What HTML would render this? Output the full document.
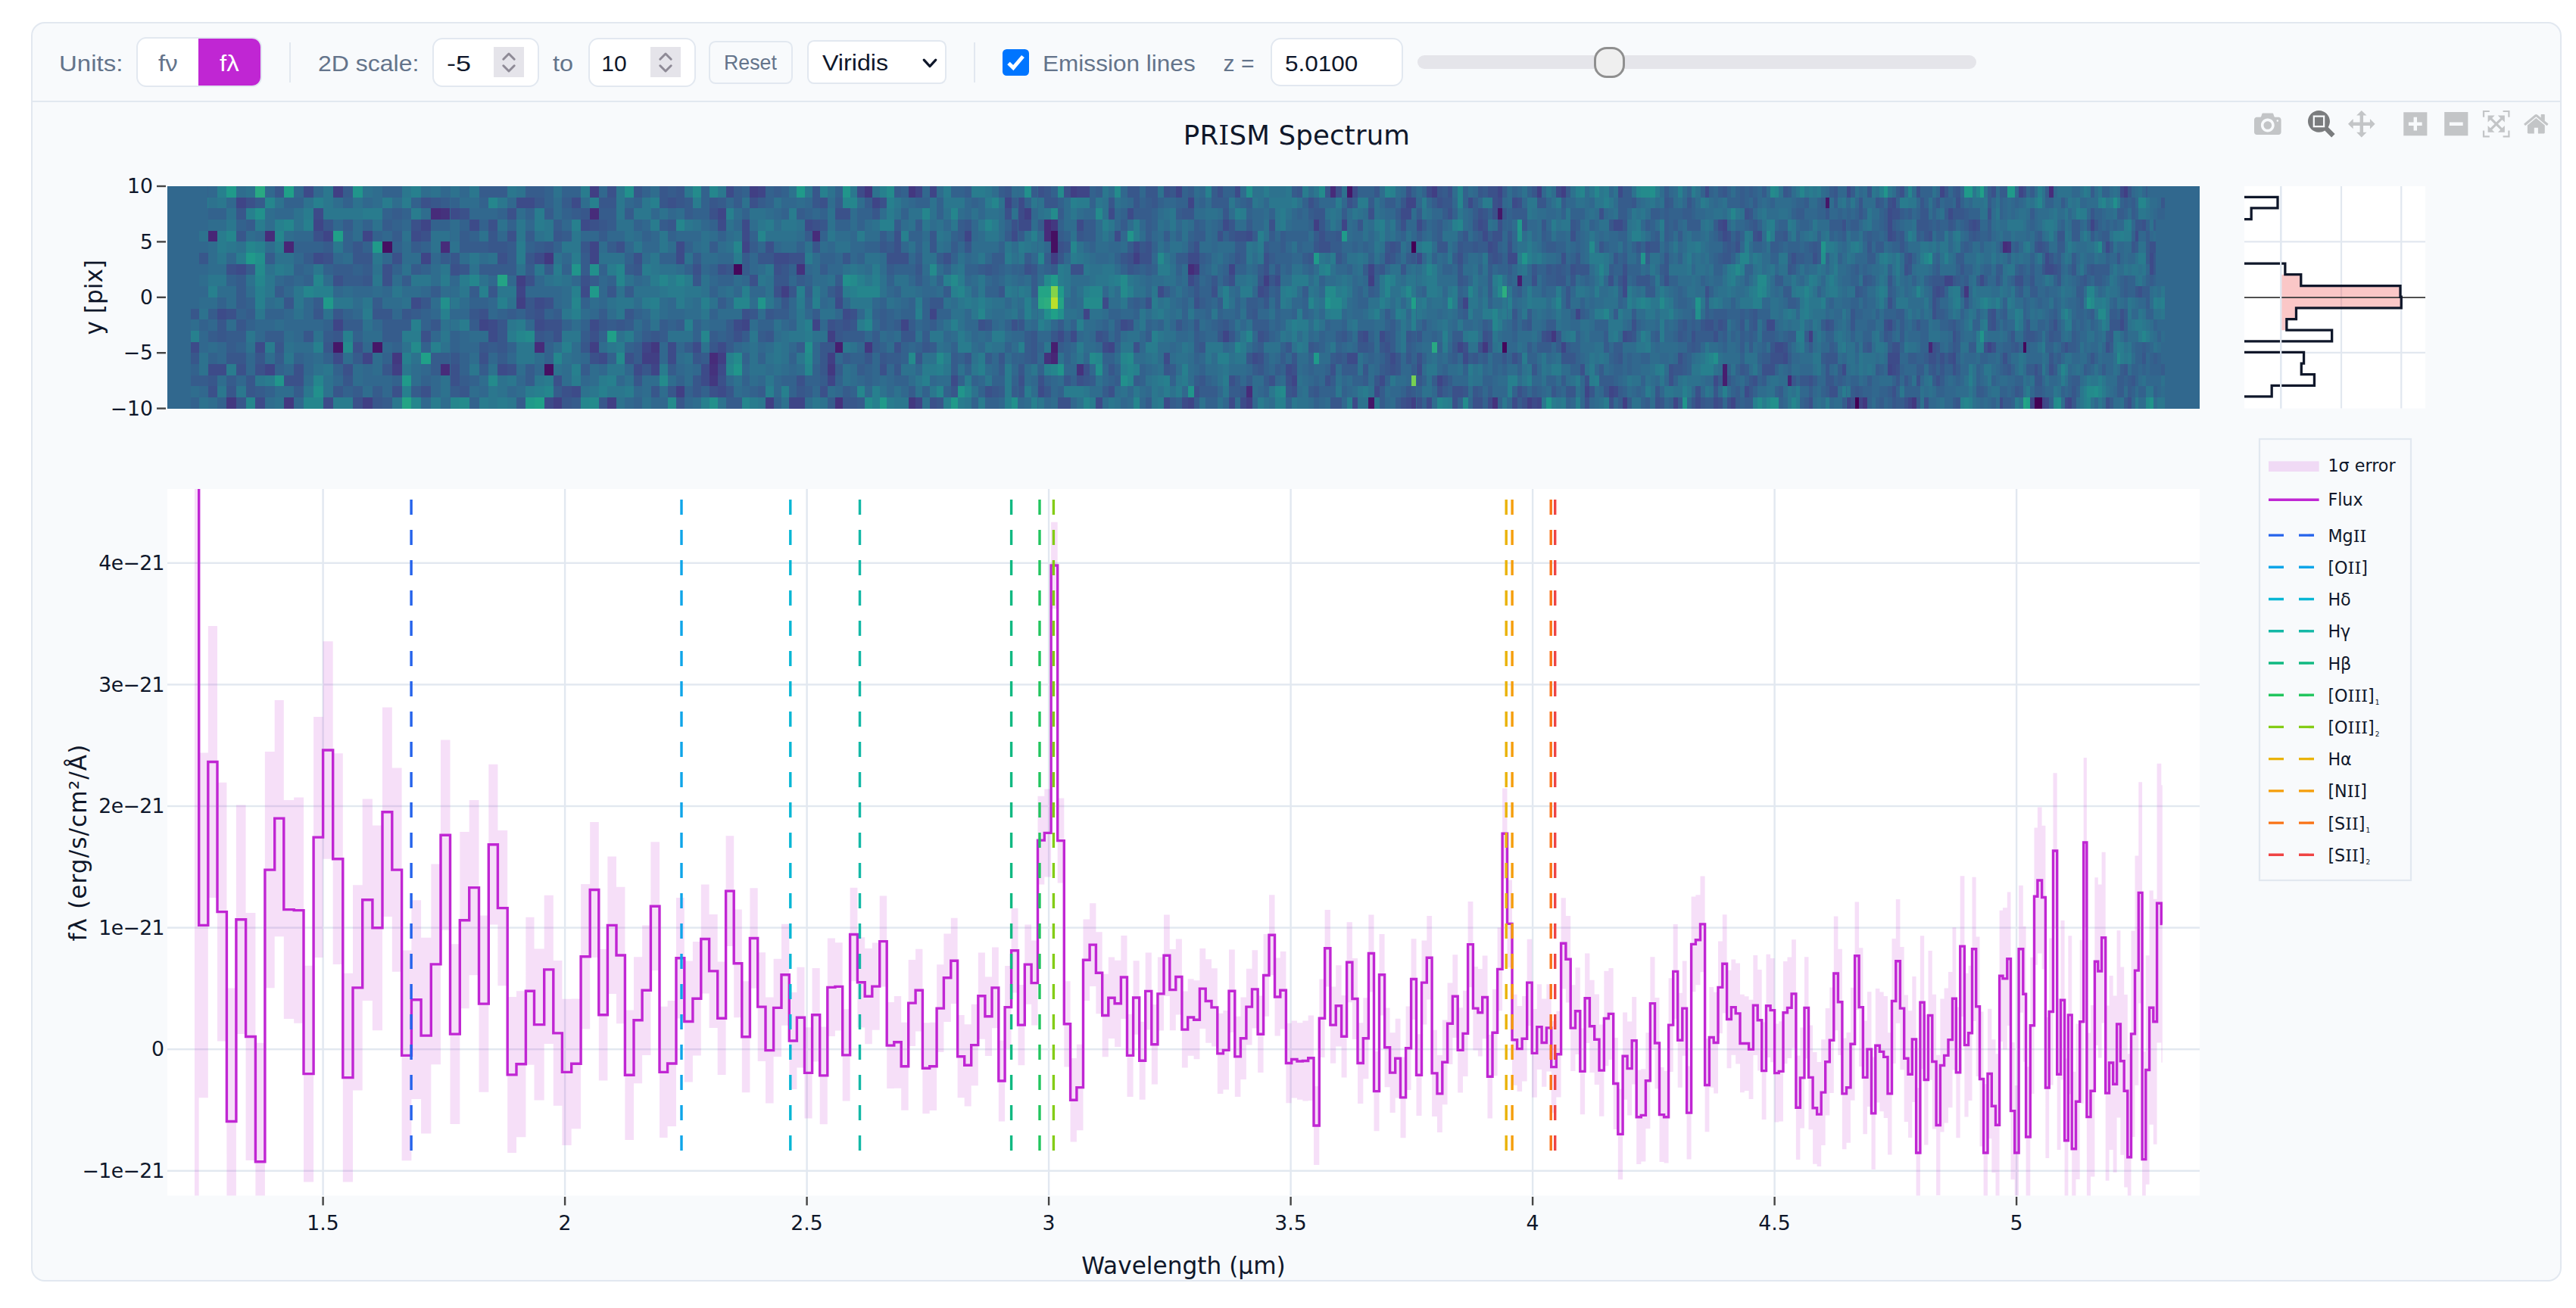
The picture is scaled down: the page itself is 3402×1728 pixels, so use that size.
<!DOCTYPE html><html lang="en"><head><meta charset="utf-8"><title>PRISM Spectrum</title><style>
*{box-sizing:border-box}
html,body{margin:0;padding:0;background:#fff}
body{width:3402px;height:1728px;position:relative;overflow:hidden;font-family:"Liberation Sans",Arial,sans-serif}
.card{position:absolute;left:41px;top:29px;width:3342px;height:1664px;border:2px solid #e2e8f0;border-radius:18px;background:#f8fafc}
.tb{position:absolute;left:43px;top:133px;width:3338px;height:2px;background:#e2e8f0}
.t{position:absolute;white-space:nowrap;line-height:1;color:#64748b;font-size:30px}
.d{color:#0f172a}
.box{position:absolute;background:#fff;border:2px solid #e2e8f0;border-radius:13.3px}
.div{position:absolute;width:2px;background:#e2e8f0;top:56px;height:53px}
.spin{position:absolute;width:40px;height:40px;top:62px;background:#e5e4ea}
</style></head><body>
<div class="card"></div><div class="tb"></div>
<div class="t" id="t_units" style="left:77.7px;top:68.6px;font-size:30px;transform-origin:0 50%;transform:scaleX(1.100)">Units:</div>
<div class="box" style="left:180px;top:49.3px;width:165.6px;height:65.4px;border-radius:13.3px"></div>
<div style="position:absolute;left:262px;top:51.2px;width:82px;height:61.7px;background:#c026d3;border-radius:0 11.3px 11.3px 0"></div>
<div class="t" id="t_fnu" style="left:208.7px;top:68.6px;font-size:30px;transform-origin:0 50%;transform:scaleX(1.100)">fν</div>
<div class="t" id="t_flam" style="left:289.9px;top:68.6px;font-size:30px;transform-origin:0 50%;transform:scaleX(1.100);color:#fff">fλ</div>
<div class="div" style="left:381.5px"></div>
<div class="t" id="t_scale" style="left:420.0px;top:68.6px;font-size:30px;transform-origin:0 50%;transform:scaleX(1.066)">2D scale:</div>
<div class="box" style="left:570.5px;top:49.5px;width:141px;height:65px"></div>
<div class="t d" id="t_m5" style="left:590.4px;top:68.6px;font-size:30px;transform-origin:0 50%;transform:scaleX(1.200)">-5</div>
<div class="spin" style="left:652px"><svg width="40" height="40" viewBox="0 0 40 40" style="display:block"><path d="M12.8 16.2L20 9L27.2 16.2M12.8 24.8L20 32L27.2 24.8" fill="none" stroke="#8e8a96" stroke-width="3" stroke-linecap="round" stroke-linejoin="round"/></svg></div>
<div class="t" id="t_to" style="left:730.1px;top:68.6px;font-size:30px;transform-origin:0 50%;transform:scaleX(1.080)">to</div>
<div class="box" style="left:776.7px;top:49.5px;width:142px;height:65px"></div>
<div class="t d" id="t_10" style="left:794.3px;top:68.6px;font-size:30px;transform-origin:0 50%;transform:scaleX(1.000)">10</div>
<div class="spin" style="left:859px"><svg width="40" height="40" viewBox="0 0 40 40" style="display:block"><path d="M12.8 16.2L20 9L27.2 16.2M12.8 24.8L20 32L27.2 24.8" fill="none" stroke="#8e8a96" stroke-width="3" stroke-linecap="round" stroke-linejoin="round"/></svg></div>
<div class="box" style="left:936.3px;top:54.1px;width:110.5px;height:56.8px;background:#f8fafc;border-radius:8.9px"></div>
<div class="t" id="t_reset" style="left:955.6px;top:68.6px;font-size:28px;transform-origin:0 50%;transform:scaleX(0.955)">Reset</div>
<div class="box" style="left:1065.5px;top:52.7px;width:184px;height:58.6px;border-radius:8.9px"></div>
<div class="t d" id="t_vir" style="left:1086.2px;top:68.9px;font-size:28.6px;transform-origin:0 50%;transform:scaleX(1.125)">Viridis</div>
<svg style="position:absolute;left:1215px;top:72px" width="26" height="24" viewBox="0 0 26 24"><path d="M5.2 7.2L13 15.6L20.8 7.2" fill="none" stroke="#0f172a" stroke-width="3.2" stroke-linecap="round" stroke-linejoin="round"/></svg>
<div class="div" style="left:1286px"></div>
<div style="position:absolute;left:1324px;top:64.5px;width:35px;height:35px;border-radius:5.5px;background:#0075ff"><svg width="35" height="35" viewBox="0 0 35 35" style="display:block"><path d="M8 18.5L14.2 24.5L27 9.5" fill="none" stroke="#fff" stroke-width="5" stroke-linejoin="miter"/></svg></div>
<div class="t" id="t_em" style="left:1376.5px;top:68.6px;font-size:30px;transform-origin:0 50%;transform:scaleX(1.052)">Emission lines</div>
<div class="t" id="t_z" style="left:1615.6px;top:68.6px;font-size:30px;transform-origin:0 50%;transform:scaleX(1.000)">z =</div>
<div class="box" style="left:1677.7px;top:49.7px;width:175.7px;height:64.5px"></div>
<div class="t d" id="t_zv" style="left:1697.1px;top:68.6px;font-size:30px;transform-origin:0 50%;transform:scaleX(1.049)">5.0100</div>
<div style="position:absolute;left:1871.8px;top:73px;width:738px;height:18px;border-radius:9px;background:#e5e5ea"></div>
<div style="position:absolute;left:2105px;top:61.5px;width:41px;height:41px;border-radius:17px;background:#efefef;border:3px solid #8f8f8f"></div>
<svg width="3402" height="1728" viewBox="0 0 3402 1728" style="position:absolute;left:0;top:0" font-family="DejaVu Sans, Verdana, sans-serif" fill="#0f172a">
<defs><clipPath id="cs"><rect x="221" y="646" width="2684" height="933.5"/></clipPath><clipPath id="cm"><rect x="2964" y="246" width="239" height="293.6"/></clipPath></defs>
<text x="1712.5" y="191" font-size="35.6" text-anchor="middle" letter-spacing="0.15">PR<tspan font-family="DejaVu Serif">I</tspan>SM Spectrum</text>
<g shape-rendering="crispEdges">
<rect x="221" y="246" width="2684" height="293.6" fill="#31688e"/>
<path fill="#440154" d="M1863.6 319.4h6.8v14.7h-6.8zM2449.6 524.9h5.5v14.7h-5.5zM2686.5 524.9h4.4v14.7h-4.4zM2690.9 524.9h5.7v14.7h-5.7z"/>
<path fill="#45085b" d="M969.2 348.8h10.6v14.7h-10.6zM1984.1 451.5h6.3v14.7h-6.3zM2671.8 451.5h3.8v14.7h-3.8z"/>
<path fill="#461062" d="M1388.1 304.7h8.6v14.7h-8.6zM505.0 319.4h12.8v14.7h-12.8zM1388.1 319.4h8.6v14.7h-8.6zM718.7 480.9h12.1v14.7h-12.1z"/>
<path fill="#461768" d="M1778.6 246.0h7.3v14.7h-7.3zM2410.7 260.7h5.5v14.7h-5.5zM1977.6 275.4h6.6v14.7h-6.6zM439.7 451.5h13.1v14.7h-13.1zM491.9 451.5h13.1v14.7h-13.1zM1807.4 524.9h7.1v14.7h-7.1z"/>
<path fill="#471e6f" d="M2003.6 363.4h6.6v14.7h-6.6zM1102.9 451.5h9.8v14.7h-9.8zM1388.1 451.5h8.6v14.7h-8.6zM2274.8 480.9h5.8v14.7h-5.8zM2274.8 495.6h5.8v14.7h-5.8z"/>
<path fill="#482676" d="M274.8 304.7h12.1v14.7h-12.1zM374.8 319.4h13.5v14.7h-13.5zM2546.5 451.5h5.3v14.7h-5.3zM1388.1 466.2h8.6v14.7h-8.6zM2360.5 495.6h5.5v14.7h-5.5z"/>
<path fill="#472c7a" d="M1756.9 246.0h7.3v14.7h-7.3zM2706.2 246.0h5.4v14.7h-5.4zM569.3 275.4h12.8v14.7h-12.8zM779.2 275.4h11.6v14.7h-11.6zM1379.3 290.0h8.8v14.7h-8.8zM349.9 304.7h12.8v14.7h-12.8zM1072.6 304.7h10.1v14.7h-10.1zM1379.3 304.7h8.8v14.7h-8.8zM582.0 319.4h12.4v14.7h-12.4zM2645.0 319.4h5.7v14.7h-5.7zM1568.7 348.8h7.8v14.7h-7.8zM705.5 451.5h13.1v14.7h-13.1zM936.6 466.2h11.1v14.7h-11.1zM582.0 480.9h12.4v14.7h-12.4zM1645.9 510.2h7.6v14.7h-7.6z"/>
<path fill="#45327d" d="M582.0 275.4h12.4v14.7h-12.4zM2650.8 319.4h4.8v14.7h-4.8zM1052.4 348.8h10.1v14.7h-10.1zM1379.3 466.2h8.8v14.7h-8.8zM936.6 480.9h11.1v14.7h-11.1zM1421.9 480.9h8.6v14.7h-8.6zM1102.9 524.9h9.8v14.7h-9.8zM1971.0 524.9h6.6v14.7h-6.6z"/>
<path fill="#433880" d="M1142.2 246.0h9.6v14.7h-9.6zM1199.7 246.0h9.3v14.7h-9.3zM1388.1 290.0h8.6v14.7h-8.6zM718.7 334.1h12.1v14.7h-12.1zM1576.6 348.8h7.8v14.7h-7.8zM2594.4 378.1h5.2v14.7h-5.2zM2048.7 436.8h6.6v14.7h-6.6zM859.4 451.5h11.6v14.7h-11.6zM1142.2 451.5h9.6v14.7h-9.6zM1957.7 451.5h6.8v14.7h-6.8zM517.8 466.2h12.8v14.7h-12.8zM1092.8 480.9h10.1v14.7h-10.1zM936.6 495.6h11.1v14.7h-11.1zM299.4 524.9h12.4v14.7h-12.4zM374.8 524.9h13.5v14.7h-13.5zM1199.7 524.9h9.3v14.7h-9.3zM2460.4 524.9h5.5v14.7h-5.5zM2525.3 524.9h5.3v14.7h-5.3z"/>
<path fill="#413f84" d="M439.7 246.0h13.1v14.7h-13.1zM779.2 246.0h11.6v14.7h-11.6zM990.4 246.0h10.3v14.7h-10.3zM1413.6 246.0h8.3v14.7h-8.3zM1891.1 246.0h6.8v14.7h-6.8zM2029.8 246.0h6.3v14.7h-6.3zM2061.6 246.0h6.3v14.7h-6.3zM2805.2 246.0h4.6v14.7h-4.6zM1353.3 275.4h8.8v14.7h-8.8zM1735.0 290.0h7.3v14.7h-7.3zM1388.1 334.1h8.6v14.7h-8.6zM1496.6 334.1h8.1v14.7h-8.1zM682.0 363.4h12.4v14.7h-12.4zM1668.6 363.4h7.3v14.7h-7.3zM1807.4 363.4h7.1v14.7h-7.1zM1032.0 378.1h10.3v14.7h-10.3zM682.0 392.8h12.4v14.7h-12.4zM1092.8 436.8h10.1v14.7h-10.1zM2388.5 436.8h5.5v14.7h-5.5zM779.2 451.5h11.6v14.7h-11.6zM848.1 466.2h11.4v14.7h-11.4zM859.4 466.2h11.6v14.7h-11.6zM947.7 466.2h10.8v14.7h-10.8zM1092.8 466.2h10.1v14.7h-10.1zM517.8 480.9h12.8v14.7h-12.8zM893.0 510.2h10.8v14.7h-10.8zM478.7 524.9h13.1v14.7h-13.1zM730.8 524.9h11.6v14.7h-11.6zM802.4 524.9h11.6v14.7h-11.6zM1011.0 524.9h10.6v14.7h-10.6zM1645.9 524.9h7.6v14.7h-7.6zM1863.6 524.9h6.8v14.7h-6.8zM2016.7 524.9h6.6v14.7h-6.6zM2143.1 524.9h6.1v14.7h-6.1z"/>
<path fill="#3f4587" d="M1000.7 246.0h10.3v14.7h-10.3zM1209.1 246.0h9.3v14.7h-9.3zM1227.7 246.0h9.3v14.7h-9.3zM1421.9 246.0h8.6v14.7h-8.6zM1430.5 246.0h8.6v14.7h-8.6zM1552.8 246.0h8.1v14.7h-8.1zM1977.6 246.0h6.6v14.7h-6.6zM2562.4 246.0h5.3v14.7h-5.3zM2666.1 246.0h5.7v14.7h-5.7zM311.9 260.7h12.8v14.7h-12.8zM1151.8 260.7h9.8v14.7h-9.8zM1327.1 260.7h8.6v14.7h-8.6zM1568.7 260.7h7.8v14.7h-7.8zM1856.6 260.7h7.1v14.7h-7.1zM1863.6 260.7h6.8v14.7h-6.8zM947.7 275.4h10.8v14.7h-10.8zM414.1 290.0h12.4v14.7h-12.4zM556.1 290.0h13.1v14.7h-13.1zM1771.6 290.0h7.1v14.7h-7.1zM2274.8 290.0h5.8v14.7h-5.8zM2761.0 290.0h5.4v14.7h-5.4zM426.6 304.7h13.1v14.7h-13.1zM478.7 304.7h13.1v14.7h-13.1zM1273.7 304.7h9.1v14.7h-9.1zM779.2 319.4h11.6v14.7h-11.6zM979.8 319.4h10.6v14.7h-10.6zM556.1 334.1h13.1v14.7h-13.1zM779.2 334.1h11.6v14.7h-11.6zM1623.0 348.8h7.8v14.7h-7.8zM1807.4 348.8h7.1v14.7h-7.1zM2567.6 363.4h5.4v14.7h-5.4zM2573.0 363.4h5.5v14.7h-5.5zM682.0 378.1h12.4v14.7h-12.4zM1932.0 392.8h6.6v14.7h-6.6zM1227.7 407.5h9.3v14.7h-9.3zM1430.5 407.5h8.6v14.7h-8.6zM2080.5 407.5h6.3v14.7h-6.3zM439.7 422.2h13.1v14.7h-13.1zM632.5 422.2h12.8v14.7h-12.8zM979.8 422.2h10.6v14.7h-10.6zM1072.6 422.2h10.1v14.7h-10.1zM1190.2 422.2h9.6v14.7h-9.6zM1615.4 436.8h7.6v14.7h-7.6zM848.1 451.5h11.4v14.7h-11.4zM1463.8 451.5h8.3v14.7h-8.3zM1925.2 451.5h6.8v14.7h-6.8zM2061.6 451.5h6.3v14.7h-6.3zM2625.0 451.5h5.4v14.7h-5.4zM478.7 466.2h13.1v14.7h-13.1zM349.9 480.9h12.8v14.7h-12.8zM859.4 480.9h11.6v14.7h-11.6zM2493.0 480.9h5.5v14.7h-5.5zM1092.8 495.6h10.1v14.7h-10.1zM1705.7 495.6h7.3v14.7h-7.3zM1898.0 495.6h6.8v14.7h-6.8zM2093.1 510.2h6.3v14.7h-6.3zM2124.4 510.2h6.3v14.7h-6.3zM1042.3 524.9h10.1v14.7h-10.1zM1052.4 524.9h10.1v14.7h-10.1zM1209.1 524.9h9.3v14.7h-9.3zM1568.7 524.9h7.8v14.7h-7.8zM2029.8 524.9h6.3v14.7h-6.3zM2209.7 524.9h6.1v14.7h-6.1zM2286.4 524.9h5.8v14.7h-5.8zM2438.5 524.9h5.5v14.7h-5.5zM2455.1 524.9h5.3v14.7h-5.3zM2520.0 524.9h5.3v14.7h-5.3zM2681.3 524.9h5.2v14.7h-5.2zM2696.6 524.9h4.8v14.7h-4.8zM2731.4 524.9h4.8v14.7h-4.8z"/>
<path fill="#3d4b89" d="M401.0 246.0h13.1v14.7h-13.1zM958.6 246.0h10.6v14.7h-10.6zM1132.4 246.0h9.8v14.7h-9.8zM1630.8 246.0h7.6v14.7h-7.6zM1785.9 246.0h7.1v14.7h-7.1zM1884.3 246.0h6.8v14.7h-6.8zM2055.3 246.0h6.3v14.7h-6.3zM2136.8 246.0h6.3v14.7h-6.3zM2251.6 246.0h5.8v14.7h-5.8zM2438.5 246.0h5.5v14.7h-5.5zM2800.4 246.0h4.8v14.7h-4.8zM682.0 260.7h12.4v14.7h-12.4zM694.4 260.7h11.1v14.7h-11.1zM754.7 260.7h12.4v14.7h-12.4zM1344.5 260.7h8.8v14.7h-8.8zM1938.6 260.7h6.8v14.7h-6.8zM1977.6 260.7h6.6v14.7h-6.6zM1997.0 260.7h6.6v14.7h-6.6zM2498.5 260.7h5.3v14.7h-5.3zM414.1 275.4h12.4v14.7h-12.4zM594.5 275.4h12.8v14.7h-12.8zM1344.5 275.4h8.8v14.7h-8.8zM1463.8 275.4h8.3v14.7h-8.3zM1488.5 275.4h8.1v14.7h-8.1zM1849.5 275.4h7.1v14.7h-7.1zM1856.6 275.4h7.1v14.7h-7.1zM2493.0 275.4h5.5v14.7h-5.5zM2573.0 275.4h5.5v14.7h-5.5zM619.7 290.0h12.8v14.7h-12.8zM767.1 290.0h12.1v14.7h-12.1zM947.7 290.0h10.8v14.7h-10.8zM979.8 290.0h10.6v14.7h-10.6zM1062.5 290.0h10.1v14.7h-10.1zM1344.5 290.0h8.8v14.7h-8.8zM1353.3 290.0h8.8v14.7h-8.8zM1421.9 290.0h8.6v14.7h-8.6zM1615.4 290.0h7.6v14.7h-7.6zM1870.5 290.0h7.1v14.7h-7.1zM1951.9 290.0h5.7v14.7h-5.7zM2130.7 290.0h6.1v14.7h-6.1zM2136.8 290.0h6.3v14.7h-6.3zM2269.0 290.0h5.8v14.7h-5.8zM2493.0 290.0h5.5v14.7h-5.5zM2604.5 290.0h5.2v14.7h-5.2zM543.4 304.7h12.8v14.7h-12.8zM979.8 304.7h10.6v14.7h-10.6zM1335.6 304.7h8.8v14.7h-8.8zM1472.1 304.7h8.3v14.7h-8.3zM1645.9 304.7h7.6v14.7h-7.6zM1957.7 304.7h6.8v14.7h-6.8zM2274.8 304.7h5.8v14.7h-5.8zM2321.2 304.7h5.5v14.7h-5.5zM2493.0 304.7h5.5v14.7h-5.5zM2819.5 304.7h4.8v14.7h-4.8zM893.0 319.4h10.8v14.7h-10.8zM1496.6 319.4h8.1v14.7h-8.1zM1964.5 319.4h6.6v14.7h-6.6zM2780.7 319.4h4.8v14.7h-4.8zM414.1 334.1h12.4v14.7h-12.4zM705.5 334.1h13.1v14.7h-13.1zM893.0 334.1h10.8v14.7h-10.8zM1021.6 334.1h10.3v14.7h-10.3zM1032.0 334.1h10.3v14.7h-10.3zM1568.7 334.1h7.8v14.7h-7.8zM1576.6 334.1h7.8v14.7h-7.8zM1870.5 334.1h7.1v14.7h-7.1zM1990.5 334.1h6.6v14.7h-6.6zM1997.0 334.1h6.6v14.7h-6.6zM2701.4 334.1h4.8v14.7h-4.8zM2838.6 334.1h5.2v14.7h-5.2zM311.9 348.8h12.8v14.7h-12.8zM2701.4 348.8h4.8v14.7h-4.8zM2706.2 348.8h5.4v14.7h-5.4zM2838.6 348.8h5.2v14.7h-5.2zM1568.7 363.4h7.8v14.7h-7.8zM1683.5 363.4h7.3v14.7h-7.3zM2143.1 363.4h6.1v14.7h-6.1zM2614.5 363.4h5.2v14.7h-5.2zM767.1 378.1h12.1v14.7h-12.1zM1528.9 378.1h8.1v14.7h-8.1zM1661.1 378.1h7.6v14.7h-7.6zM2143.1 378.1h6.1v14.7h-6.1zM2557.1 378.1h5.3v14.7h-5.3zM543.4 392.8h12.8v14.7h-12.8zM705.5 392.8h13.1v14.7h-13.1zM1102.9 392.8h9.8v14.7h-9.8zM1455.7 392.8h8.1v14.7h-8.1zM287.0 407.5h12.4v14.7h-12.4zM1112.7 407.5h9.8v14.7h-9.8zM645.3 422.2h12.1v14.7h-12.1zM705.5 422.2h13.1v14.7h-13.1zM779.2 422.2h11.6v14.7h-11.6zM969.2 422.2h10.6v14.7h-10.6zM1480.4 422.2h8.1v14.7h-8.1zM2332.5 422.2h5.5v14.7h-5.5zM2338.1 422.2h5.5v14.7h-5.5zM2493.0 422.2h5.5v14.7h-5.5zM2800.4 422.2h4.8v14.7h-4.8zM645.3 436.8h12.1v14.7h-12.1zM1396.7 436.8h8.6v14.7h-8.6zM1413.6 436.8h8.3v14.7h-8.3zM1800.3 436.8h7.1v14.7h-7.1zM1821.5 436.8h7.1v14.7h-7.1zM2042.4 436.8h6.3v14.7h-6.3zM2143.1 436.8h6.1v14.7h-6.1zM252.4 451.5h10.3v14.7h-10.3zM337.4 451.5h12.4v14.7h-12.4zM881.6 451.5h11.4v14.7h-11.4zM914.9 451.5h10.8v14.7h-10.8zM947.7 451.5h10.8v14.7h-10.8zM1455.7 451.5h8.1v14.7h-8.1zM2343.6 451.5h5.5v14.7h-5.5zM2349.2 451.5h5.8v14.7h-5.8zM439.7 466.2h13.1v14.7h-13.1zM790.8 466.2h11.6v14.7h-11.6zM881.6 466.2h11.4v14.7h-11.4zM1537.0 466.2h7.8v14.7h-7.8zM1653.5 466.2h7.6v14.7h-7.6zM1778.6 466.2h7.3v14.7h-7.3zM1785.9 466.2h7.1v14.7h-7.1zM1835.6 466.2h7.1v14.7h-7.1zM1932.0 466.2h6.6v14.7h-6.6zM2355.0 466.2h5.5v14.7h-5.5zM2493.0 466.2h5.5v14.7h-5.5zM2498.5 466.2h5.3v14.7h-5.3zM2503.8 466.2h5.5v14.7h-5.5zM2578.5 466.2h4.8v14.7h-4.8zM274.8 480.9h12.1v14.7h-12.1zM287.0 480.9h12.4v14.7h-12.4zM657.4 480.9h12.8v14.7h-12.8zM837.0 480.9h11.1v14.7h-11.1zM925.8 480.9h10.8v14.7h-10.8zM947.7 480.9h10.8v14.7h-10.8zM1698.4 480.9h7.3v14.7h-7.3zM1870.5 480.9h7.1v14.7h-7.1zM2432.9 480.9h5.5v14.7h-5.5zM2498.5 480.9h5.3v14.7h-5.3zM925.8 495.6h10.8v14.7h-10.8zM1255.8 495.6h8.8v14.7h-8.8zM1821.5 495.6h7.1v14.7h-7.1zM2263.2 495.6h5.8v14.7h-5.8zM754.7 510.2h12.4v14.7h-12.4zM947.7 510.2h10.8v14.7h-10.8zM1370.5 510.2h8.8v14.7h-8.8zM1814.5 510.2h7.1v14.7h-7.1zM2130.7 510.2h6.1v14.7h-6.1zM2303.8 510.2h5.8v14.7h-5.8zM337.4 524.9h12.4v14.7h-12.4zM426.6 524.9h13.1v14.7h-13.1zM718.7 524.9h12.1v14.7h-12.1zM1447.4 524.9h8.3v14.7h-8.3zM1537.0 524.9h7.8v14.7h-7.8zM1560.9 524.9h7.8v14.7h-7.8zM1623.0 524.9h7.8v14.7h-7.8zM1638.4 524.9h7.6v14.7h-7.6zM1785.9 524.9h7.1v14.7h-7.1zM1856.6 524.9h7.1v14.7h-7.1zM1884.3 524.9h6.8v14.7h-6.8zM1964.5 524.9h6.6v14.7h-6.6zM1997.0 524.9h6.6v14.7h-6.6zM2023.2 524.9h6.6v14.7h-6.6zM2239.4 524.9h6.1v14.7h-6.1zM2263.2 524.9h5.8v14.7h-5.8zM2640.6 524.9h4.4v14.7h-4.4zM2701.4 524.9h4.8v14.7h-4.8zM2726.6 524.9h4.8v14.7h-4.8z"/>
<path fill="#3b518a" d="M802.4 246.0h11.6v14.7h-11.6zM1370.5 246.0h8.8v14.7h-8.8zM1405.3 246.0h8.3v14.7h-8.3zM1537.0 246.0h7.8v14.7h-7.8zM1607.8 246.0h7.6v14.7h-7.6zM1764.2 246.0h7.3v14.7h-7.3zM1856.6 246.0h7.1v14.7h-7.1zM1911.6 246.0h6.8v14.7h-6.8zM1964.5 246.0h6.6v14.7h-6.6zM1971.0 246.0h6.6v14.7h-6.6zM2509.4 246.0h5.3v14.7h-5.3zM2530.6 246.0h5.3v14.7h-5.3zM2630.3 246.0h5.2v14.7h-5.2zM2671.8 246.0h3.8v14.7h-3.8zM324.6 260.7h12.8v14.7h-12.8zM556.1 260.7h13.1v14.7h-13.1zM881.6 260.7h11.4v14.7h-11.4zM990.4 260.7h10.3v14.7h-10.3zM1082.7 260.7h10.1v14.7h-10.1zM1161.7 260.7h9.6v14.7h-9.6zM1727.7 260.7h7.3v14.7h-7.3zM1778.6 260.7h7.3v14.7h-7.3zM1898.0 260.7h6.8v14.7h-6.8zM1971.0 260.7h6.6v14.7h-6.6zM2003.6 260.7h6.6v14.7h-6.6zM2493.0 260.7h5.5v14.7h-5.5zM2583.3 260.7h5.4v14.7h-5.4zM607.3 275.4h12.4v14.7h-12.4zM670.2 275.4h11.8v14.7h-11.8zM936.6 275.4h11.1v14.7h-11.1zM1102.9 275.4h9.8v14.7h-9.8zM1112.7 275.4h9.8v14.7h-9.8zM1327.1 275.4h8.6v14.7h-8.6zM1807.4 275.4h7.1v14.7h-7.1zM1911.6 275.4h6.8v14.7h-6.8zM1951.9 275.4h5.7v14.7h-5.7zM1971.0 275.4h6.6v14.7h-6.6zM2112.0 275.4h6.3v14.7h-6.3zM2303.8 275.4h5.8v14.7h-5.8zM2498.5 275.4h5.3v14.7h-5.3zM2503.8 275.4h5.5v14.7h-5.5zM2625.0 275.4h5.4v14.7h-5.4zM543.4 290.0h12.8v14.7h-12.8zM645.3 290.0h12.1v14.7h-12.1zM779.2 290.0h11.6v14.7h-11.6zM1072.6 290.0h10.1v14.7h-10.1zM1335.6 290.0h8.8v14.7h-8.8zM1676.0 290.0h7.6v14.7h-7.6zM1849.5 290.0h7.1v14.7h-7.1zM1957.7 290.0h6.8v14.7h-6.8zM1977.6 290.0h6.6v14.7h-6.6zM2432.9 290.0h5.5v14.7h-5.5zM2599.6 290.0h5.0v14.7h-5.0zM2609.7 290.0h4.8v14.7h-4.8zM2829.1 290.0h4.8v14.7h-4.8zM414.1 304.7h12.4v14.7h-12.4zM556.1 304.7h13.1v14.7h-13.1zM670.2 304.7h11.8v14.7h-11.8zM1180.8 304.7h9.3v14.7h-9.3zM1607.8 304.7h7.6v14.7h-7.6zM1630.8 304.7h7.6v14.7h-7.6zM1638.4 304.7h7.6v14.7h-7.6zM1742.3 304.7h7.3v14.7h-7.3zM1971.0 304.7h6.6v14.7h-6.6zM1977.6 304.7h6.6v14.7h-6.6zM2074.2 304.7h6.3v14.7h-6.3zM2280.6 304.7h5.8v14.7h-5.8zM2315.4 304.7h5.8v14.7h-5.8zM2498.5 304.7h5.3v14.7h-5.3zM2546.5 304.7h5.3v14.7h-5.3zM814.0 319.4h11.4v14.7h-11.4zM1011.0 319.4h10.6v14.7h-10.6zM1180.8 319.4h9.3v14.7h-9.3zM1396.7 319.4h8.6v14.7h-8.6zM1512.7 319.4h8.1v14.7h-8.1zM1576.6 319.4h7.8v14.7h-7.8zM1742.3 319.4h7.3v14.7h-7.3zM1749.6 319.4h7.3v14.7h-7.3zM1835.6 319.4h7.1v14.7h-7.1zM1971.0 319.4h6.6v14.7h-6.6zM1990.5 319.4h6.6v14.7h-6.6zM2173.4 319.4h6.1v14.7h-6.1zM2292.2 319.4h5.8v14.7h-5.8zM2690.9 319.4h5.7v14.7h-5.7zM2838.6 319.4h5.2v14.7h-5.2zM2843.8 319.4h3.2v14.7h-3.2zM426.6 334.1h13.1v14.7h-13.1zM517.8 334.1h12.8v14.7h-12.8zM657.4 334.1h12.8v14.7h-12.8zM837.0 334.1h11.1v14.7h-11.1zM1042.3 334.1h10.1v14.7h-10.1zM1052.4 334.1h10.1v14.7h-10.1zM1171.2 334.1h9.6v14.7h-9.6zM1180.8 334.1h9.3v14.7h-9.3zM1190.2 334.1h9.6v14.7h-9.6zM1246.4 334.1h9.3v14.7h-9.3zM1488.5 334.1h8.1v14.7h-8.1zM1504.7 334.1h8.1v14.7h-8.1zM1512.7 334.1h8.1v14.7h-8.1zM1668.6 334.1h7.3v14.7h-7.3zM1828.6 334.1h7.1v14.7h-7.1zM1925.2 334.1h6.8v14.7h-6.8zM1971.0 334.1h6.6v14.7h-6.6zM2061.6 334.1h6.3v14.7h-6.3zM2366.1 334.1h5.8v14.7h-5.8zM2394.1 334.1h5.5v14.7h-5.5zM2520.0 334.1h5.3v14.7h-5.3zM299.4 348.8h12.4v14.7h-12.4zM505.0 348.8h12.8v14.7h-12.8zM594.5 348.8h12.8v14.7h-12.8zM914.9 348.8h10.8v14.7h-10.8zM947.7 348.8h10.8v14.7h-10.8zM1021.6 348.8h10.3v14.7h-10.3zM1353.3 348.8h8.8v14.7h-8.8zM1413.6 348.8h8.3v14.7h-8.3zM1421.9 348.8h8.6v14.7h-8.6zM1668.6 348.8h7.3v14.7h-7.3zM2074.2 348.8h6.3v14.7h-6.3zM2143.1 348.8h6.1v14.7h-6.1zM2514.7 348.8h5.3v14.7h-5.3zM2711.5 348.8h5.2v14.7h-5.2zM439.7 363.4h13.1v14.7h-13.1zM505.0 363.4h12.8v14.7h-12.8zM694.4 363.4h11.1v14.7h-11.1zM767.1 363.4h12.1v14.7h-12.1zM990.4 363.4h10.3v14.7h-10.3zM1623.0 363.4h7.8v14.7h-7.8zM2023.2 363.4h6.6v14.7h-6.6zM2124.4 363.4h6.3v14.7h-6.3zM2197.6 363.4h6.1v14.7h-6.1zM2660.7 363.4h5.4v14.7h-5.4zM2666.1 363.4h5.7v14.7h-5.7zM1021.6 378.1h10.3v14.7h-10.3zM1102.9 378.1h9.8v14.7h-9.8zM1600.0 378.1h7.8v14.7h-7.8zM1668.6 378.1h7.3v14.7h-7.3zM2251.6 378.1h5.8v14.7h-5.8zM2551.8 378.1h5.3v14.7h-5.3zM2562.4 378.1h5.3v14.7h-5.3zM2824.3 378.1h4.8v14.7h-4.8zM718.7 392.8h12.1v14.7h-12.1zM1512.7 392.8h8.1v14.7h-8.1zM1576.6 392.8h7.8v14.7h-7.8zM2493.0 392.8h5.5v14.7h-5.5zM2551.8 392.8h5.3v14.7h-5.3zM299.4 407.5h12.4v14.7h-12.4zM632.5 407.5h12.8v14.7h-12.8zM705.5 407.5h13.1v14.7h-13.1zM979.8 407.5h10.6v14.7h-10.6zM1122.6 407.5h9.8v14.7h-9.8zM2551.8 407.5h5.3v14.7h-5.3zM2630.3 407.5h5.2v14.7h-5.2zM2800.4 407.5h4.8v14.7h-4.8zM718.7 422.2h12.1v14.7h-12.1zM730.8 422.2h11.6v14.7h-11.6zM1092.8 422.2h10.1v14.7h-10.1zM1112.7 422.2h9.8v14.7h-9.8zM1291.8 422.2h9.1v14.7h-9.1zM1335.6 422.2h8.8v14.7h-8.8zM1488.5 422.2h8.1v14.7h-8.1zM2155.2 422.2h6.1v14.7h-6.1zM2251.6 422.2h5.8v14.7h-5.8zM2257.4 422.2h5.8v14.7h-5.8zM2269.0 422.2h5.8v14.7h-5.8zM2410.7 422.2h5.5v14.7h-5.5zM2487.7 422.2h5.3v14.7h-5.3zM2630.3 422.2h5.2v14.7h-5.2zM2711.5 422.2h5.2v14.7h-5.2zM556.1 436.8h13.1v14.7h-13.1zM730.8 436.8h11.6v14.7h-11.6zM779.2 436.8h11.6v14.7h-11.6zM969.2 436.8h10.6v14.7h-10.6zM1447.4 436.8h8.3v14.7h-8.3zM1661.1 436.8h7.6v14.7h-7.6zM1793.0 436.8h7.3v14.7h-7.3zM1957.7 436.8h6.8v14.7h-6.8zM2036.1 436.8h6.3v14.7h-6.3zM2149.1 436.8h6.1v14.7h-6.1zM2233.6 436.8h5.8v14.7h-5.8zM2263.2 436.8h5.8v14.7h-5.8zM2578.5 436.8h4.8v14.7h-4.8zM466.0 451.5h12.8v14.7h-12.8zM1180.8 451.5h9.3v14.7h-9.3zM1496.6 451.5h8.1v14.7h-8.1zM1828.6 451.5h7.1v14.7h-7.1zM1932.0 451.5h6.6v14.7h-6.6zM1951.9 451.5h5.7v14.7h-5.7zM2355.0 451.5h5.5v14.7h-5.5zM2498.5 451.5h5.3v14.7h-5.3zM2503.8 451.5h5.5v14.7h-5.5zM2551.8 451.5h5.3v14.7h-5.3zM2619.6 451.5h5.4v14.7h-5.4zM2630.3 451.5h5.2v14.7h-5.2zM2726.6 451.5h4.8v14.7h-4.8zM2780.7 451.5h4.8v14.7h-4.8zM632.5 466.2h12.8v14.7h-12.8zM779.2 466.2h11.6v14.7h-11.6zM825.4 466.2h11.6v14.7h-11.6zM1661.1 466.2h7.6v14.7h-7.6zM1870.5 466.2h7.1v14.7h-7.1zM1997.0 466.2h6.6v14.7h-6.6zM2215.7 466.2h6.1v14.7h-6.1zM2338.1 466.2h5.5v14.7h-5.5zM2343.6 466.2h5.5v14.7h-5.5zM2349.2 466.2h5.8v14.7h-5.8zM2546.5 466.2h5.3v14.7h-5.3zM2551.8 466.2h5.3v14.7h-5.3zM2562.4 466.2h5.3v14.7h-5.3zM2573.0 466.2h5.5v14.7h-5.5zM2645.0 466.2h5.7v14.7h-5.7zM311.9 480.9h12.8v14.7h-12.8zM337.4 480.9h12.4v14.7h-12.4zM388.2 480.9h12.8v14.7h-12.8zM452.8 480.9h13.1v14.7h-13.1zM594.5 480.9h12.8v14.7h-12.8zM670.2 480.9h11.8v14.7h-11.8zM1161.7 480.9h9.6v14.7h-9.6zM1430.5 480.9h8.6v14.7h-8.6zM1705.7 480.9h7.3v14.7h-7.3zM1756.9 480.9h7.3v14.7h-7.3zM1835.6 480.9h7.1v14.7h-7.1zM2086.8 480.9h6.3v14.7h-6.3zM2203.6 480.9h6.1v14.7h-6.1zM2326.7 480.9h5.8v14.7h-5.8zM2332.5 480.9h5.5v14.7h-5.5zM2338.1 480.9h5.5v14.7h-5.5zM2503.8 480.9h5.5v14.7h-5.5zM2578.5 480.9h4.8v14.7h-4.8zM2686.5 480.9h4.4v14.7h-4.4zM2706.2 480.9h5.4v14.7h-5.4zM374.8 495.6h13.5v14.7h-13.5zM388.2 495.6h12.8v14.7h-12.8zM594.5 495.6h12.8v14.7h-12.8zM730.8 495.6h11.6v14.7h-11.6zM947.7 495.6h10.8v14.7h-10.8zM1052.4 495.6h10.1v14.7h-10.1zM1344.5 495.6h8.8v14.7h-8.8zM1370.5 495.6h8.8v14.7h-8.8zM1421.9 495.6h8.6v14.7h-8.6zM1623.0 495.6h7.8v14.7h-7.8zM1676.0 495.6h7.6v14.7h-7.6zM1698.4 495.6h7.3v14.7h-7.3zM1749.6 495.6h7.3v14.7h-7.3zM1904.8 495.6h6.8v14.7h-6.8zM2093.1 495.6h6.3v14.7h-6.3zM2203.6 495.6h6.1v14.7h-6.1zM2315.4 495.6h5.8v14.7h-5.8zM2388.5 495.6h5.5v14.7h-5.5zM2530.6 495.6h5.3v14.7h-5.3zM2557.1 495.6h5.3v14.7h-5.3zM274.8 510.2h12.1v14.7h-12.1zM517.8 510.2h12.8v14.7h-12.8zM556.1 510.2h13.1v14.7h-13.1zM742.4 510.2h12.4v14.7h-12.4zM936.6 510.2h11.1v14.7h-11.1zM1082.7 510.2h10.1v14.7h-10.1zM1300.9 510.2h9.1v14.7h-9.1zM1463.8 510.2h8.3v14.7h-8.3zM1576.6 510.2h7.8v14.7h-7.8zM1705.7 510.2h7.3v14.7h-7.3zM1898.0 510.2h6.8v14.7h-6.8zM1918.4 510.2h6.8v14.7h-6.8zM1925.2 510.2h6.8v14.7h-6.8zM2003.6 510.2h6.6v14.7h-6.6zM2239.4 510.2h6.1v14.7h-6.1zM2416.3 510.2h5.5v14.7h-5.5zM2421.8 510.2h5.5v14.7h-5.5zM2498.5 510.2h5.3v14.7h-5.3zM466.0 524.9h12.8v14.7h-12.8zM1227.7 524.9h9.3v14.7h-9.3zM1396.7 524.9h8.6v14.7h-8.6zM1405.3 524.9h8.3v14.7h-8.3zM1849.5 524.9h7.1v14.7h-7.1zM1870.5 524.9h7.1v14.7h-7.1zM1918.4 524.9h6.8v14.7h-6.8zM1945.4 524.9h6.6v14.7h-6.6zM1951.9 524.9h5.7v14.7h-5.7zM2010.1 524.9h6.6v14.7h-6.6zM2093.1 524.9h6.3v14.7h-6.3zM2124.4 524.9h6.3v14.7h-6.3zM2185.5 524.9h6.1v14.7h-6.1zM2269.0 524.9h5.8v14.7h-5.8zM2280.6 524.9h5.8v14.7h-5.8zM2388.5 524.9h5.5v14.7h-5.5zM2444.0 524.9h5.5v14.7h-5.5zM2514.7 524.9h5.3v14.7h-5.3zM2541.2 524.9h5.3v14.7h-5.3zM2780.7 524.9h4.8v14.7h-4.8zM2809.8 524.9h4.8v14.7h-4.8z"/>
<path fill="#38578b" d="M362.7 246.0h12.1v14.7h-12.1zM837.0 246.0h11.1v14.7h-11.1zM871.0 246.0h10.6v14.7h-10.6zM893.0 246.0h10.8v14.7h-10.8zM1072.6 246.0h10.1v14.7h-10.1zM1327.1 246.0h8.6v14.7h-8.6zM1379.3 246.0h8.8v14.7h-8.8zM1488.5 246.0h8.1v14.7h-8.1zM1496.6 246.0h8.1v14.7h-8.1zM1512.7 246.0h8.1v14.7h-8.1zM1520.8 246.0h8.1v14.7h-8.1zM1544.8 246.0h8.1v14.7h-8.1zM1713.0 246.0h7.3v14.7h-7.3zM1749.6 246.0h7.3v14.7h-7.3zM1814.5 246.0h7.1v14.7h-7.1zM1898.0 246.0h6.8v14.7h-6.8zM1951.9 246.0h5.7v14.7h-5.7zM2023.2 246.0h6.6v14.7h-6.6zM2274.8 246.0h5.8v14.7h-5.8zM2355.0 246.0h5.5v14.7h-5.5zM2421.8 246.0h5.5v14.7h-5.5zM2466.0 246.0h5.5v14.7h-5.5zM2567.6 246.0h5.4v14.7h-5.4zM2583.3 246.0h5.4v14.7h-5.4zM2809.8 246.0h4.8v14.7h-4.8zM569.3 260.7h12.8v14.7h-12.8zM705.5 260.7h13.1v14.7h-13.1zM790.8 260.7h11.6v14.7h-11.6zM802.4 260.7h11.6v14.7h-11.6zM871.0 260.7h10.6v14.7h-10.6zM893.0 260.7h10.8v14.7h-10.8zM936.6 260.7h11.1v14.7h-11.1zM1072.6 260.7h10.1v14.7h-10.1zM1379.3 260.7h8.8v14.7h-8.8zM1388.1 260.7h8.6v14.7h-8.6zM1463.8 260.7h8.3v14.7h-8.3zM1496.6 260.7h8.1v14.7h-8.1zM1520.8 260.7h8.1v14.7h-8.1zM1849.5 260.7h7.1v14.7h-7.1zM1904.8 260.7h6.8v14.7h-6.8zM1911.6 260.7h6.8v14.7h-6.8zM2029.8 260.7h6.3v14.7h-6.3zM2036.1 260.7h6.3v14.7h-6.3zM2155.2 260.7h6.1v14.7h-6.1zM2197.6 260.7h6.1v14.7h-6.1zM2227.6 260.7h6.1v14.7h-6.1zM2455.1 260.7h5.3v14.7h-5.3zM2476.8 260.7h5.5v14.7h-5.5zM2535.9 260.7h5.3v14.7h-5.3zM2557.1 260.7h5.3v14.7h-5.3zM2854.3 260.7h4.4v14.7h-4.4zM311.9 275.4h12.8v14.7h-12.8zM767.1 275.4h12.1v14.7h-12.1zM1151.8 275.4h9.8v14.7h-9.8zM1560.9 275.4h7.8v14.7h-7.8zM1568.7 275.4h7.8v14.7h-7.8zM1615.4 275.4h7.6v14.7h-7.6zM1735.0 275.4h7.3v14.7h-7.3zM1742.3 275.4h7.3v14.7h-7.3zM1957.7 275.4h6.8v14.7h-6.8zM1984.1 275.4h6.3v14.7h-6.3zM2309.6 275.4h5.8v14.7h-5.8zM2410.7 275.4h5.5v14.7h-5.5zM2455.1 275.4h5.3v14.7h-5.3zM2535.9 275.4h5.3v14.7h-5.3zM2541.2 275.4h5.3v14.7h-5.3zM2578.5 275.4h4.8v14.7h-4.8zM2583.3 275.4h5.4v14.7h-5.4zM2588.7 275.4h5.7v14.7h-5.7zM2761.0 275.4h5.4v14.7h-5.4zM426.6 290.0h13.1v14.7h-13.1zM790.8 290.0h11.6v14.7h-11.6zM881.6 290.0h11.4v14.7h-11.4zM1082.7 290.0h10.1v14.7h-10.1zM1273.7 290.0h9.1v14.7h-9.1zM1623.0 290.0h7.8v14.7h-7.8zM1742.3 290.0h7.3v14.7h-7.3zM1793.0 290.0h7.3v14.7h-7.3zM1945.4 290.0h6.6v14.7h-6.6zM2010.1 290.0h6.6v14.7h-6.6zM2036.1 290.0h6.3v14.7h-6.3zM2074.2 290.0h6.3v14.7h-6.3zM2124.4 290.0h6.3v14.7h-6.3zM2143.1 290.0h6.1v14.7h-6.1zM2315.4 290.0h5.8v14.7h-5.8zM2530.6 290.0h5.3v14.7h-5.3zM2535.9 290.0h5.3v14.7h-5.3zM2541.2 290.0h5.3v14.7h-5.3zM2573.0 290.0h5.5v14.7h-5.5zM2766.4 290.0h4.4v14.7h-4.4zM2819.5 290.0h4.8v14.7h-4.8zM2824.3 290.0h4.8v14.7h-4.8zM311.9 304.7h12.8v14.7h-12.8zM645.3 304.7h12.1v14.7h-12.1zM730.8 304.7h11.6v14.7h-11.6zM1227.7 304.7h9.3v14.7h-9.3zM1421.9 304.7h8.6v14.7h-8.6zM1623.0 304.7h7.8v14.7h-7.8zM1764.2 304.7h7.3v14.7h-7.3zM1932.0 304.7h6.6v14.7h-6.6zM1990.5 304.7h6.6v14.7h-6.6zM2269.0 304.7h5.8v14.7h-5.8zM2292.2 304.7h5.8v14.7h-5.8zM2355.0 304.7h5.5v14.7h-5.5zM2509.4 304.7h5.3v14.7h-5.3zM2541.2 304.7h5.3v14.7h-5.3zM2604.5 304.7h5.2v14.7h-5.2zM2716.7 304.7h4.8v14.7h-4.8zM2721.5 304.7h5.2v14.7h-5.2zM466.0 319.4h12.8v14.7h-12.8zM645.3 319.4h12.1v14.7h-12.1zM657.4 319.4h12.8v14.7h-12.8zM718.7 319.4h12.1v14.7h-12.1zM767.1 319.4h12.1v14.7h-12.1zM1072.6 319.4h10.1v14.7h-10.1zM1161.7 319.4h9.6v14.7h-9.6zM1227.7 319.4h9.3v14.7h-9.3zM1273.7 319.4h9.1v14.7h-9.1zM1405.3 319.4h8.3v14.7h-8.3zM1504.7 319.4h8.1v14.7h-8.1zM1735.0 319.4h7.3v14.7h-7.3zM1828.6 319.4h7.1v14.7h-7.1zM1842.7 319.4h6.8v14.7h-6.8zM1898.0 319.4h6.8v14.7h-6.8zM1904.8 319.4h6.8v14.7h-6.8zM1925.2 319.4h6.8v14.7h-6.8zM1945.4 319.4h6.6v14.7h-6.6zM2112.0 319.4h6.3v14.7h-6.3zM2161.2 319.4h6.1v14.7h-6.1zM2179.4 319.4h6.1v14.7h-6.1zM2185.5 319.4h6.1v14.7h-6.1zM2280.6 319.4h5.8v14.7h-5.8zM2394.1 319.4h5.5v14.7h-5.5zM2466.0 319.4h5.5v14.7h-5.5zM2509.4 319.4h5.3v14.7h-5.3zM2686.5 319.4h4.4v14.7h-4.4zM2696.6 319.4h4.8v14.7h-4.8zM2814.5 319.4h5.0v14.7h-5.0zM263.4 334.1h11.4v14.7h-11.4zM466.0 334.1h12.8v14.7h-12.8zM478.7 334.1h13.1v14.7h-13.1zM594.5 334.1h12.8v14.7h-12.8zM694.4 334.1h11.1v14.7h-11.1zM1000.7 334.1h10.3v14.7h-10.3zM1011.0 334.1h10.6v14.7h-10.6zM1112.7 334.1h9.8v14.7h-9.8zM1396.7 334.1h8.6v14.7h-8.6zM1480.4 334.1h8.1v14.7h-8.1zM1630.8 334.1h7.6v14.7h-7.6zM1727.7 334.1h7.3v14.7h-7.3zM1764.2 334.1h7.3v14.7h-7.3zM1835.6 334.1h7.1v14.7h-7.1zM1863.6 334.1h6.8v14.7h-6.8zM1964.5 334.1h6.6v14.7h-6.6zM1977.6 334.1h6.6v14.7h-6.6zM2080.5 334.1h6.3v14.7h-6.3zM2130.7 334.1h6.1v14.7h-6.1zM2197.6 334.1h6.1v14.7h-6.1zM2274.8 334.1h5.8v14.7h-5.8zM2280.6 334.1h5.8v14.7h-5.8zM2514.7 334.1h5.3v14.7h-5.3zM2706.2 334.1h5.4v14.7h-5.4zM2795.6 334.1h4.8v14.7h-4.8zM2843.8 334.1h3.2v14.7h-3.2zM607.3 348.8h12.4v14.7h-12.4zM837.0 348.8h11.1v14.7h-11.1zM958.6 348.8h10.6v14.7h-10.6zM1032.0 348.8h10.3v14.7h-10.3zM1209.1 348.8h9.3v14.7h-9.3zM1300.9 348.8h9.1v14.7h-9.1zM1362.1 348.8h8.3v14.7h-8.3zM1488.5 348.8h8.1v14.7h-8.1zM1683.5 348.8h7.3v14.7h-7.3zM1821.5 348.8h7.1v14.7h-7.1zM1849.5 348.8h7.1v14.7h-7.1zM1925.2 348.8h6.8v14.7h-6.8zM2023.2 348.8h6.6v14.7h-6.6zM2042.4 348.8h6.3v14.7h-6.3zM2055.3 348.8h6.3v14.7h-6.3zM2080.5 348.8h6.3v14.7h-6.3zM2086.8 348.8h6.3v14.7h-6.3zM2093.1 348.8h6.3v14.7h-6.3zM2197.6 348.8h6.1v14.7h-6.1zM2360.5 348.8h5.5v14.7h-5.5zM2520.0 348.8h5.3v14.7h-5.3zM2588.7 348.8h5.7v14.7h-5.7zM2696.6 348.8h4.8v14.7h-4.8zM2716.7 348.8h4.8v14.7h-4.8zM2736.2 348.8h5.4v14.7h-5.4zM2761.0 348.8h5.4v14.7h-5.4zM2843.8 348.8h3.2v14.7h-3.2zM478.7 363.4h13.1v14.7h-13.1zM914.9 363.4h10.8v14.7h-10.8zM1021.6 363.4h10.3v14.7h-10.3zM1032.0 363.4h10.3v14.7h-10.3zM1576.6 363.4h7.8v14.7h-7.8zM1600.0 363.4h7.8v14.7h-7.8zM1661.1 363.4h7.6v14.7h-7.6zM1676.0 363.4h7.6v14.7h-7.6zM1925.2 363.4h6.8v14.7h-6.8zM2055.3 363.4h6.3v14.7h-6.3zM2061.6 363.4h6.3v14.7h-6.3zM2074.2 363.4h6.3v14.7h-6.3zM2136.8 363.4h6.3v14.7h-6.3zM2161.2 363.4h6.1v14.7h-6.1zM2167.3 363.4h6.1v14.7h-6.1zM2173.4 363.4h6.1v14.7h-6.1zM2460.4 363.4h5.5v14.7h-5.5zM2493.0 363.4h5.5v14.7h-5.5zM2551.8 363.4h5.3v14.7h-5.3zM2557.1 363.4h5.3v14.7h-5.3zM2562.4 363.4h5.3v14.7h-5.3zM2578.5 363.4h4.8v14.7h-4.8zM2635.5 363.4h5.2v14.7h-5.2zM2681.3 363.4h5.2v14.7h-5.2zM2716.7 363.4h4.8v14.7h-4.8zM2751.7 363.4h4.2v14.7h-4.2zM645.3 378.1h12.1v14.7h-12.1zM802.4 378.1h11.6v14.7h-11.6zM1042.3 378.1h10.1v14.7h-10.1zM1318.8 378.1h8.2v14.7h-8.2zM1576.6 378.1h7.8v14.7h-7.8zM2067.9 378.1h6.3v14.7h-6.3zM2449.6 378.1h5.5v14.7h-5.5zM2819.5 378.1h4.8v14.7h-4.8zM374.8 392.8h13.5v14.7h-13.5zM556.1 392.8h13.1v14.7h-13.1zM694.4 392.8h11.1v14.7h-11.1zM1032.0 392.8h10.3v14.7h-10.3zM1227.7 392.8h9.3v14.7h-9.3zM1237.1 392.8h9.3v14.7h-9.3zM1668.6 392.8h7.3v14.7h-7.3zM2067.9 392.8h6.3v14.7h-6.3zM2594.4 392.8h5.2v14.7h-5.2zM252.4 407.5h10.3v14.7h-10.3zM414.1 407.5h12.4v14.7h-12.4zM439.7 407.5h13.1v14.7h-13.1zM491.9 407.5h13.1v14.7h-13.1zM505.0 407.5h12.8v14.7h-12.8zM530.6 407.5h12.8v14.7h-12.8zM619.7 407.5h12.8v14.7h-12.8zM694.4 407.5h11.1v14.7h-11.1zM825.4 407.5h11.6v14.7h-11.6zM990.4 407.5h10.3v14.7h-10.3zM1011.0 407.5h10.6v14.7h-10.6zM1653.5 407.5h7.6v14.7h-7.6zM1997.0 407.5h6.6v14.7h-6.6zM2315.4 407.5h5.8v14.7h-5.8zM2444.0 407.5h5.5v14.7h-5.5zM2625.0 407.5h5.4v14.7h-5.4zM287.0 422.2h12.4v14.7h-12.4zM311.9 422.2h12.8v14.7h-12.8zM569.3 422.2h12.8v14.7h-12.8zM657.4 422.2h12.8v14.7h-12.8zM790.8 422.2h11.6v14.7h-11.6zM814.0 422.2h11.4v14.7h-11.4zM1102.9 422.2h9.8v14.7h-9.8zM1122.6 422.2h9.8v14.7h-9.8zM1300.9 422.2h9.1v14.7h-9.1zM1344.5 422.2h8.8v14.7h-8.8zM1552.8 422.2h8.1v14.7h-8.1zM1576.6 422.2h7.8v14.7h-7.8zM1615.4 422.2h7.6v14.7h-7.6zM2016.7 422.2h6.6v14.7h-6.6zM2221.8 422.2h5.8v14.7h-5.8zM2245.5 422.2h6.1v14.7h-6.1zM2274.8 422.2h5.8v14.7h-5.8zM2298.0 422.2h5.8v14.7h-5.8zM2315.4 422.2h5.8v14.7h-5.8zM2416.3 422.2h5.5v14.7h-5.5zM2444.0 422.2h5.5v14.7h-5.5zM2530.6 422.2h5.3v14.7h-5.3zM2578.5 422.2h4.8v14.7h-4.8zM2625.0 422.2h5.4v14.7h-5.4zM2675.6 422.2h5.7v14.7h-5.7zM2785.5 422.2h5.2v14.7h-5.2zM2790.7 422.2h5.0v14.7h-5.0zM2795.6 422.2h4.8v14.7h-4.8zM287.0 436.8h12.4v14.7h-12.4zM401.0 436.8h13.1v14.7h-13.1zM439.7 436.8h13.1v14.7h-13.1zM657.4 436.8h12.8v14.7h-12.8zM705.5 436.8h13.1v14.7h-13.1zM859.4 436.8h11.6v14.7h-11.6zM1011.0 436.8h10.6v14.7h-10.6zM1102.9 436.8h9.8v14.7h-9.8zM1190.2 436.8h9.6v14.7h-9.6zM1199.7 436.8h9.3v14.7h-9.3zM1362.1 436.8h8.3v14.7h-8.3zM1388.1 436.8h8.6v14.7h-8.6zM1455.7 436.8h8.1v14.7h-8.1zM1607.8 436.8h7.6v14.7h-7.6zM1623.0 436.8h7.8v14.7h-7.8zM1668.6 436.8h7.3v14.7h-7.3zM1771.6 436.8h7.1v14.7h-7.1zM1828.6 436.8h7.1v14.7h-7.1zM1856.6 436.8h7.1v14.7h-7.1zM1870.5 436.8h7.1v14.7h-7.1zM1964.5 436.8h6.6v14.7h-6.6zM2055.3 436.8h6.3v14.7h-6.3zM2155.2 436.8h6.1v14.7h-6.1zM2215.7 436.8h6.1v14.7h-6.1zM2487.7 436.8h5.3v14.7h-5.3zM2655.5 436.8h5.2v14.7h-5.2zM2675.6 436.8h5.7v14.7h-5.7zM2681.3 436.8h5.2v14.7h-5.2zM2706.2 436.8h5.4v14.7h-5.4zM2785.5 436.8h5.2v14.7h-5.2zM362.7 451.5h12.1v14.7h-12.1zM426.6 451.5h13.1v14.7h-13.1zM632.5 451.5h12.8v14.7h-12.8zM657.4 451.5h12.8v14.7h-12.8zM767.1 451.5h12.1v14.7h-12.1zM936.6 451.5h11.1v14.7h-11.1zM1082.7 451.5h10.1v14.7h-10.1zM1092.8 451.5h10.1v14.7h-10.1zM1218.4 451.5h9.3v14.7h-9.3zM1362.1 451.5h8.3v14.7h-8.3zM1584.4 451.5h7.8v14.7h-7.8zM1698.4 451.5h7.3v14.7h-7.3zM1727.7 451.5h7.3v14.7h-7.3zM1793.0 451.5h7.3v14.7h-7.3zM1800.3 451.5h7.1v14.7h-7.1zM1821.5 451.5h7.1v14.7h-7.1zM1918.4 451.5h6.8v14.7h-6.8zM1964.5 451.5h6.6v14.7h-6.6zM2233.6 451.5h5.8v14.7h-5.8zM2338.1 451.5h5.5v14.7h-5.5zM2466.0 451.5h5.5v14.7h-5.5zM2557.1 451.5h5.3v14.7h-5.3zM2578.5 451.5h4.8v14.7h-4.8zM2660.7 451.5h5.4v14.7h-5.4zM252.4 466.2h10.3v14.7h-10.3zM299.4 466.2h12.4v14.7h-12.4zM311.9 466.2h12.8v14.7h-12.8zM337.4 466.2h12.4v14.7h-12.4zM594.5 466.2h12.8v14.7h-12.8zM914.9 466.2h10.8v14.7h-10.8zM1082.7 466.2h10.1v14.7h-10.1zM1142.2 466.2h9.6v14.7h-9.6zM1161.7 466.2h9.6v14.7h-9.6zM1209.1 466.2h9.3v14.7h-9.3zM1273.7 466.2h9.1v14.7h-9.1zM1318.8 466.2h8.2v14.7h-8.2zM1362.1 466.2h8.3v14.7h-8.3zM1645.9 466.2h7.6v14.7h-7.6zM1705.7 466.2h7.3v14.7h-7.3zM1764.2 466.2h7.3v14.7h-7.3zM1828.6 466.2h7.1v14.7h-7.1zM1842.7 466.2h6.8v14.7h-6.8zM1856.6 466.2h7.1v14.7h-7.1zM1945.4 466.2h6.6v14.7h-6.6zM1984.1 466.2h6.3v14.7h-6.3zM2061.6 466.2h6.3v14.7h-6.3zM2067.9 466.2h6.3v14.7h-6.3zM2074.2 466.2h6.3v14.7h-6.3zM2136.8 466.2h6.3v14.7h-6.3zM2410.7 466.2h5.5v14.7h-5.5zM2416.3 466.2h5.5v14.7h-5.5zM2421.8 466.2h5.5v14.7h-5.5zM2706.2 466.2h5.4v14.7h-5.4zM2761.0 466.2h5.4v14.7h-5.4zM2829.1 466.2h4.8v14.7h-4.8zM505.0 480.9h12.8v14.7h-12.8zM848.1 480.9h11.4v14.7h-11.4zM1082.7 480.9h10.1v14.7h-10.1zM1180.8 480.9h9.3v14.7h-9.3zM1344.5 480.9h8.8v14.7h-8.8zM1463.8 480.9h8.3v14.7h-8.3zM1537.0 480.9h7.8v14.7h-7.8zM1661.1 480.9h7.6v14.7h-7.6zM1800.3 480.9h7.1v14.7h-7.1zM1828.6 480.9h7.1v14.7h-7.1zM1842.7 480.9h6.8v14.7h-6.8zM2023.2 480.9h6.6v14.7h-6.6zM2209.7 480.9h6.1v14.7h-6.1zM2215.7 480.9h6.1v14.7h-6.1zM2298.0 480.9h5.8v14.7h-5.8zM2410.7 480.9h5.5v14.7h-5.5zM2551.8 480.9h5.3v14.7h-5.3zM2562.4 480.9h5.3v14.7h-5.3zM2650.8 480.9h4.8v14.7h-4.8zM2805.2 480.9h4.6v14.7h-4.6zM274.8 495.6h12.1v14.7h-12.1zM324.6 495.6h12.8v14.7h-12.8zM452.8 495.6h13.1v14.7h-13.1zM837.0 495.6h11.1v14.7h-11.1zM914.9 495.6h10.8v14.7h-10.8zM1405.3 495.6h8.3v14.7h-8.3zM1430.5 495.6h8.6v14.7h-8.6zM1584.4 495.6h7.8v14.7h-7.8zM1814.5 495.6h7.1v14.7h-7.1zM1870.5 495.6h7.1v14.7h-7.1zM2280.6 495.6h5.8v14.7h-5.8zM2309.6 495.6h5.8v14.7h-5.8zM2366.1 495.6h5.8v14.7h-5.8zM2377.4 495.6h5.5v14.7h-5.5zM2383.0 495.6h5.5v14.7h-5.5zM2410.7 495.6h5.5v14.7h-5.5zM2416.3 495.6h5.5v14.7h-5.5zM2503.8 495.6h5.5v14.7h-5.5zM2514.7 495.6h5.3v14.7h-5.3zM2686.5 495.6h4.4v14.7h-4.4zM2690.9 495.6h5.7v14.7h-5.7zM2814.5 495.6h5.0v14.7h-5.0zM299.4 510.2h12.4v14.7h-12.4zM324.6 510.2h12.8v14.7h-12.8zM439.7 510.2h13.1v14.7h-13.1zM607.3 510.2h12.4v14.7h-12.4zM859.4 510.2h11.6v14.7h-11.6zM881.6 510.2h11.4v14.7h-11.4zM914.9 510.2h10.8v14.7h-10.8zM958.6 510.2h10.6v14.7h-10.6zM1052.4 510.2h10.1v14.7h-10.1zM1255.8 510.2h8.8v14.7h-8.8zM1310.0 510.2h8.8v14.7h-8.8zM1344.5 510.2h8.8v14.7h-8.8zM1379.3 510.2h8.8v14.7h-8.8zM1638.4 510.2h7.6v14.7h-7.6zM1698.4 510.2h7.3v14.7h-7.3zM1735.0 510.2h7.3v14.7h-7.3zM1856.6 510.2h7.1v14.7h-7.1zM1932.0 510.2h6.6v14.7h-6.6zM1945.4 510.2h6.6v14.7h-6.6zM2048.7 510.2h6.6v14.7h-6.6zM2067.9 510.2h6.3v14.7h-6.3zM2074.2 510.2h6.3v14.7h-6.3zM2099.4 510.2h6.3v14.7h-6.3zM2118.4 510.2h6.1v14.7h-6.1zM2185.5 510.2h6.1v14.7h-6.1zM2263.2 510.2h5.8v14.7h-5.8zM2309.6 510.2h5.8v14.7h-5.8zM2449.6 510.2h5.5v14.7h-5.5zM2660.7 510.2h5.4v14.7h-5.4zM2736.2 510.2h5.4v14.7h-5.4zM311.9 524.9h12.8v14.7h-12.8zM491.9 524.9h13.1v14.7h-13.1zM742.4 524.9h12.4v14.7h-12.4zM790.8 524.9h11.6v14.7h-11.6zM893.0 524.9h10.8v14.7h-10.8zM1112.7 524.9h9.8v14.7h-9.8zM1122.6 524.9h9.8v14.7h-9.8zM1237.1 524.9h9.3v14.7h-9.3zM1756.9 524.9h7.3v14.7h-7.3zM1764.2 524.9h7.3v14.7h-7.3zM2191.5 524.9h6.1v14.7h-6.1zM2233.6 524.9h5.8v14.7h-5.8zM2245.5 524.9h6.1v14.7h-6.1zM2498.5 524.9h5.3v14.7h-5.3zM2583.3 524.9h5.4v14.7h-5.4zM2736.2 524.9h5.4v14.7h-5.4z"/>
<path fill="#365c8c" d="M452.8 246.0h13.1v14.7h-13.1zM632.5 246.0h12.8v14.7h-12.8zM645.3 246.0h12.1v14.7h-12.1zM657.4 246.0h12.8v14.7h-12.8zM694.4 246.0h11.1v14.7h-11.1zM705.5 246.0h13.1v14.7h-13.1zM881.6 246.0h11.4v14.7h-11.4zM969.2 246.0h10.6v14.7h-10.6zM1021.6 246.0h10.3v14.7h-10.3zM1180.8 246.0h9.3v14.7h-9.3zM1273.7 246.0h9.1v14.7h-9.1zM1318.8 246.0h8.2v14.7h-8.2zM1362.1 246.0h8.3v14.7h-8.3zM1447.4 246.0h8.3v14.7h-8.3zM1568.7 246.0h7.8v14.7h-7.8zM1600.0 246.0h7.8v14.7h-7.8zM1705.7 246.0h7.3v14.7h-7.3zM1904.8 246.0h6.8v14.7h-6.8zM1957.7 246.0h6.8v14.7h-6.8zM1984.1 246.0h6.3v14.7h-6.3zM2067.9 246.0h6.3v14.7h-6.3zM2143.1 246.0h6.1v14.7h-6.1zM2149.1 246.0h6.1v14.7h-6.1zM2197.6 246.0h6.1v14.7h-6.1zM2269.0 246.0h5.8v14.7h-5.8zM2298.0 246.0h5.8v14.7h-5.8zM2309.6 246.0h5.8v14.7h-5.8zM2326.7 246.0h5.8v14.7h-5.8zM2360.5 246.0h5.5v14.7h-5.5zM2416.3 246.0h5.5v14.7h-5.5zM2444.0 246.0h5.5v14.7h-5.5zM2503.8 246.0h5.5v14.7h-5.5zM2578.5 246.0h4.8v14.7h-4.8zM2625.0 246.0h5.4v14.7h-5.4zM2640.6 246.0h4.4v14.7h-4.4zM2645.0 246.0h5.7v14.7h-5.7zM2681.3 246.0h5.2v14.7h-5.2zM2701.4 246.0h4.8v14.7h-4.8zM2761.0 246.0h5.4v14.7h-5.4zM2833.8 246.0h2.2v14.7h-2.2zM337.4 260.7h12.4v14.7h-12.4zM582.0 260.7h12.4v14.7h-12.4zM742.4 260.7h12.4v14.7h-12.4zM903.8 260.7h11.1v14.7h-11.1zM947.7 260.7h10.8v14.7h-10.8zM969.2 260.7h10.6v14.7h-10.6zM1000.7 260.7h10.3v14.7h-10.3zM1102.9 260.7h9.8v14.7h-9.8zM1142.2 260.7h9.6v14.7h-9.6zM1335.6 260.7h8.8v14.7h-8.8zM1512.7 260.7h8.1v14.7h-8.1zM1600.0 260.7h7.8v14.7h-7.8zM1607.8 260.7h7.6v14.7h-7.6zM1615.4 260.7h7.6v14.7h-7.6zM1645.9 260.7h7.6v14.7h-7.6zM1735.0 260.7h7.3v14.7h-7.3zM1785.9 260.7h7.1v14.7h-7.1zM1807.4 260.7h7.1v14.7h-7.1zM1828.6 260.7h7.1v14.7h-7.1zM1835.6 260.7h7.1v14.7h-7.1zM1891.1 260.7h6.8v14.7h-6.8zM1945.4 260.7h6.6v14.7h-6.6zM2061.6 260.7h6.3v14.7h-6.3zM2136.8 260.7h6.3v14.7h-6.3zM2143.1 260.7h6.1v14.7h-6.1zM2149.1 260.7h6.1v14.7h-6.1zM2203.6 260.7h6.1v14.7h-6.1zM2298.0 260.7h5.8v14.7h-5.8zM2315.4 260.7h5.8v14.7h-5.8zM2383.0 260.7h5.5v14.7h-5.5zM2405.2 260.7h5.5v14.7h-5.5zM2421.8 260.7h5.5v14.7h-5.5zM2482.4 260.7h5.3v14.7h-5.3zM2625.0 260.7h5.4v14.7h-5.4zM2721.5 260.7h5.2v14.7h-5.2zM2805.2 260.7h4.6v14.7h-4.6zM2814.5 260.7h5.0v14.7h-5.0zM517.8 275.4h12.8v14.7h-12.8zM718.7 275.4h12.1v14.7h-12.1zM754.7 275.4h12.4v14.7h-12.4zM790.8 275.4h11.6v14.7h-11.6zM802.4 275.4h11.6v14.7h-11.6zM825.4 275.4h11.6v14.7h-11.6zM903.8 275.4h11.1v14.7h-11.1zM1052.4 275.4h10.1v14.7h-10.1zM1396.7 275.4h8.6v14.7h-8.6zM1496.6 275.4h8.1v14.7h-8.1zM1504.7 275.4h8.1v14.7h-8.1zM1512.7 275.4h8.1v14.7h-8.1zM1552.8 275.4h8.1v14.7h-8.1zM1727.7 275.4h7.3v14.7h-7.3zM1771.6 275.4h7.1v14.7h-7.1zM1842.7 275.4h6.8v14.7h-6.8zM1870.5 275.4h7.1v14.7h-7.1zM1904.8 275.4h6.8v14.7h-6.8zM1945.4 275.4h6.6v14.7h-6.6zM1997.0 275.4h6.6v14.7h-6.6zM2003.6 275.4h6.6v14.7h-6.6zM2010.1 275.4h6.6v14.7h-6.6zM2136.8 275.4h6.3v14.7h-6.3zM2143.1 275.4h6.1v14.7h-6.1zM2179.4 275.4h6.1v14.7h-6.1zM2185.5 275.4h6.1v14.7h-6.1zM2197.6 275.4h6.1v14.7h-6.1zM2221.8 275.4h5.8v14.7h-5.8zM2227.6 275.4h6.1v14.7h-6.1zM2371.9 275.4h5.5v14.7h-5.5zM2377.4 275.4h5.5v14.7h-5.5zM2487.7 275.4h5.3v14.7h-5.3zM2509.4 275.4h5.3v14.7h-5.3zM2520.0 275.4h5.3v14.7h-5.3zM2567.6 275.4h5.4v14.7h-5.4zM2594.4 275.4h5.2v14.7h-5.2zM2681.3 275.4h5.2v14.7h-5.2zM2795.6 275.4h4.8v14.7h-4.8zM2800.4 275.4h4.8v14.7h-4.8zM2814.5 275.4h5.0v14.7h-5.0zM324.6 290.0h12.8v14.7h-12.8zM452.8 290.0h13.1v14.7h-13.1zM505.0 290.0h12.8v14.7h-12.8zM730.8 290.0h11.6v14.7h-11.6zM802.4 290.0h11.6v14.7h-11.6zM871.0 290.0h10.6v14.7h-10.6zM1180.8 290.0h9.3v14.7h-9.3zM1209.1 290.0h9.3v14.7h-9.3zM1264.6 290.0h9.1v14.7h-9.1zM1370.5 290.0h8.8v14.7h-8.8zM1430.5 290.0h8.6v14.7h-8.6zM1439.1 290.0h8.3v14.7h-8.3zM1480.4 290.0h8.1v14.7h-8.1zM1512.7 290.0h8.1v14.7h-8.1zM1576.6 290.0h7.8v14.7h-7.8zM1645.9 290.0h7.6v14.7h-7.6zM1877.5 290.0h6.8v14.7h-6.8zM1898.0 290.0h6.8v14.7h-6.8zM2080.5 290.0h6.3v14.7h-6.3zM2173.4 290.0h6.1v14.7h-6.1zM2197.6 290.0h6.1v14.7h-6.1zM2209.7 290.0h6.1v14.7h-6.1zM2227.6 290.0h6.1v14.7h-6.1zM2233.6 290.0h5.8v14.7h-5.8zM2239.4 290.0h6.1v14.7h-6.1zM2263.2 290.0h5.8v14.7h-5.8zM2309.6 290.0h5.8v14.7h-5.8zM2416.3 290.0h5.5v14.7h-5.5zM2421.8 290.0h5.5v14.7h-5.5zM2427.4 290.0h5.5v14.7h-5.5zM2444.0 290.0h5.5v14.7h-5.5zM2449.6 290.0h5.5v14.7h-5.5zM2487.7 290.0h5.3v14.7h-5.3zM2498.5 290.0h5.3v14.7h-5.3zM2546.5 290.0h5.3v14.7h-5.3zM2557.1 290.0h5.3v14.7h-5.3zM2578.5 290.0h4.8v14.7h-4.8zM2594.4 290.0h5.2v14.7h-5.2zM2625.0 290.0h5.4v14.7h-5.4zM2736.2 290.0h5.4v14.7h-5.4zM2741.5 290.0h5.2v14.7h-5.2zM2755.9 290.0h5.2v14.7h-5.2zM2843.8 290.0h3.2v14.7h-3.2zM517.8 304.7h12.8v14.7h-12.8zM607.3 304.7h12.4v14.7h-12.4zM694.4 304.7h11.1v14.7h-11.1zM742.4 304.7h12.4v14.7h-12.4zM790.8 304.7h11.6v14.7h-11.6zM1062.5 304.7h10.1v14.7h-10.1zM1161.7 304.7h9.6v14.7h-9.6zM1264.6 304.7h9.1v14.7h-9.1zM1327.1 304.7h8.6v14.7h-8.6zM1344.5 304.7h8.8v14.7h-8.8zM1396.7 304.7h8.6v14.7h-8.6zM1430.5 304.7h8.6v14.7h-8.6zM1439.1 304.7h8.3v14.7h-8.3zM1512.7 304.7h8.1v14.7h-8.1zM1537.0 304.7h7.8v14.7h-7.8zM1576.6 304.7h7.8v14.7h-7.8zM1584.4 304.7h7.8v14.7h-7.8zM1653.5 304.7h7.6v14.7h-7.6zM1676.0 304.7h7.6v14.7h-7.6zM1690.8 304.7h7.6v14.7h-7.6zM1735.0 304.7h7.3v14.7h-7.3zM1749.6 304.7h7.3v14.7h-7.3zM1756.9 304.7h7.3v14.7h-7.3zM1870.5 304.7h7.1v14.7h-7.1zM1898.0 304.7h6.8v14.7h-6.8zM1951.9 304.7h5.7v14.7h-5.7zM1964.5 304.7h6.6v14.7h-6.6zM2036.1 304.7h6.3v14.7h-6.3zM2185.5 304.7h6.1v14.7h-6.1zM2197.6 304.7h6.1v14.7h-6.1zM2215.7 304.7h6.1v14.7h-6.1zM2343.6 304.7h5.5v14.7h-5.5zM2349.2 304.7h5.8v14.7h-5.8zM2432.9 304.7h5.5v14.7h-5.5zM2466.0 304.7h5.5v14.7h-5.5zM2503.8 304.7h5.5v14.7h-5.5zM2530.6 304.7h5.3v14.7h-5.3zM2599.6 304.7h5.0v14.7h-5.0zM2609.7 304.7h4.8v14.7h-4.8zM2625.0 304.7h5.4v14.7h-5.4zM2690.9 304.7h5.7v14.7h-5.7zM2736.2 304.7h5.4v14.7h-5.4zM2741.5 304.7h5.2v14.7h-5.2zM2761.0 304.7h5.4v14.7h-5.4zM2775.6 304.7h5.2v14.7h-5.2zM2780.7 304.7h4.8v14.7h-4.8zM2833.8 304.7h4.8v14.7h-4.8zM426.6 319.4h13.1v14.7h-13.1zM543.4 319.4h12.8v14.7h-12.8zM607.3 319.4h12.4v14.7h-12.4zM619.7 319.4h12.8v14.7h-12.8zM632.5 319.4h12.8v14.7h-12.8zM670.2 319.4h11.8v14.7h-11.8zM705.5 319.4h13.1v14.7h-13.1zM802.4 319.4h11.6v14.7h-11.6zM936.6 319.4h11.1v14.7h-11.1zM990.4 319.4h10.3v14.7h-10.3zM1171.2 319.4h9.6v14.7h-9.6zM1255.8 319.4h8.8v14.7h-8.8zM1488.5 319.4h8.1v14.7h-8.1zM1568.7 319.4h7.8v14.7h-7.8zM1630.8 319.4h7.6v14.7h-7.6zM1638.4 319.4h7.6v14.7h-7.6zM1668.6 319.4h7.3v14.7h-7.3zM1690.8 319.4h7.6v14.7h-7.6zM1756.9 319.4h7.3v14.7h-7.3zM1764.2 319.4h7.3v14.7h-7.3zM1932.0 319.4h6.6v14.7h-6.6zM1938.6 319.4h6.8v14.7h-6.8zM1951.9 319.4h5.7v14.7h-5.7zM1957.7 319.4h6.8v14.7h-6.8zM2042.4 319.4h6.3v14.7h-6.3zM2048.7 319.4h6.6v14.7h-6.6zM2274.8 319.4h5.8v14.7h-5.8zM2286.4 319.4h5.8v14.7h-5.8zM2338.1 319.4h5.5v14.7h-5.5zM2343.6 319.4h5.5v14.7h-5.5zM2388.5 319.4h5.5v14.7h-5.5zM2399.6 319.4h5.5v14.7h-5.5zM2476.8 319.4h5.5v14.7h-5.5zM2482.4 319.4h5.3v14.7h-5.3zM2594.4 319.4h5.2v14.7h-5.2zM2640.6 319.4h4.4v14.7h-4.4zM2660.7 319.4h5.4v14.7h-5.4zM2701.4 319.4h4.8v14.7h-4.8zM2716.7 319.4h4.8v14.7h-4.8zM2721.5 319.4h5.2v14.7h-5.2zM2785.5 319.4h5.2v14.7h-5.2zM2819.5 319.4h4.8v14.7h-4.8zM2833.8 319.4h4.8v14.7h-4.8zM349.9 334.1h12.8v14.7h-12.8zM401.0 334.1h13.1v14.7h-13.1zM582.0 334.1h12.4v14.7h-12.4zM670.2 334.1h11.8v14.7h-11.8zM767.1 334.1h12.1v14.7h-12.1zM914.9 334.1h10.8v14.7h-10.8zM979.8 334.1h10.6v14.7h-10.6zM1209.1 334.1h9.3v14.7h-9.3zM1237.1 334.1h9.3v14.7h-9.3zM1310.0 334.1h8.8v14.7h-8.8zM1318.8 334.1h8.2v14.7h-8.2zM1353.3 334.1h8.8v14.7h-8.8zM1379.3 334.1h8.8v14.7h-8.8zM1552.8 334.1h8.1v14.7h-8.1zM1560.9 334.1h7.8v14.7h-7.8zM1584.4 334.1h7.8v14.7h-7.8zM1638.4 334.1h7.6v14.7h-7.6zM1676.0 334.1h7.6v14.7h-7.6zM1720.4 334.1h7.3v14.7h-7.3zM1856.6 334.1h7.1v14.7h-7.1zM1918.4 334.1h6.8v14.7h-6.8zM2143.1 334.1h6.1v14.7h-6.1zM2173.4 334.1h6.1v14.7h-6.1zM2269.0 334.1h5.8v14.7h-5.8zM2360.5 334.1h5.5v14.7h-5.5zM2371.9 334.1h5.5v14.7h-5.5zM2377.4 334.1h5.5v14.7h-5.5zM2399.6 334.1h5.5v14.7h-5.5zM2466.0 334.1h5.5v14.7h-5.5zM2471.5 334.1h5.3v14.7h-5.3zM2583.3 334.1h5.4v14.7h-5.4zM2588.7 334.1h5.7v14.7h-5.7zM2716.7 334.1h4.8v14.7h-4.8zM2736.2 334.1h5.4v14.7h-5.4zM2833.8 334.1h4.8v14.7h-4.8zM324.6 348.8h12.8v14.7h-12.8zM439.7 348.8h13.1v14.7h-13.1zM452.8 348.8h13.1v14.7h-13.1zM478.7 348.8h13.1v14.7h-13.1zM543.4 348.8h12.8v14.7h-12.8zM632.5 348.8h12.8v14.7h-12.8zM645.3 348.8h12.1v14.7h-12.1zM657.4 348.8h12.8v14.7h-12.8zM670.2 348.8h11.8v14.7h-11.8zM694.4 348.8h11.1v14.7h-11.1zM718.7 348.8h12.1v14.7h-12.1zM767.1 348.8h12.1v14.7h-12.1zM825.4 348.8h11.6v14.7h-11.6zM979.8 348.8h10.6v14.7h-10.6zM1082.7 348.8h10.1v14.7h-10.1zM1171.2 348.8h9.6v14.7h-9.6zM1291.8 348.8h9.1v14.7h-9.1zM1310.0 348.8h8.8v14.7h-8.8zM1388.1 348.8h8.6v14.7h-8.6zM1496.6 348.8h8.1v14.7h-8.1zM1512.7 348.8h8.1v14.7h-8.1zM1661.1 348.8h7.6v14.7h-7.6zM1800.3 348.8h7.1v14.7h-7.1zM1814.5 348.8h7.1v14.7h-7.1zM1964.5 348.8h6.6v14.7h-6.6zM1990.5 348.8h6.6v14.7h-6.6zM2048.7 348.8h6.6v14.7h-6.6zM2061.6 348.8h6.3v14.7h-6.3zM2124.4 348.8h6.3v14.7h-6.3zM2191.5 348.8h6.1v14.7h-6.1zM2366.1 348.8h5.8v14.7h-5.8zM2449.6 348.8h5.5v14.7h-5.5zM2557.1 348.8h5.3v14.7h-5.3zM2635.5 348.8h5.2v14.7h-5.2zM2640.6 348.8h4.4v14.7h-4.4zM2666.1 348.8h5.7v14.7h-5.7zM2681.3 348.8h5.2v14.7h-5.2zM2755.9 348.8h5.2v14.7h-5.2zM2766.4 348.8h4.4v14.7h-4.4zM2770.8 348.8h4.8v14.7h-4.8zM2775.6 348.8h5.2v14.7h-5.2zM2780.7 348.8h4.8v14.7h-4.8zM311.9 363.4h12.8v14.7h-12.8zM452.8 363.4h13.1v14.7h-13.1zM466.0 363.4h12.8v14.7h-12.8zM530.6 363.4h12.8v14.7h-12.8zM779.2 363.4h11.6v14.7h-11.6zM1052.4 363.4h10.1v14.7h-10.1zM1102.9 363.4h9.8v14.7h-9.8zM1209.1 363.4h9.3v14.7h-9.3zM1362.1 363.4h8.3v14.7h-8.3zM1615.4 363.4h7.6v14.7h-7.6zM1932.0 363.4h6.6v14.7h-6.6zM1964.5 363.4h6.6v14.7h-6.6zM2042.4 363.4h6.3v14.7h-6.3zM2048.7 363.4h6.6v14.7h-6.6zM2343.6 363.4h5.5v14.7h-5.5zM2349.2 363.4h5.8v14.7h-5.8zM2466.0 363.4h5.5v14.7h-5.5zM2546.5 363.4h5.3v14.7h-5.3zM2583.3 363.4h5.4v14.7h-5.4zM2594.4 363.4h5.2v14.7h-5.2zM2609.7 363.4h4.8v14.7h-4.8zM2619.6 363.4h5.4v14.7h-5.4zM2746.7 363.4h5.0v14.7h-5.0zM2766.4 363.4h4.4v14.7h-4.4zM2770.8 363.4h4.8v14.7h-4.8zM2805.2 363.4h4.6v14.7h-4.6zM2838.6 363.4h5.2v14.7h-5.2zM311.9 378.1h12.8v14.7h-12.8zM362.7 378.1h12.1v14.7h-12.1zM569.3 378.1h12.8v14.7h-12.8zM619.7 378.1h12.8v14.7h-12.8zM825.4 378.1h11.6v14.7h-11.6zM1062.5 378.1h10.1v14.7h-10.1zM1092.8 378.1h10.1v14.7h-10.1zM1246.4 378.1h9.3v14.7h-9.3zM1362.1 378.1h8.3v14.7h-8.3zM1537.0 378.1h7.8v14.7h-7.8zM1683.5 378.1h7.3v14.7h-7.3zM1720.4 378.1h7.3v14.7h-7.3zM1807.4 378.1h7.1v14.7h-7.1zM1964.5 378.1h6.6v14.7h-6.6zM2003.6 378.1h6.6v14.7h-6.6zM2173.4 378.1h6.1v14.7h-6.1zM2179.4 378.1h6.1v14.7h-6.1zM2355.0 378.1h5.5v14.7h-5.5zM2360.5 378.1h5.5v14.7h-5.5zM2455.1 378.1h5.3v14.7h-5.3zM2493.0 378.1h5.5v14.7h-5.5zM2588.7 378.1h5.7v14.7h-5.7zM2666.1 378.1h5.7v14.7h-5.7zM2681.3 378.1h5.2v14.7h-5.2zM2686.5 378.1h4.4v14.7h-4.4zM2741.5 378.1h5.2v14.7h-5.2zM2746.7 378.1h5.0v14.7h-5.0zM2805.2 378.1h4.6v14.7h-4.6zM2829.1 378.1h4.8v14.7h-4.8zM2833.8 378.1h4.8v14.7h-4.8zM311.9 392.8h12.8v14.7h-12.8zM414.1 392.8h12.4v14.7h-12.4zM491.9 392.8h13.1v14.7h-13.1zM947.7 392.8h10.8v14.7h-10.8zM1496.6 392.8h8.1v14.7h-8.1zM1584.4 392.8h7.8v14.7h-7.8zM1607.8 392.8h7.6v14.7h-7.6zM1645.9 392.8h7.6v14.7h-7.6zM1653.5 392.8h7.6v14.7h-7.6zM1683.5 392.8h7.3v14.7h-7.3zM1925.2 392.8h6.8v14.7h-6.8zM2251.6 392.8h5.8v14.7h-5.8zM2360.5 392.8h5.5v14.7h-5.5zM2366.1 392.8h5.8v14.7h-5.8zM2557.1 392.8h5.3v14.7h-5.3zM2746.7 392.8h5.0v14.7h-5.0zM2833.8 392.8h4.8v14.7h-4.8zM274.8 407.5h12.1v14.7h-12.1zM324.6 407.5h12.8v14.7h-12.8zM543.4 407.5h12.8v14.7h-12.8zM670.2 407.5h11.8v14.7h-11.8zM730.8 407.5h11.6v14.7h-11.6zM790.8 407.5h11.6v14.7h-11.6zM1021.6 407.5h10.3v14.7h-10.3zM1032.0 407.5h10.3v14.7h-10.3zM1072.6 407.5h10.1v14.7h-10.1zM1161.7 407.5h9.6v14.7h-9.6zM1645.9 407.5h7.6v14.7h-7.6zM1828.6 407.5h7.1v14.7h-7.1zM1932.0 407.5h6.6v14.7h-6.6zM2016.7 407.5h6.6v14.7h-6.6zM2086.8 407.5h6.3v14.7h-6.3zM2130.7 407.5h6.1v14.7h-6.1zM2155.2 407.5h6.1v14.7h-6.1zM2251.6 407.5h5.8v14.7h-5.8zM2263.2 407.5h5.8v14.7h-5.8zM2269.0 407.5h5.8v14.7h-5.8zM2274.8 407.5h5.8v14.7h-5.8zM2298.0 407.5h5.8v14.7h-5.8zM2309.6 407.5h5.8v14.7h-5.8zM2503.8 407.5h5.5v14.7h-5.5zM2509.4 407.5h5.3v14.7h-5.3zM2557.1 407.5h5.3v14.7h-5.3zM2562.4 407.5h5.3v14.7h-5.3zM2645.0 407.5h5.7v14.7h-5.7zM2711.5 407.5h5.2v14.7h-5.2zM2761.0 407.5h5.4v14.7h-5.4zM2785.5 407.5h5.2v14.7h-5.2zM2790.7 407.5h5.0v14.7h-5.0zM2805.2 407.5h4.6v14.7h-4.6zM452.8 422.2h13.1v14.7h-13.1zM466.0 422.2h12.8v14.7h-12.8zM505.0 422.2h12.8v14.7h-12.8zM517.8 422.2h12.8v14.7h-12.8zM530.6 422.2h12.8v14.7h-12.8zM619.7 422.2h12.8v14.7h-12.8zM802.4 422.2h11.6v14.7h-11.6zM825.4 422.2h11.6v14.7h-11.6zM871.0 422.2h10.6v14.7h-10.6zM893.0 422.2h10.8v14.7h-10.8zM958.6 422.2h10.6v14.7h-10.6zM1161.7 422.2h9.6v14.7h-9.6zM1180.8 422.2h9.3v14.7h-9.3zM1199.7 422.2h9.3v14.7h-9.3zM1227.7 422.2h9.3v14.7h-9.3zM1396.7 422.2h8.6v14.7h-8.6zM1472.1 422.2h8.3v14.7h-8.3zM1607.8 422.2h7.6v14.7h-7.6zM1653.5 422.2h7.6v14.7h-7.6zM1661.1 422.2h7.6v14.7h-7.6zM1668.6 422.2h7.3v14.7h-7.3zM1835.6 422.2h7.1v14.7h-7.1zM1877.5 422.2h6.8v14.7h-6.8zM1957.7 422.2h6.8v14.7h-6.8zM1997.0 422.2h6.6v14.7h-6.6zM2010.1 422.2h6.6v14.7h-6.6zM2042.4 422.2h6.3v14.7h-6.3zM2048.7 422.2h6.6v14.7h-6.6zM2215.7 422.2h6.1v14.7h-6.1zM2233.6 422.2h5.8v14.7h-5.8zM2263.2 422.2h5.8v14.7h-5.8zM2309.6 422.2h5.8v14.7h-5.8zM2405.2 422.2h5.5v14.7h-5.5zM2498.5 422.2h5.3v14.7h-5.3zM2509.4 422.2h5.3v14.7h-5.3zM2573.0 422.2h5.5v14.7h-5.5zM2706.2 422.2h5.4v14.7h-5.4zM2805.2 422.2h4.6v14.7h-4.6zM274.8 436.8h12.1v14.7h-12.1zM299.4 436.8h12.4v14.7h-12.4zM311.9 436.8h12.8v14.7h-12.8zM349.9 436.8h12.8v14.7h-12.8zM362.7 436.8h12.1v14.7h-12.1zM426.6 436.8h13.1v14.7h-13.1zM505.0 436.8h12.8v14.7h-12.8zM517.8 436.8h12.8v14.7h-12.8zM718.7 436.8h12.1v14.7h-12.1zM767.1 436.8h12.1v14.7h-12.1zM848.1 436.8h11.4v14.7h-11.4zM871.0 436.8h10.6v14.7h-10.6zM936.6 436.8h11.1v14.7h-11.1zM958.6 436.8h10.6v14.7h-10.6zM979.8 436.8h10.6v14.7h-10.6zM1000.7 436.8h10.3v14.7h-10.3zM1112.7 436.8h9.8v14.7h-9.8zM1122.6 436.8h9.8v14.7h-9.8zM1132.4 436.8h9.8v14.7h-9.8zM1151.8 436.8h9.8v14.7h-9.8zM1218.4 436.8h9.3v14.7h-9.3zM1353.3 436.8h8.8v14.7h-8.8zM1405.3 436.8h8.3v14.7h-8.3zM1472.1 436.8h8.3v14.7h-8.3zM1512.7 436.8h8.1v14.7h-8.1zM1576.6 436.8h7.8v14.7h-7.8zM1764.2 436.8h7.3v14.7h-7.3zM1835.6 436.8h7.1v14.7h-7.1zM1863.6 436.8h6.8v14.7h-6.8zM1918.4 436.8h6.8v14.7h-6.8zM1925.2 436.8h6.8v14.7h-6.8zM2118.4 436.8h6.1v14.7h-6.1zM2185.5 436.8h6.1v14.7h-6.1zM2221.8 436.8h5.8v14.7h-5.8zM2239.4 436.8h6.1v14.7h-6.1zM2245.5 436.8h6.1v14.7h-6.1zM2251.6 436.8h5.8v14.7h-5.8zM2257.4 436.8h5.8v14.7h-5.8zM2274.8 436.8h5.8v14.7h-5.8zM2298.0 436.8h5.8v14.7h-5.8zM2309.6 436.8h5.8v14.7h-5.8zM2326.7 436.8h5.8v14.7h-5.8zM2332.5 436.8h5.5v14.7h-5.5zM2338.1 436.8h5.5v14.7h-5.5zM2360.5 436.8h5.5v14.7h-5.5zM2366.1 436.8h5.8v14.7h-5.8zM2383.0 436.8h5.5v14.7h-5.5zM2493.0 436.8h5.5v14.7h-5.5zM2509.4 436.8h5.3v14.7h-5.3zM2583.3 436.8h5.4v14.7h-5.4zM2671.8 436.8h3.8v14.7h-3.8zM2686.5 436.8h4.4v14.7h-4.4zM2711.5 436.8h5.2v14.7h-5.2zM2716.7 436.8h4.8v14.7h-4.8zM2736.2 436.8h5.4v14.7h-5.4zM2780.7 436.8h4.8v14.7h-4.8zM299.4 451.5h12.4v14.7h-12.4zM645.3 451.5h12.1v14.7h-12.1zM837.0 451.5h11.1v14.7h-11.1zM903.8 451.5h11.1v14.7h-11.1zM958.6 451.5h10.6v14.7h-10.6zM1052.4 451.5h10.1v14.7h-10.1zM1151.8 451.5h9.8v14.7h-9.8zM1227.7 451.5h9.3v14.7h-9.3zM1353.3 451.5h8.8v14.7h-8.8zM1396.7 451.5h8.6v14.7h-8.6zM1576.6 451.5h7.8v14.7h-7.8zM1661.1 451.5h7.6v14.7h-7.6zM1735.0 451.5h7.3v14.7h-7.3zM1807.4 451.5h7.1v14.7h-7.1zM1835.6 451.5h7.1v14.7h-7.1zM1856.6 451.5h7.1v14.7h-7.1zM2016.7 451.5h6.6v14.7h-6.6zM2029.8 451.5h6.3v14.7h-6.3zM2036.1 451.5h6.3v14.7h-6.3zM2042.4 451.5h6.3v14.7h-6.3zM2055.3 451.5h6.3v14.7h-6.3zM2067.9 451.5h6.3v14.7h-6.3zM2118.4 451.5h6.1v14.7h-6.1zM2130.7 451.5h6.1v14.7h-6.1zM2136.8 451.5h6.3v14.7h-6.3zM2227.6 451.5h6.1v14.7h-6.1zM2239.4 451.5h6.1v14.7h-6.1zM2298.0 451.5h5.8v14.7h-5.8zM2309.6 451.5h5.8v14.7h-5.8zM2388.5 451.5h5.5v14.7h-5.5zM2416.3 451.5h5.5v14.7h-5.5zM2460.4 451.5h5.5v14.7h-5.5zM2493.0 451.5h5.5v14.7h-5.5zM2583.3 451.5h5.4v14.7h-5.4zM2599.6 451.5h5.0v14.7h-5.0zM2604.5 451.5h5.2v14.7h-5.2zM2655.5 451.5h5.2v14.7h-5.2zM2721.5 451.5h5.2v14.7h-5.2zM2731.4 451.5h4.8v14.7h-4.8zM2736.2 451.5h5.4v14.7h-5.4zM2785.5 451.5h5.2v14.7h-5.2zM2829.1 451.5h4.8v14.7h-4.8zM362.7 466.2h12.1v14.7h-12.1zM466.0 466.2h12.8v14.7h-12.8zM569.3 466.2h12.8v14.7h-12.8zM582.0 466.2h12.4v14.7h-12.4zM657.4 466.2h12.8v14.7h-12.8zM837.0 466.2h11.1v14.7h-11.1zM925.8 466.2h10.8v14.7h-10.8zM1112.7 466.2h9.8v14.7h-9.8zM1171.2 466.2h9.6v14.7h-9.6zM1180.8 466.2h9.3v14.7h-9.3zM1255.8 466.2h8.8v14.7h-8.8zM1300.9 466.2h9.1v14.7h-9.1zM1353.3 466.2h8.8v14.7h-8.8zM1690.8 466.2h7.6v14.7h-7.6zM1756.9 466.2h7.3v14.7h-7.3zM1771.6 466.2h7.1v14.7h-7.1zM1918.4 466.2h6.8v14.7h-6.8zM1938.6 466.2h6.8v14.7h-6.8zM1957.7 466.2h6.8v14.7h-6.8zM2003.6 466.2h6.6v14.7h-6.6zM2130.7 466.2h6.1v14.7h-6.1zM2221.8 466.2h5.8v14.7h-5.8zM2326.7 466.2h5.8v14.7h-5.8zM2332.5 466.2h5.5v14.7h-5.5zM2360.5 466.2h5.5v14.7h-5.5zM2405.2 466.2h5.5v14.7h-5.5zM2520.0 466.2h5.3v14.7h-5.3zM2525.3 466.2h5.3v14.7h-5.3zM2541.2 466.2h5.3v14.7h-5.3zM2557.1 466.2h5.3v14.7h-5.3zM2567.6 466.2h5.4v14.7h-5.4zM2716.7 466.2h4.8v14.7h-4.8zM2843.8 466.2h4.8v14.7h-4.8zM569.3 480.9h12.8v14.7h-12.8zM632.5 480.9h12.8v14.7h-12.8zM694.4 480.9h11.1v14.7h-11.1zM767.1 480.9h12.1v14.7h-12.1zM881.6 480.9h11.4v14.7h-11.4zM1102.9 480.9h9.8v14.7h-9.8zM1132.4 480.9h9.8v14.7h-9.8zM1255.8 480.9h8.8v14.7h-8.8zM1318.8 480.9h8.2v14.7h-8.2zM1544.8 480.9h8.1v14.7h-8.1zM1653.5 480.9h7.6v14.7h-7.6zM1683.5 480.9h7.3v14.7h-7.3zM1771.6 480.9h7.1v14.7h-7.1zM1778.6 480.9h7.3v14.7h-7.3zM1785.9 480.9h7.1v14.7h-7.1zM1821.5 480.9h7.1v14.7h-7.1zM1863.6 480.9h6.8v14.7h-6.8zM2112.0 480.9h6.3v14.7h-6.3zM2221.8 480.9h5.8v14.7h-5.8zM2303.8 480.9h5.8v14.7h-5.8zM2427.4 480.9h5.5v14.7h-5.5zM2476.8 480.9h5.5v14.7h-5.5zM2530.6 480.9h5.3v14.7h-5.3zM2535.9 480.9h5.3v14.7h-5.3zM2546.5 480.9h5.3v14.7h-5.3zM2583.3 480.9h5.4v14.7h-5.4zM2645.0 480.9h5.7v14.7h-5.7zM2675.6 480.9h5.7v14.7h-5.7zM2681.3 480.9h5.2v14.7h-5.2zM2690.9 480.9h5.7v14.7h-5.7zM2711.5 480.9h5.2v14.7h-5.2zM2751.7 480.9h4.2v14.7h-4.2zM2775.6 480.9h5.2v14.7h-5.2zM2800.4 480.9h4.8v14.7h-4.8zM2854.3 480.9h4.4v14.7h-4.4zM252.4 495.6h10.3v14.7h-10.3zM262.7 495.6h12.1v14.7h-12.1zM299.4 495.6h12.4v14.7h-12.4zM607.3 495.6h12.4v14.7h-12.4zM694.4 495.6h11.1v14.7h-11.1zM1082.7 495.6h10.1v14.7h-10.1zM1439.1 495.6h8.3v14.7h-8.3zM1472.1 495.6h8.3v14.7h-8.3zM1496.6 495.6h8.1v14.7h-8.1zM1576.6 495.6h7.8v14.7h-7.8zM1630.8 495.6h7.6v14.7h-7.6zM1645.9 495.6h7.6v14.7h-7.6zM1668.6 495.6h7.3v14.7h-7.3zM1756.9 495.6h7.3v14.7h-7.3zM1800.3 495.6h7.1v14.7h-7.1zM1891.1 495.6h6.8v14.7h-6.8zM1911.6 495.6h6.8v14.7h-6.8zM2061.6 495.6h6.3v14.7h-6.3zM2112.0 495.6h6.3v14.7h-6.3zM2118.4 495.6h6.1v14.7h-6.1zM2124.4 495.6h6.3v14.7h-6.3zM2269.0 495.6h5.8v14.7h-5.8zM2326.7 495.6h5.8v14.7h-5.8zM2394.1 495.6h5.5v14.7h-5.5zM2427.4 495.6h5.5v14.7h-5.5zM2466.0 495.6h5.5v14.7h-5.5zM2551.8 495.6h5.3v14.7h-5.3zM2562.4 495.6h5.3v14.7h-5.3zM2736.2 495.6h5.4v14.7h-5.4zM2741.5 495.6h5.2v14.7h-5.2zM2795.6 495.6h4.8v14.7h-4.8zM2800.4 495.6h4.8v14.7h-4.8zM2809.8 495.6h4.8v14.7h-4.8zM337.4 510.2h12.4v14.7h-12.4zM388.2 510.2h12.8v14.7h-12.8zM466.0 510.2h12.8v14.7h-12.8zM491.9 510.2h13.1v14.7h-13.1zM543.4 510.2h12.8v14.7h-12.8zM594.5 510.2h12.8v14.7h-12.8zM730.8 510.2h11.6v14.7h-11.6zM1000.7 510.2h10.3v14.7h-10.3zM1062.5 510.2h10.1v14.7h-10.1zM1112.7 510.2h9.8v14.7h-9.8zM1199.7 510.2h9.3v14.7h-9.3zM1318.8 510.2h8.2v14.7h-8.2zM1335.6 510.2h8.8v14.7h-8.8zM1455.7 510.2h8.1v14.7h-8.1zM1584.4 510.2h7.8v14.7h-7.8zM1592.2 510.2h7.8v14.7h-7.8zM1600.0 510.2h7.8v14.7h-7.8zM1623.0 510.2h7.8v14.7h-7.8zM1630.8 510.2h7.6v14.7h-7.6zM1727.7 510.2h7.3v14.7h-7.3zM1821.5 510.2h7.1v14.7h-7.1zM1863.6 510.2h6.8v14.7h-6.8zM1904.8 510.2h6.8v14.7h-6.8zM1951.9 510.2h5.7v14.7h-5.7zM1964.5 510.2h6.6v14.7h-6.6zM2010.1 510.2h6.6v14.7h-6.6zM2023.2 510.2h6.6v14.7h-6.6zM2136.8 510.2h6.3v14.7h-6.3zM2292.2 510.2h5.8v14.7h-5.8zM2349.2 510.2h5.8v14.7h-5.8zM2388.5 510.2h5.5v14.7h-5.5zM2410.7 510.2h5.5v14.7h-5.5zM2444.0 510.2h5.5v14.7h-5.5zM2455.1 510.2h5.3v14.7h-5.3zM2493.0 510.2h5.5v14.7h-5.5zM2609.7 510.2h4.8v14.7h-4.8zM2614.5 510.2h5.2v14.7h-5.2zM2666.1 510.2h5.7v14.7h-5.7zM2686.5 510.2h4.4v14.7h-4.4zM2690.9 510.2h5.7v14.7h-5.7zM2795.6 510.2h4.8v14.7h-4.8zM2800.4 510.2h4.8v14.7h-4.8zM2809.8 510.2h4.8v14.7h-4.8zM505.0 524.9h12.8v14.7h-12.8zM682.0 524.9h12.4v14.7h-12.4zM754.7 524.9h12.4v14.7h-12.4zM958.6 524.9h10.6v14.7h-10.6zM969.2 524.9h10.6v14.7h-10.6zM1092.8 524.9h10.1v14.7h-10.1zM1132.4 524.9h9.8v14.7h-9.8zM1512.7 524.9h8.1v14.7h-8.1zM1544.8 524.9h8.1v14.7h-8.1zM1576.6 524.9h7.8v14.7h-7.8zM1821.5 524.9h7.1v14.7h-7.1zM1842.7 524.9h6.8v14.7h-6.8zM2003.6 524.9h6.6v14.7h-6.6zM2136.8 524.9h6.3v14.7h-6.3zM2149.1 524.9h6.1v14.7h-6.1zM2173.4 524.9h6.1v14.7h-6.1zM2215.7 524.9h6.1v14.7h-6.1zM2251.6 524.9h5.8v14.7h-5.8zM2257.4 524.9h5.8v14.7h-5.8zM2292.2 524.9h5.8v14.7h-5.8zM2303.8 524.9h5.8v14.7h-5.8zM2309.6 524.9h5.8v14.7h-5.8zM2383.0 524.9h5.5v14.7h-5.5zM2432.9 524.9h5.5v14.7h-5.5zM2482.4 524.9h5.3v14.7h-5.3zM2503.8 524.9h5.5v14.7h-5.5zM2509.4 524.9h5.3v14.7h-5.3zM2530.6 524.9h5.3v14.7h-5.3zM2578.5 524.9h4.8v14.7h-4.8zM2645.0 524.9h5.7v14.7h-5.7zM2650.8 524.9h4.8v14.7h-4.8zM2785.5 524.9h5.2v14.7h-5.2zM2805.2 524.9h4.6v14.7h-4.6z"/>
<path fill="#33628d" d="M274.0 246.0h0.8v14.7h-0.8zM505.0 246.0h12.8v14.7h-12.8zM517.8 246.0h12.8v14.7h-12.8zM718.7 246.0h12.1v14.7h-12.1zM742.4 246.0h12.4v14.7h-12.4zM754.7 246.0h12.4v14.7h-12.4zM848.1 246.0h11.4v14.7h-11.4zM925.8 246.0h10.8v14.7h-10.8zM979.8 246.0h10.6v14.7h-10.6zM1011.0 246.0h10.6v14.7h-10.6zM1032.0 246.0h10.3v14.7h-10.3zM1102.9 246.0h9.8v14.7h-9.8zM1190.2 246.0h9.6v14.7h-9.6zM1255.8 246.0h8.8v14.7h-8.8zM1264.6 246.0h9.1v14.7h-9.1zM1388.1 246.0h8.6v14.7h-8.6zM1439.1 246.0h8.3v14.7h-8.3zM1560.9 246.0h7.8v14.7h-7.8zM1615.4 246.0h7.6v14.7h-7.6zM1623.0 246.0h7.8v14.7h-7.8zM1793.0 246.0h7.3v14.7h-7.3zM1800.3 246.0h7.1v14.7h-7.1zM1807.4 246.0h7.1v14.7h-7.1zM1863.6 246.0h6.8v14.7h-6.8zM1877.5 246.0h6.8v14.7h-6.8zM1932.0 246.0h6.6v14.7h-6.6zM1997.0 246.0h6.6v14.7h-6.6zM2016.7 246.0h6.6v14.7h-6.6zM2227.6 246.0h6.1v14.7h-6.1zM2245.5 246.0h6.1v14.7h-6.1zM2257.4 246.0h5.8v14.7h-5.8zM2280.6 246.0h5.8v14.7h-5.8zM2292.2 246.0h5.8v14.7h-5.8zM2303.8 246.0h5.8v14.7h-5.8zM2315.4 246.0h5.8v14.7h-5.8zM2535.9 246.0h5.3v14.7h-5.3zM2541.2 246.0h5.3v14.7h-5.3zM2546.5 246.0h5.3v14.7h-5.3zM2775.6 246.0h5.2v14.7h-5.2zM2780.7 246.0h4.8v14.7h-4.8zM374.8 260.7h13.5v14.7h-13.5zM388.2 260.7h12.8v14.7h-12.8zM452.8 260.7h13.1v14.7h-13.1zM543.4 260.7h12.8v14.7h-12.8zM594.5 260.7h12.8v14.7h-12.8zM632.5 260.7h12.8v14.7h-12.8zM718.7 260.7h12.1v14.7h-12.1zM837.0 260.7h11.1v14.7h-11.1zM925.8 260.7h10.8v14.7h-10.8zM1011.0 260.7h10.6v14.7h-10.6zM1209.1 260.7h9.3v14.7h-9.3zM1218.4 260.7h9.3v14.7h-9.3zM1237.1 260.7h9.3v14.7h-9.3zM1282.7 260.7h9.1v14.7h-9.1zM1353.3 260.7h8.8v14.7h-8.8zM1396.7 260.7h8.6v14.7h-8.6zM1439.1 260.7h8.3v14.7h-8.3zM1504.7 260.7h8.1v14.7h-8.1zM1528.9 260.7h8.1v14.7h-8.1zM1552.8 260.7h8.1v14.7h-8.1zM1560.9 260.7h7.8v14.7h-7.8zM1584.4 260.7h7.8v14.7h-7.8zM1638.4 260.7h7.6v14.7h-7.6zM1720.4 260.7h7.3v14.7h-7.3zM1932.0 260.7h6.6v14.7h-6.6zM2233.6 260.7h5.8v14.7h-5.8zM2280.6 260.7h5.8v14.7h-5.8zM2286.4 260.7h5.8v14.7h-5.8zM2292.2 260.7h5.8v14.7h-5.8zM2303.8 260.7h5.8v14.7h-5.8zM2338.1 260.7h5.5v14.7h-5.5zM2371.9 260.7h5.5v14.7h-5.5zM2377.4 260.7h5.5v14.7h-5.5zM2399.6 260.7h5.5v14.7h-5.5zM2503.8 260.7h5.5v14.7h-5.5zM2541.2 260.7h5.3v14.7h-5.3zM2551.8 260.7h5.3v14.7h-5.3zM2567.6 260.7h5.4v14.7h-5.4zM2573.0 260.7h5.5v14.7h-5.5zM2588.7 260.7h5.7v14.7h-5.7zM2640.6 260.7h4.4v14.7h-4.4zM2660.7 260.7h5.4v14.7h-5.4zM2701.4 260.7h4.8v14.7h-4.8zM2706.2 260.7h5.4v14.7h-5.4zM2800.4 260.7h4.8v14.7h-4.8zM2809.8 260.7h4.8v14.7h-4.8zM274.8 275.4h12.1v14.7h-12.1zM287.0 275.4h12.4v14.7h-12.4zM505.0 275.4h12.8v14.7h-12.8zM530.6 275.4h12.8v14.7h-12.8zM657.4 275.4h12.8v14.7h-12.8zM694.4 275.4h11.1v14.7h-11.1zM742.4 275.4h12.4v14.7h-12.4zM914.9 275.4h10.8v14.7h-10.8zM925.8 275.4h10.8v14.7h-10.8zM979.8 275.4h10.6v14.7h-10.6zM1032.0 275.4h10.3v14.7h-10.3zM1062.5 275.4h10.1v14.7h-10.1zM1082.7 275.4h10.1v14.7h-10.1zM1132.4 275.4h9.8v14.7h-9.8zM1142.2 275.4h9.6v14.7h-9.6zM1190.2 275.4h9.6v14.7h-9.6zM1237.1 275.4h9.3v14.7h-9.3zM1480.4 275.4h8.1v14.7h-8.1zM1520.8 275.4h8.1v14.7h-8.1zM1645.9 275.4h7.6v14.7h-7.6zM1676.0 275.4h7.6v14.7h-7.6zM1713.0 275.4h7.3v14.7h-7.3zM1918.4 275.4h6.8v14.7h-6.8zM1964.5 275.4h6.6v14.7h-6.6zM1990.5 275.4h6.6v14.7h-6.6zM2061.6 275.4h6.3v14.7h-6.3zM2074.2 275.4h6.3v14.7h-6.3zM2080.5 275.4h6.3v14.7h-6.3zM2086.8 275.4h6.3v14.7h-6.3zM2191.5 275.4h6.1v14.7h-6.1zM2203.6 275.4h6.1v14.7h-6.1zM2209.7 275.4h6.1v14.7h-6.1zM2215.7 275.4h6.1v14.7h-6.1zM2233.6 275.4h5.8v14.7h-5.8zM2366.1 275.4h5.8v14.7h-5.8zM2399.6 275.4h5.5v14.7h-5.5zM2405.2 275.4h5.5v14.7h-5.5zM2427.4 275.4h5.5v14.7h-5.5zM2438.5 275.4h5.5v14.7h-5.5zM2449.6 275.4h5.5v14.7h-5.5zM2460.4 275.4h5.5v14.7h-5.5zM2482.4 275.4h5.3v14.7h-5.3zM2514.7 275.4h5.3v14.7h-5.3zM2530.6 275.4h5.3v14.7h-5.3zM2551.8 275.4h5.3v14.7h-5.3zM2599.6 275.4h5.0v14.7h-5.0zM2604.5 275.4h5.2v14.7h-5.2zM2609.7 275.4h4.8v14.7h-4.8zM2640.6 275.4h4.4v14.7h-4.4zM2766.4 275.4h4.4v14.7h-4.4zM2770.8 275.4h4.8v14.7h-4.8zM2805.2 275.4h4.6v14.7h-4.6zM2819.5 275.4h4.8v14.7h-4.8zM2848.6 275.4h5.7v14.7h-5.7zM2854.3 275.4h4.4v14.7h-4.4zM311.9 290.0h12.8v14.7h-12.8zM478.7 290.0h13.1v14.7h-13.1zM517.8 290.0h12.8v14.7h-12.8zM569.3 290.0h12.8v14.7h-12.8zM582.0 290.0h12.4v14.7h-12.4zM607.3 290.0h12.4v14.7h-12.4zM632.5 290.0h12.8v14.7h-12.8zM670.2 290.0h11.8v14.7h-11.8zM837.0 290.0h11.1v14.7h-11.1zM936.6 290.0h11.1v14.7h-11.1zM1102.9 290.0h9.8v14.7h-9.8zM1112.7 290.0h9.8v14.7h-9.8zM1132.4 290.0h9.8v14.7h-9.8zM1327.1 290.0h8.6v14.7h-8.6zM1396.7 290.0h8.6v14.7h-8.6zM1520.8 290.0h8.1v14.7h-8.1zM1584.4 290.0h7.8v14.7h-7.8zM1607.8 290.0h7.6v14.7h-7.6zM1727.7 290.0h7.3v14.7h-7.3zM1842.7 290.0h6.8v14.7h-6.8zM1891.1 290.0h6.8v14.7h-6.8zM1984.1 290.0h6.3v14.7h-6.3zM1990.5 290.0h6.6v14.7h-6.6zM2099.4 290.0h6.3v14.7h-6.3zM2179.4 290.0h6.1v14.7h-6.1zM2203.6 290.0h6.1v14.7h-6.1zM2303.8 290.0h5.8v14.7h-5.8zM2321.2 290.0h5.5v14.7h-5.5zM2349.2 290.0h5.8v14.7h-5.8zM2355.0 290.0h5.5v14.7h-5.5zM2377.4 290.0h5.5v14.7h-5.5zM2383.0 290.0h5.5v14.7h-5.5zM2438.5 290.0h5.5v14.7h-5.5zM2482.4 290.0h5.3v14.7h-5.3zM2503.8 290.0h5.5v14.7h-5.5zM2551.8 290.0h5.3v14.7h-5.3zM2562.4 290.0h5.3v14.7h-5.3zM2567.6 290.0h5.4v14.7h-5.4zM2588.7 290.0h5.7v14.7h-5.7zM2681.3 290.0h5.2v14.7h-5.2zM2721.5 290.0h5.2v14.7h-5.2zM2770.8 290.0h4.8v14.7h-4.8zM2780.7 290.0h4.8v14.7h-4.8zM2790.7 290.0h5.0v14.7h-5.0zM2833.8 290.0h4.8v14.7h-4.8zM452.8 304.7h13.1v14.7h-13.1zM491.9 304.7h13.1v14.7h-13.1zM619.7 304.7h12.8v14.7h-12.8zM848.1 304.7h11.4v14.7h-11.4zM881.6 304.7h11.4v14.7h-11.4zM947.7 304.7h10.8v14.7h-10.8zM990.4 304.7h10.3v14.7h-10.3zM1082.7 304.7h10.1v14.7h-10.1zM1199.7 304.7h9.3v14.7h-9.3zM1209.1 304.7h9.3v14.7h-9.3zM1255.8 304.7h8.8v14.7h-8.8zM1405.3 304.7h8.3v14.7h-8.3zM1552.8 304.7h8.1v14.7h-8.1zM1568.7 304.7h7.8v14.7h-7.8zM1615.4 304.7h7.6v14.7h-7.6zM1698.4 304.7h7.3v14.7h-7.3zM1705.7 304.7h7.3v14.7h-7.3zM1713.0 304.7h7.3v14.7h-7.3zM1720.4 304.7h7.3v14.7h-7.3zM1849.5 304.7h7.1v14.7h-7.1zM1891.1 304.7h6.8v14.7h-6.8zM1925.2 304.7h6.8v14.7h-6.8zM1945.4 304.7h6.6v14.7h-6.6zM2042.4 304.7h6.3v14.7h-6.3zM2080.5 304.7h6.3v14.7h-6.3zM2136.8 304.7h6.3v14.7h-6.3zM2143.1 304.7h6.1v14.7h-6.1zM2179.4 304.7h6.1v14.7h-6.1zM2203.6 304.7h6.1v14.7h-6.1zM2263.2 304.7h5.8v14.7h-5.8zM2286.4 304.7h5.8v14.7h-5.8zM2298.0 304.7h5.8v14.7h-5.8zM2371.9 304.7h5.5v14.7h-5.5zM2399.6 304.7h5.5v14.7h-5.5zM2416.3 304.7h5.5v14.7h-5.5zM2427.4 304.7h5.5v14.7h-5.5zM2460.4 304.7h5.5v14.7h-5.5zM2471.5 304.7h5.3v14.7h-5.3zM2476.8 304.7h5.5v14.7h-5.5zM2487.7 304.7h5.3v14.7h-5.3zM2535.9 304.7h5.3v14.7h-5.3zM2557.1 304.7h5.3v14.7h-5.3zM2562.4 304.7h5.3v14.7h-5.3zM2614.5 304.7h5.2v14.7h-5.2zM2619.6 304.7h5.4v14.7h-5.4zM2686.5 304.7h4.4v14.7h-4.4zM2770.8 304.7h4.8v14.7h-4.8zM2814.5 304.7h5.0v14.7h-5.0zM388.2 319.4h12.8v14.7h-12.8zM401.0 319.4h13.1v14.7h-13.1zM414.1 319.4h12.4v14.7h-12.4zM452.8 319.4h13.1v14.7h-13.1zM478.7 319.4h13.1v14.7h-13.1zM517.8 319.4h12.8v14.7h-12.8zM556.1 319.4h13.1v14.7h-13.1zM694.4 319.4h11.1v14.7h-11.1zM730.8 319.4h11.6v14.7h-11.6zM903.8 319.4h11.1v14.7h-11.1zM1052.4 319.4h10.1v14.7h-10.1zM1142.2 319.4h9.6v14.7h-9.6zM1151.8 319.4h9.8v14.7h-9.8zM1209.1 319.4h9.3v14.7h-9.3zM1318.8 319.4h8.2v14.7h-8.2zM1439.1 319.4h8.3v14.7h-8.3zM1520.8 319.4h8.1v14.7h-8.1zM1676.0 319.4h7.6v14.7h-7.6zM1683.5 319.4h7.3v14.7h-7.3zM1713.0 319.4h7.3v14.7h-7.3zM1785.9 319.4h7.1v14.7h-7.1zM1800.3 319.4h7.1v14.7h-7.1zM1977.6 319.4h6.6v14.7h-6.6zM2036.1 319.4h6.3v14.7h-6.3zM2055.3 319.4h6.3v14.7h-6.3zM2061.6 319.4h6.3v14.7h-6.3zM2080.5 319.4h6.3v14.7h-6.3zM2118.4 319.4h6.1v14.7h-6.1zM2143.1 319.4h6.1v14.7h-6.1zM2155.2 319.4h6.1v14.7h-6.1zM2167.3 319.4h6.1v14.7h-6.1zM2197.6 319.4h6.1v14.7h-6.1zM2315.4 319.4h5.8v14.7h-5.8zM2321.2 319.4h5.5v14.7h-5.5zM2349.2 319.4h5.8v14.7h-5.8zM2360.5 319.4h5.5v14.7h-5.5zM2366.1 319.4h5.8v14.7h-5.8zM2371.9 319.4h5.5v14.7h-5.5zM2383.0 319.4h5.5v14.7h-5.5zM2498.5 319.4h5.3v14.7h-5.3zM2503.8 319.4h5.5v14.7h-5.5zM2514.7 319.4h5.3v14.7h-5.3zM2588.7 319.4h5.7v14.7h-5.7zM2599.6 319.4h5.0v14.7h-5.0zM2614.5 319.4h5.2v14.7h-5.2zM2655.5 319.4h5.2v14.7h-5.2zM2775.6 319.4h5.2v14.7h-5.2zM825.4 334.1h11.6v14.7h-11.6zM871.0 334.1h10.6v14.7h-10.6zM881.6 334.1h11.4v14.7h-11.4zM1082.7 334.1h10.1v14.7h-10.1zM1092.8 334.1h10.1v14.7h-10.1zM1132.4 334.1h9.8v14.7h-9.8zM1255.8 334.1h8.8v14.7h-8.8zM1472.1 334.1h8.3v14.7h-8.3zM1592.2 334.1h7.8v14.7h-7.8zM1623.0 334.1h7.8v14.7h-7.8zM1683.5 334.1h7.3v14.7h-7.3zM1690.8 334.1h7.6v14.7h-7.6zM1698.4 334.1h7.3v14.7h-7.3zM1771.6 334.1h7.1v14.7h-7.1zM1807.4 334.1h7.1v14.7h-7.1zM1842.7 334.1h6.8v14.7h-6.8zM1891.1 334.1h6.8v14.7h-6.8zM1932.0 334.1h6.6v14.7h-6.6zM1984.1 334.1h6.3v14.7h-6.3zM2074.2 334.1h6.3v14.7h-6.3zM2136.8 334.1h6.3v14.7h-6.3zM2161.2 334.1h6.1v14.7h-6.1zM2215.7 334.1h6.1v14.7h-6.1zM2263.2 334.1h5.8v14.7h-5.8zM2286.4 334.1h5.8v14.7h-5.8zM2338.1 334.1h5.5v14.7h-5.5zM2343.6 334.1h5.5v14.7h-5.5zM2383.0 334.1h5.5v14.7h-5.5zM2388.5 334.1h5.5v14.7h-5.5zM2410.7 334.1h5.5v14.7h-5.5zM2427.4 334.1h5.5v14.7h-5.5zM2525.3 334.1h5.3v14.7h-5.3zM2557.1 334.1h5.3v14.7h-5.3zM2650.8 334.1h4.8v14.7h-4.8zM2681.3 334.1h5.2v14.7h-5.2zM2696.6 334.1h4.8v14.7h-4.8zM2711.5 334.1h5.2v14.7h-5.2zM2780.7 334.1h4.8v14.7h-4.8zM388.2 348.8h12.8v14.7h-12.8zM426.6 348.8h13.1v14.7h-13.1zM466.0 348.8h12.8v14.7h-12.8zM517.8 348.8h12.8v14.7h-12.8zM556.1 348.8h13.1v14.7h-13.1zM742.4 348.8h12.4v14.7h-12.4zM790.8 348.8h11.6v14.7h-11.6zM903.8 348.8h11.1v14.7h-11.1zM936.6 348.8h11.1v14.7h-11.1zM1042.3 348.8h10.1v14.7h-10.1zM1180.8 348.8h9.3v14.7h-9.3zM1190.2 348.8h9.6v14.7h-9.6zM1199.7 348.8h9.3v14.7h-9.3zM1246.4 348.8h9.3v14.7h-9.3zM1273.7 348.8h9.1v14.7h-9.1zM1282.7 348.8h9.1v14.7h-9.1zM1318.8 348.8h8.2v14.7h-8.2zM1335.6 348.8h8.8v14.7h-8.8zM1344.5 348.8h8.8v14.7h-8.8zM1379.3 348.8h8.8v14.7h-8.8zM1480.4 348.8h8.1v14.7h-8.1zM1504.7 348.8h8.1v14.7h-8.1zM1520.8 348.8h8.1v14.7h-8.1zM1552.8 348.8h8.1v14.7h-8.1zM1584.4 348.8h7.8v14.7h-7.8zM1615.4 348.8h7.6v14.7h-7.6zM1630.8 348.8h7.6v14.7h-7.6zM1638.4 348.8h7.6v14.7h-7.6zM1698.4 348.8h7.3v14.7h-7.3zM1727.7 348.8h7.3v14.7h-7.3zM1778.6 348.8h7.3v14.7h-7.3zM1904.8 348.8h6.8v14.7h-6.8zM1911.6 348.8h6.8v14.7h-6.8zM1951.9 348.8h5.7v14.7h-5.7zM1977.6 348.8h6.6v14.7h-6.6zM1984.1 348.8h6.3v14.7h-6.3zM2029.8 348.8h6.3v14.7h-6.3zM2036.1 348.8h6.3v14.7h-6.3zM2067.9 348.8h6.3v14.7h-6.3zM2130.7 348.8h6.1v14.7h-6.1zM2136.8 348.8h6.3v14.7h-6.3zM2149.1 348.8h6.1v14.7h-6.1zM2155.2 348.8h6.1v14.7h-6.1zM2161.2 348.8h6.1v14.7h-6.1zM2263.2 348.8h5.8v14.7h-5.8zM2269.0 348.8h5.8v14.7h-5.8zM2303.8 348.8h5.8v14.7h-5.8zM2309.6 348.8h5.8v14.7h-5.8zM2444.0 348.8h5.5v14.7h-5.5zM2460.4 348.8h5.5v14.7h-5.5zM2493.0 348.8h5.5v14.7h-5.5zM2551.8 348.8h5.3v14.7h-5.3zM2583.3 348.8h5.4v14.7h-5.4zM2594.4 348.8h5.2v14.7h-5.2zM2599.6 348.8h5.0v14.7h-5.0zM2619.6 348.8h5.4v14.7h-5.4zM2625.0 348.8h5.4v14.7h-5.4zM2660.7 348.8h5.4v14.7h-5.4zM2671.8 348.8h3.8v14.7h-3.8zM2731.4 348.8h4.8v14.7h-4.8zM299.4 363.4h12.4v14.7h-12.4zM374.8 363.4h13.5v14.7h-13.5zM401.0 363.4h13.1v14.7h-13.1zM802.4 363.4h11.6v14.7h-11.6zM947.7 363.4h10.8v14.7h-10.8zM958.6 363.4h10.6v14.7h-10.6zM1062.5 363.4h10.1v14.7h-10.1zM1171.2 363.4h9.6v14.7h-9.6zM1237.1 363.4h9.3v14.7h-9.3zM1310.0 363.4h8.8v14.7h-8.8zM1592.2 363.4h7.8v14.7h-7.8zM1742.3 363.4h7.3v14.7h-7.3zM1814.5 363.4h7.1v14.7h-7.1zM1990.5 363.4h6.6v14.7h-6.6zM2036.1 363.4h6.3v14.7h-6.3zM2093.1 363.4h6.3v14.7h-6.3zM2155.2 363.4h6.1v14.7h-6.1zM2179.4 363.4h6.1v14.7h-6.1zM2191.5 363.4h6.1v14.7h-6.1zM2203.6 363.4h6.1v14.7h-6.1zM2209.7 363.4h6.1v14.7h-6.1zM2245.5 363.4h6.1v14.7h-6.1zM2303.8 363.4h5.8v14.7h-5.8zM2444.0 363.4h5.5v14.7h-5.5zM2449.6 363.4h5.5v14.7h-5.5zM2471.5 363.4h5.3v14.7h-5.3zM2525.3 363.4h5.3v14.7h-5.3zM2541.2 363.4h5.3v14.7h-5.3zM2588.7 363.4h5.7v14.7h-5.7zM2640.6 363.4h4.4v14.7h-4.4zM2655.5 363.4h5.2v14.7h-5.2zM2671.8 363.4h3.8v14.7h-3.8zM2675.6 363.4h5.7v14.7h-5.7zM2711.5 363.4h5.2v14.7h-5.2zM2741.5 363.4h5.2v14.7h-5.2zM2755.9 363.4h5.2v14.7h-5.2zM2775.6 363.4h5.2v14.7h-5.2zM2800.4 363.4h4.8v14.7h-4.8zM2809.8 363.4h4.8v14.7h-4.8zM2814.5 363.4h5.0v14.7h-5.0zM2833.8 363.4h4.8v14.7h-4.8zM2843.8 363.4h3.2v14.7h-3.2zM936.6 378.1h11.1v14.7h-11.1zM1180.8 378.1h9.3v14.7h-9.3zM1300.9 378.1h9.1v14.7h-9.1zM1310.0 378.1h8.8v14.7h-8.8zM1568.7 378.1h7.8v14.7h-7.8zM1584.4 378.1h7.8v14.7h-7.8zM1592.2 378.1h7.8v14.7h-7.8zM1676.0 378.1h7.6v14.7h-7.6zM1793.0 378.1h7.3v14.7h-7.3zM1814.5 378.1h7.1v14.7h-7.1zM1877.5 378.1h6.8v14.7h-6.8zM1925.2 378.1h6.8v14.7h-6.8zM1997.0 378.1h6.6v14.7h-6.6zM2036.1 378.1h6.3v14.7h-6.3zM2136.8 378.1h6.3v14.7h-6.3zM2215.7 378.1h6.1v14.7h-6.1zM2257.4 378.1h5.8v14.7h-5.8zM2399.6 378.1h5.5v14.7h-5.5zM2460.4 378.1h5.5v14.7h-5.5zM2498.5 378.1h5.3v14.7h-5.3zM2567.6 378.1h5.4v14.7h-5.4zM2660.7 378.1h5.4v14.7h-5.4zM2701.4 378.1h4.8v14.7h-4.8zM2800.4 378.1h4.8v14.7h-4.8zM2809.8 378.1h4.8v14.7h-4.8zM2814.5 378.1h5.0v14.7h-5.0zM287.0 392.8h12.4v14.7h-12.4zM324.6 392.8h12.8v14.7h-12.8zM619.7 392.8h12.8v14.7h-12.8zM632.5 392.8h12.8v14.7h-12.8zM767.1 392.8h12.1v14.7h-12.1zM1062.5 392.8h10.1v14.7h-10.1zM1161.7 392.8h9.6v14.7h-9.6zM1199.7 392.8h9.3v14.7h-9.3zM1218.4 392.8h9.3v14.7h-9.3zM1488.5 392.8h8.1v14.7h-8.1zM1504.7 392.8h8.1v14.7h-8.1zM1560.9 392.8h7.8v14.7h-7.8zM1592.2 392.8h7.8v14.7h-7.8zM1630.8 392.8h7.6v14.7h-7.6zM1661.1 392.8h7.6v14.7h-7.6zM1720.4 392.8h7.3v14.7h-7.3zM1793.0 392.8h7.3v14.7h-7.3zM1800.3 392.8h7.1v14.7h-7.1zM1964.5 392.8h6.6v14.7h-6.6zM2086.8 392.8h6.3v14.7h-6.3zM2136.8 392.8h6.3v14.7h-6.3zM2215.7 392.8h6.1v14.7h-6.1zM2221.8 392.8h5.8v14.7h-5.8zM2286.4 392.8h5.8v14.7h-5.8zM2371.9 392.8h5.5v14.7h-5.5zM2416.3 392.8h5.5v14.7h-5.5zM2444.0 392.8h5.5v14.7h-5.5zM2449.6 392.8h5.5v14.7h-5.5zM2460.4 392.8h5.5v14.7h-5.5zM2498.5 392.8h5.3v14.7h-5.3zM2645.0 392.8h5.7v14.7h-5.7zM2671.8 392.8h3.8v14.7h-3.8zM2690.9 392.8h5.7v14.7h-5.7zM2711.5 392.8h5.2v14.7h-5.2zM2741.5 392.8h5.2v14.7h-5.2zM2790.7 392.8h5.0v14.7h-5.0zM311.9 407.5h12.8v14.7h-12.8zM349.9 407.5h12.8v14.7h-12.8zM362.7 407.5h12.1v14.7h-12.1zM452.8 407.5h13.1v14.7h-13.1zM556.1 407.5h13.1v14.7h-13.1zM657.4 407.5h12.8v14.7h-12.8zM682.0 407.5h12.4v14.7h-12.4zM718.7 407.5h12.1v14.7h-12.1zM837.0 407.5h11.1v14.7h-11.1zM936.6 407.5h11.1v14.7h-11.1zM1151.8 407.5h9.8v14.7h-9.8zM1171.2 407.5h9.6v14.7h-9.6zM1190.2 407.5h9.6v14.7h-9.6zM1199.7 407.5h9.3v14.7h-9.3zM1218.4 407.5h9.3v14.7h-9.3zM1237.1 407.5h9.3v14.7h-9.3zM1246.4 407.5h9.3v14.7h-9.3zM1463.8 407.5h8.3v14.7h-8.3zM1472.1 407.5h8.3v14.7h-8.3zM1496.6 407.5h8.1v14.7h-8.1zM1560.9 407.5h7.8v14.7h-7.8zM1592.2 407.5h7.8v14.7h-7.8zM1607.8 407.5h7.6v14.7h-7.6zM1630.8 407.5h7.6v14.7h-7.6zM1683.5 407.5h7.3v14.7h-7.3zM1705.7 407.5h7.3v14.7h-7.3zM1720.4 407.5h7.3v14.7h-7.3zM1925.2 407.5h6.8v14.7h-6.8zM2074.2 407.5h6.3v14.7h-6.3zM2093.1 407.5h6.3v14.7h-6.3zM2233.6 407.5h5.8v14.7h-5.8zM2257.4 407.5h5.8v14.7h-5.8zM2280.6 407.5h5.8v14.7h-5.8zM2286.4 407.5h5.8v14.7h-5.8zM2292.2 407.5h5.8v14.7h-5.8zM2303.8 407.5h5.8v14.7h-5.8zM2321.2 407.5h5.5v14.7h-5.5zM2326.7 407.5h5.8v14.7h-5.8zM2332.5 407.5h5.5v14.7h-5.5zM2449.6 407.5h5.5v14.7h-5.5zM2455.1 407.5h5.3v14.7h-5.3zM2476.8 407.5h5.5v14.7h-5.5zM2487.7 407.5h5.3v14.7h-5.3zM2493.0 407.5h5.5v14.7h-5.5zM2498.5 407.5h5.3v14.7h-5.3zM2567.6 407.5h5.4v14.7h-5.4zM2588.7 407.5h5.7v14.7h-5.7zM2609.7 407.5h4.8v14.7h-4.8zM2640.6 407.5h4.4v14.7h-4.4zM2671.8 407.5h3.8v14.7h-3.8zM2706.2 407.5h5.4v14.7h-5.4zM2741.5 407.5h5.2v14.7h-5.2zM2746.7 407.5h5.0v14.7h-5.0zM2755.9 407.5h5.2v14.7h-5.2zM2795.6 407.5h4.8v14.7h-4.8zM2833.8 407.5h4.8v14.7h-4.8zM2838.6 407.5h5.2v14.7h-5.2zM262.7 422.2h12.1v14.7h-12.1zM324.6 422.2h12.8v14.7h-12.8zM426.6 422.2h13.1v14.7h-13.1zM556.1 422.2h13.1v14.7h-13.1zM742.4 422.2h12.4v14.7h-12.4zM767.1 422.2h12.1v14.7h-12.1zM848.1 422.2h11.4v14.7h-11.4zM881.6 422.2h11.4v14.7h-11.4zM914.9 422.2h10.8v14.7h-10.8zM1000.7 422.2h10.3v14.7h-10.3zM1011.0 422.2h10.6v14.7h-10.6zM1042.3 422.2h10.1v14.7h-10.1zM1171.2 422.2h9.6v14.7h-9.6zM1218.4 422.2h9.3v14.7h-9.3zM1327.1 422.2h8.6v14.7h-8.6zM1413.6 422.2h8.3v14.7h-8.3zM1455.7 422.2h8.1v14.7h-8.1zM1512.7 422.2h8.1v14.7h-8.1zM1528.9 422.2h8.1v14.7h-8.1zM1560.9 422.2h7.8v14.7h-7.8zM1600.0 422.2h7.8v14.7h-7.8zM1623.0 422.2h7.8v14.7h-7.8zM1683.5 422.2h7.3v14.7h-7.3zM1749.6 422.2h7.3v14.7h-7.3zM1771.6 422.2h7.1v14.7h-7.1zM1828.6 422.2h7.1v14.7h-7.1zM1964.5 422.2h6.6v14.7h-6.6zM2105.7 422.2h6.3v14.7h-6.3zM2112.0 422.2h6.3v14.7h-6.3zM2118.4 422.2h6.1v14.7h-6.1zM2161.2 422.2h6.1v14.7h-6.1zM2227.6 422.2h6.1v14.7h-6.1zM2239.4 422.2h6.1v14.7h-6.1zM2292.2 422.2h5.8v14.7h-5.8zM2326.7 422.2h5.8v14.7h-5.8zM2466.0 422.2h5.5v14.7h-5.5zM2471.5 422.2h5.3v14.7h-5.3zM2525.3 422.2h5.3v14.7h-5.3zM2535.9 422.2h5.3v14.7h-5.3zM2541.2 422.2h5.3v14.7h-5.3zM2562.4 422.2h5.3v14.7h-5.3zM2567.6 422.2h5.4v14.7h-5.4zM2583.3 422.2h5.4v14.7h-5.4zM2604.5 422.2h5.2v14.7h-5.2zM2609.7 422.2h4.8v14.7h-4.8zM2635.5 422.2h5.2v14.7h-5.2zM2645.0 422.2h5.7v14.7h-5.7zM2671.8 422.2h3.8v14.7h-3.8zM2690.9 422.2h5.7v14.7h-5.7zM2696.6 422.2h4.8v14.7h-4.8zM2716.7 422.2h4.8v14.7h-4.8zM2736.2 422.2h5.4v14.7h-5.4zM2746.7 422.2h5.0v14.7h-5.0zM2761.0 422.2h5.4v14.7h-5.4zM2843.8 422.2h4.8v14.7h-4.8zM466.0 436.8h12.8v14.7h-12.8zM594.5 436.8h12.8v14.7h-12.8zM790.8 436.8h11.6v14.7h-11.6zM914.9 436.8h10.8v14.7h-10.8zM947.7 436.8h10.8v14.7h-10.8zM1584.4 436.8h7.8v14.7h-7.8zM1676.0 436.8h7.6v14.7h-7.6zM1742.3 436.8h7.3v14.7h-7.3zM1778.6 436.8h7.3v14.7h-7.3zM1807.4 436.8h7.1v14.7h-7.1zM1891.1 436.8h6.8v14.7h-6.8zM1997.0 436.8h6.6v14.7h-6.6zM2080.5 436.8h6.3v14.7h-6.3zM2179.4 436.8h6.1v14.7h-6.1zM2209.7 436.8h6.1v14.7h-6.1zM2227.6 436.8h6.1v14.7h-6.1zM2269.0 436.8h5.8v14.7h-5.8zM2286.4 436.8h5.8v14.7h-5.8zM2303.8 436.8h5.8v14.7h-5.8zM2315.4 436.8h5.8v14.7h-5.8zM2343.6 436.8h5.5v14.7h-5.5zM2355.0 436.8h5.5v14.7h-5.5zM2410.7 436.8h5.5v14.7h-5.5zM2416.3 436.8h5.5v14.7h-5.5zM2444.0 436.8h5.5v14.7h-5.5zM2460.4 436.8h5.5v14.7h-5.5zM2466.0 436.8h5.5v14.7h-5.5zM2535.9 436.8h5.3v14.7h-5.3zM2541.2 436.8h5.3v14.7h-5.3zM2650.8 436.8h4.8v14.7h-4.8zM2690.9 436.8h5.7v14.7h-5.7zM2701.4 436.8h4.8v14.7h-4.8zM2741.5 436.8h5.2v14.7h-5.2zM2805.2 436.8h4.6v14.7h-4.6zM2848.6 436.8h5.7v14.7h-5.7zM311.9 451.5h12.8v14.7h-12.8zM517.8 451.5h12.8v14.7h-12.8zM556.1 451.5h13.1v14.7h-13.1zM594.5 451.5h12.8v14.7h-12.8zM670.2 451.5h11.8v14.7h-11.8zM718.7 451.5h12.1v14.7h-12.1zM825.4 451.5h11.6v14.7h-11.6zM1161.7 451.5h9.6v14.7h-9.6zM1190.2 451.5h9.6v14.7h-9.6zM1209.1 451.5h9.3v14.7h-9.3zM1255.8 451.5h8.8v14.7h-8.8zM1327.1 451.5h8.6v14.7h-8.6zM1370.5 451.5h8.8v14.7h-8.8zM1405.3 451.5h8.3v14.7h-8.3zM1472.1 451.5h8.3v14.7h-8.3zM1653.5 451.5h7.6v14.7h-7.6zM1690.8 451.5h7.6v14.7h-7.6zM1742.3 451.5h7.3v14.7h-7.3zM1764.2 451.5h7.3v14.7h-7.3zM1863.6 451.5h6.8v14.7h-6.8zM1898.0 451.5h6.8v14.7h-6.8zM2074.2 451.5h6.3v14.7h-6.3zM2080.5 451.5h6.3v14.7h-6.3zM2274.8 451.5h5.8v14.7h-5.8zM2326.7 451.5h5.8v14.7h-5.8zM2360.5 451.5h5.5v14.7h-5.5zM2421.8 451.5h5.5v14.7h-5.5zM2449.6 451.5h5.5v14.7h-5.5zM2509.4 451.5h5.3v14.7h-5.3zM2535.9 451.5h5.3v14.7h-5.3zM2541.2 451.5h5.3v14.7h-5.3zM2573.0 451.5h5.5v14.7h-5.5zM2645.0 451.5h5.7v14.7h-5.7zM2650.8 451.5h4.8v14.7h-4.8zM2666.1 451.5h5.7v14.7h-5.7zM2675.6 451.5h5.7v14.7h-5.7zM2701.4 451.5h4.8v14.7h-4.8zM2706.2 451.5h5.4v14.7h-5.4zM2741.5 451.5h5.2v14.7h-5.2zM2819.5 451.5h4.8v14.7h-4.8zM2824.3 451.5h4.8v14.7h-4.8zM2833.8 451.5h4.8v14.7h-4.8zM274.8 466.2h12.1v14.7h-12.1zM388.2 466.2h12.8v14.7h-12.8zM426.6 466.2h13.1v14.7h-13.1zM505.0 466.2h12.8v14.7h-12.8zM607.3 466.2h12.4v14.7h-12.4zM718.7 466.2h12.1v14.7h-12.1zM802.4 466.2h11.6v14.7h-11.6zM979.8 466.2h10.6v14.7h-10.6zM1000.7 466.2h10.3v14.7h-10.3zM1042.3 466.2h10.1v14.7h-10.1zM1122.6 466.2h9.8v14.7h-9.8zM1132.4 466.2h9.8v14.7h-9.8zM1190.2 466.2h9.6v14.7h-9.6zM1264.6 466.2h9.1v14.7h-9.1zM1335.6 466.2h8.8v14.7h-8.8zM1344.5 466.2h8.8v14.7h-8.8zM1405.3 466.2h8.3v14.7h-8.3zM1455.7 466.2h8.1v14.7h-8.1zM1463.8 466.2h8.3v14.7h-8.3zM1576.6 466.2h7.8v14.7h-7.8zM1668.6 466.2h7.3v14.7h-7.3zM1727.7 466.2h7.3v14.7h-7.3zM1807.4 466.2h7.1v14.7h-7.1zM1821.5 466.2h7.1v14.7h-7.1zM1863.6 466.2h6.8v14.7h-6.8zM1877.5 466.2h6.8v14.7h-6.8zM1911.6 466.2h6.8v14.7h-6.8zM1951.9 466.2h5.7v14.7h-5.7zM1971.0 466.2h6.6v14.7h-6.6zM1977.6 466.2h6.6v14.7h-6.6zM1990.5 466.2h6.6v14.7h-6.6zM2016.7 466.2h6.6v14.7h-6.6zM2023.2 466.2h6.6v14.7h-6.6zM2080.5 466.2h6.3v14.7h-6.3zM2124.4 466.2h6.3v14.7h-6.3zM2149.1 466.2h6.1v14.7h-6.1zM2167.3 466.2h6.1v14.7h-6.1zM2173.4 466.2h6.1v14.7h-6.1zM2227.6 466.2h6.1v14.7h-6.1zM2298.0 466.2h5.8v14.7h-5.8zM2321.2 466.2h5.5v14.7h-5.5zM2530.6 466.2h5.3v14.7h-5.3zM2535.9 466.2h5.3v14.7h-5.3zM2583.3 466.2h5.4v14.7h-5.4zM2614.5 466.2h5.2v14.7h-5.2zM2619.6 466.2h5.4v14.7h-5.4zM2640.6 466.2h4.4v14.7h-4.4zM2650.8 466.2h4.8v14.7h-4.8zM2711.5 466.2h5.2v14.7h-5.2zM2755.9 466.2h5.2v14.7h-5.2zM2766.4 466.2h4.4v14.7h-4.4zM2819.5 466.2h4.8v14.7h-4.8zM2824.3 466.2h4.8v14.7h-4.8zM2838.6 466.2h5.2v14.7h-5.2zM2848.6 466.2h5.7v14.7h-5.7zM252.4 480.9h10.3v14.7h-10.3zM362.7 480.9h12.1v14.7h-12.1zM439.7 480.9h13.1v14.7h-13.1zM607.3 480.9h12.4v14.7h-12.4zM1072.6 480.9h10.1v14.7h-10.1zM1142.2 480.9h9.6v14.7h-9.6zM1273.7 480.9h9.1v14.7h-9.1zM1370.5 480.9h8.8v14.7h-8.8zM1472.1 480.9h8.3v14.7h-8.3zM1504.7 480.9h8.1v14.7h-8.1zM1584.4 480.9h7.8v14.7h-7.8zM1668.6 480.9h7.3v14.7h-7.3zM1690.8 480.9h7.6v14.7h-7.6zM1727.7 480.9h7.3v14.7h-7.3zM1749.6 480.9h7.3v14.7h-7.3zM1904.8 480.9h6.8v14.7h-6.8zM1932.0 480.9h6.6v14.7h-6.6zM1971.0 480.9h6.6v14.7h-6.6zM1984.1 480.9h6.3v14.7h-6.3zM2003.6 480.9h6.6v14.7h-6.6zM2074.2 480.9h6.3v14.7h-6.3zM2080.5 480.9h6.3v14.7h-6.3zM2130.7 480.9h6.1v14.7h-6.1zM2136.8 480.9h6.3v14.7h-6.3zM2149.1 480.9h6.1v14.7h-6.1zM2227.6 480.9h6.1v14.7h-6.1zM2280.6 480.9h5.8v14.7h-5.8zM2292.2 480.9h5.8v14.7h-5.8zM2343.6 480.9h5.5v14.7h-5.5zM2360.5 480.9h5.5v14.7h-5.5zM2482.4 480.9h5.3v14.7h-5.3zM2509.4 480.9h5.3v14.7h-5.3zM2557.1 480.9h5.3v14.7h-5.3zM2567.6 480.9h5.4v14.7h-5.4zM2573.0 480.9h5.5v14.7h-5.5zM2609.7 480.9h4.8v14.7h-4.8zM2640.6 480.9h4.4v14.7h-4.4zM2655.5 480.9h5.2v14.7h-5.2zM2755.9 480.9h5.2v14.7h-5.2zM2814.5 480.9h5.0v14.7h-5.0zM2819.5 480.9h4.8v14.7h-4.8zM2829.1 480.9h4.8v14.7h-4.8zM2838.6 480.9h5.2v14.7h-5.2zM2843.8 480.9h4.8v14.7h-4.8zM2848.6 480.9h5.7v14.7h-5.7zM517.8 495.6h12.8v14.7h-12.8zM556.1 495.6h13.1v14.7h-13.1zM619.7 495.6h12.8v14.7h-12.8zM893.0 495.6h10.8v14.7h-10.8zM979.8 495.6h10.6v14.7h-10.6zM1032.0 495.6h10.3v14.7h-10.3zM1042.3 495.6h10.1v14.7h-10.1zM1062.5 495.6h10.1v14.7h-10.1zM1072.6 495.6h10.1v14.7h-10.1zM1102.9 495.6h9.8v14.7h-9.8zM1142.2 495.6h9.6v14.7h-9.6zM1180.8 495.6h9.3v14.7h-9.3zM1190.2 495.6h9.6v14.7h-9.6zM1264.6 495.6h9.1v14.7h-9.1zM1282.7 495.6h9.1v14.7h-9.1zM1310.0 495.6h8.8v14.7h-8.8zM1318.8 495.6h8.2v14.7h-8.2zM1335.6 495.6h8.8v14.7h-8.8zM1379.3 495.6h8.8v14.7h-8.8zM1413.6 495.6h8.3v14.7h-8.3zM1463.8 495.6h8.3v14.7h-8.3zM1504.7 495.6h8.1v14.7h-8.1zM1544.8 495.6h8.1v14.7h-8.1zM1592.2 495.6h7.8v14.7h-7.8zM1735.0 495.6h7.3v14.7h-7.3zM1785.9 495.6h7.1v14.7h-7.1zM1793.0 495.6h7.3v14.7h-7.3zM1828.6 495.6h7.1v14.7h-7.1zM1877.5 495.6h6.8v14.7h-6.8zM1957.7 495.6h6.8v14.7h-6.8zM1964.5 495.6h6.6v14.7h-6.6zM2042.4 495.6h6.3v14.7h-6.3zM2048.7 495.6h6.6v14.7h-6.6zM2130.7 495.6h6.1v14.7h-6.1zM2167.3 495.6h6.1v14.7h-6.1zM2209.7 495.6h6.1v14.7h-6.1zM2286.4 495.6h5.8v14.7h-5.8zM2303.8 495.6h5.8v14.7h-5.8zM2321.2 495.6h5.5v14.7h-5.5zM2371.9 495.6h5.5v14.7h-5.5zM2421.8 495.6h5.5v14.7h-5.5zM2432.9 495.6h5.5v14.7h-5.5zM2444.0 495.6h5.5v14.7h-5.5zM2449.6 495.6h5.5v14.7h-5.5zM2498.5 495.6h5.3v14.7h-5.3zM2520.0 495.6h5.3v14.7h-5.3zM2583.3 495.6h5.4v14.7h-5.4zM2609.7 495.6h4.8v14.7h-4.8zM2630.3 495.6h5.2v14.7h-5.2zM2660.7 495.6h5.4v14.7h-5.4zM2666.1 495.6h5.7v14.7h-5.7zM2731.4 495.6h4.8v14.7h-4.8zM2805.2 495.6h4.6v14.7h-4.6zM2819.5 495.6h4.8v14.7h-4.8zM349.9 510.2h12.8v14.7h-12.8zM452.8 510.2h13.1v14.7h-13.1zM903.8 510.2h11.1v14.7h-11.1zM925.8 510.2h10.8v14.7h-10.8zM990.4 510.2h10.3v14.7h-10.3zM1042.3 510.2h10.1v14.7h-10.1zM1122.6 510.2h9.8v14.7h-9.8zM1218.4 510.2h9.3v14.7h-9.3zM1246.4 510.2h9.3v14.7h-9.3zM1291.8 510.2h9.1v14.7h-9.1zM1396.7 510.2h8.6v14.7h-8.6zM1668.6 510.2h7.3v14.7h-7.3zM1742.3 510.2h7.3v14.7h-7.3zM1749.6 510.2h7.3v14.7h-7.3zM1756.9 510.2h7.3v14.7h-7.3zM1771.6 510.2h7.1v14.7h-7.1zM1849.5 510.2h7.1v14.7h-7.1zM1870.5 510.2h7.1v14.7h-7.1zM1911.6 510.2h6.8v14.7h-6.8zM1997.0 510.2h6.6v14.7h-6.6zM2029.8 510.2h6.3v14.7h-6.3zM2055.3 510.2h6.3v14.7h-6.3zM2143.1 510.2h6.1v14.7h-6.1zM2161.2 510.2h6.1v14.7h-6.1zM2286.4 510.2h5.8v14.7h-5.8zM2315.4 510.2h5.8v14.7h-5.8zM2343.6 510.2h5.5v14.7h-5.5zM2405.2 510.2h5.5v14.7h-5.5zM2460.4 510.2h5.5v14.7h-5.5zM2466.0 510.2h5.5v14.7h-5.5zM2482.4 510.2h5.3v14.7h-5.3zM2487.7 510.2h5.3v14.7h-5.3zM2503.8 510.2h5.5v14.7h-5.5zM2514.7 510.2h5.3v14.7h-5.3zM2520.0 510.2h5.3v14.7h-5.3zM2525.3 510.2h5.3v14.7h-5.3zM2530.6 510.2h5.3v14.7h-5.3zM2557.1 510.2h5.3v14.7h-5.3zM2562.4 510.2h5.3v14.7h-5.3zM2619.6 510.2h5.4v14.7h-5.4zM2640.6 510.2h4.4v14.7h-4.4zM2645.0 510.2h5.7v14.7h-5.7zM2655.5 510.2h5.2v14.7h-5.2zM2696.6 510.2h4.8v14.7h-4.8zM2721.5 510.2h5.2v14.7h-5.2zM2731.4 510.2h4.8v14.7h-4.8zM2741.5 510.2h5.2v14.7h-5.2zM2814.5 510.2h5.0v14.7h-5.0zM2824.3 510.2h4.8v14.7h-4.8zM2829.1 510.2h4.8v14.7h-4.8zM2843.8 510.2h4.8v14.7h-4.8zM252.4 524.9h10.3v14.7h-10.3zM287.0 524.9h12.4v14.7h-12.4zM619.7 524.9h12.8v14.7h-12.8zM837.0 524.9h11.1v14.7h-11.1zM1021.6 524.9h10.3v14.7h-10.3zM1282.7 524.9h9.1v14.7h-9.1zM1300.9 524.9h9.1v14.7h-9.1zM1310.0 524.9h8.8v14.7h-8.8zM1552.8 524.9h8.1v14.7h-8.1zM1592.2 524.9h7.8v14.7h-7.8zM1600.0 524.9h7.8v14.7h-7.8zM1698.4 524.9h7.3v14.7h-7.3zM1735.0 524.9h7.3v14.7h-7.3zM1877.5 524.9h6.8v14.7h-6.8zM1925.2 524.9h6.8v14.7h-6.8zM1957.7 524.9h6.8v14.7h-6.8zM1977.6 524.9h6.6v14.7h-6.6zM2067.9 524.9h6.3v14.7h-6.3zM2167.3 524.9h6.1v14.7h-6.1zM2203.6 524.9h6.1v14.7h-6.1zM2298.0 524.9h5.8v14.7h-5.8zM2349.2 524.9h5.8v14.7h-5.8zM2377.4 524.9h5.5v14.7h-5.5zM2466.0 524.9h5.5v14.7h-5.5zM2476.8 524.9h5.5v14.7h-5.5zM2493.0 524.9h5.5v14.7h-5.5zM2630.3 524.9h5.2v14.7h-5.2zM2655.5 524.9h5.2v14.7h-5.2zM2706.2 524.9h5.4v14.7h-5.4z"/>
<path fill="#2f6d8e" d="M311.9 246.0h12.8v14.7h-12.8zM491.9 246.0h13.1v14.7h-13.1zM556.1 246.0h13.1v14.7h-13.1zM859.4 246.0h11.6v14.7h-11.6zM1237.1 246.0h9.3v14.7h-9.3zM1310.0 246.0h8.8v14.7h-8.8zM1335.6 246.0h8.8v14.7h-8.8zM1344.5 246.0h8.8v14.7h-8.8zM1463.8 246.0h8.3v14.7h-8.3zM1576.6 246.0h7.8v14.7h-7.8zM1638.4 246.0h7.6v14.7h-7.6zM1727.7 246.0h7.3v14.7h-7.3zM1821.5 246.0h7.1v14.7h-7.1zM1842.7 246.0h6.8v14.7h-6.8zM1870.5 246.0h7.1v14.7h-7.1zM1918.4 246.0h6.8v14.7h-6.8zM1938.6 246.0h6.8v14.7h-6.8zM1990.5 246.0h6.6v14.7h-6.6zM2048.7 246.0h6.6v14.7h-6.6zM2093.1 246.0h6.3v14.7h-6.3zM2191.5 246.0h6.1v14.7h-6.1zM2209.7 246.0h6.1v14.7h-6.1zM2221.8 246.0h5.8v14.7h-5.8zM2286.4 246.0h5.8v14.7h-5.8zM2332.5 246.0h5.5v14.7h-5.5zM2366.1 246.0h5.8v14.7h-5.8zM2405.2 246.0h5.5v14.7h-5.5zM2460.4 246.0h5.5v14.7h-5.5zM2498.5 246.0h5.3v14.7h-5.3zM2514.7 246.0h5.3v14.7h-5.3zM2525.3 246.0h5.3v14.7h-5.3zM2635.5 246.0h5.2v14.7h-5.2zM2686.5 246.0h4.4v14.7h-4.4zM2766.4 246.0h4.4v14.7h-4.4zM2785.5 246.0h5.2v14.7h-5.2zM2795.6 246.0h4.8v14.7h-4.8zM2819.5 246.0h4.8v14.7h-4.8zM439.7 260.7h13.1v14.7h-13.1zM491.9 260.7h13.1v14.7h-13.1zM517.8 260.7h12.8v14.7h-12.8zM607.3 260.7h12.4v14.7h-12.4zM619.7 260.7h12.8v14.7h-12.8zM730.8 260.7h11.6v14.7h-11.6zM767.1 260.7h12.1v14.7h-12.1zM1052.4 260.7h10.1v14.7h-10.1zM1092.8 260.7h10.1v14.7h-10.1zM1132.4 260.7h9.8v14.7h-9.8zM1190.2 260.7h9.6v14.7h-9.6zM1405.3 260.7h8.3v14.7h-8.3zM1480.4 260.7h8.1v14.7h-8.1zM1592.2 260.7h7.8v14.7h-7.8zM1990.5 260.7h6.6v14.7h-6.6zM2093.1 260.7h6.3v14.7h-6.3zM2130.7 260.7h6.1v14.7h-6.1zM2167.3 260.7h6.1v14.7h-6.1zM2185.5 260.7h6.1v14.7h-6.1zM2209.7 260.7h6.1v14.7h-6.1zM2239.4 260.7h6.1v14.7h-6.1zM2257.4 260.7h5.8v14.7h-5.8zM2269.0 260.7h5.8v14.7h-5.8zM2326.7 260.7h5.8v14.7h-5.8zM2343.6 260.7h5.5v14.7h-5.5zM2349.2 260.7h5.8v14.7h-5.8zM2355.0 260.7h5.5v14.7h-5.5zM2360.5 260.7h5.5v14.7h-5.5zM2388.5 260.7h5.5v14.7h-5.5zM2394.1 260.7h5.5v14.7h-5.5zM2416.3 260.7h5.5v14.7h-5.5zM2460.4 260.7h5.5v14.7h-5.5zM2466.0 260.7h5.5v14.7h-5.5zM2471.5 260.7h5.3v14.7h-5.3zM2594.4 260.7h5.2v14.7h-5.2zM2650.8 260.7h4.8v14.7h-4.8zM2671.8 260.7h3.8v14.7h-3.8zM2711.5 260.7h5.2v14.7h-5.2zM2716.7 260.7h4.8v14.7h-4.8zM2755.9 260.7h5.2v14.7h-5.2zM2761.0 260.7h5.4v14.7h-5.4zM2766.4 260.7h4.4v14.7h-4.4zM2838.6 260.7h5.2v14.7h-5.2zM2843.8 260.7h4.8v14.7h-4.8zM349.9 275.4h12.8v14.7h-12.8zM556.1 275.4h13.1v14.7h-13.1zM682.0 275.4h12.4v14.7h-12.4zM730.8 275.4h11.6v14.7h-11.6zM893.0 275.4h10.8v14.7h-10.8zM969.2 275.4h10.6v14.7h-10.6zM1011.0 275.4h10.6v14.7h-10.6zM1122.6 275.4h9.8v14.7h-9.8zM1161.7 275.4h9.6v14.7h-9.6zM1264.6 275.4h9.1v14.7h-9.1zM1318.8 275.4h8.2v14.7h-8.2zM1405.3 275.4h8.3v14.7h-8.3zM1421.9 275.4h8.6v14.7h-8.6zM1528.9 275.4h8.1v14.7h-8.1zM1576.6 275.4h7.8v14.7h-7.8zM1584.4 275.4h7.8v14.7h-7.8zM1607.8 275.4h7.6v14.7h-7.6zM1623.0 275.4h7.8v14.7h-7.8zM1668.6 275.4h7.3v14.7h-7.3zM1778.6 275.4h7.3v14.7h-7.3zM1800.3 275.4h7.1v14.7h-7.1zM1821.5 275.4h7.1v14.7h-7.1zM1863.6 275.4h6.8v14.7h-6.8zM1932.0 275.4h6.6v14.7h-6.6zM2029.8 275.4h6.3v14.7h-6.3zM2036.1 275.4h6.3v14.7h-6.3zM2055.3 275.4h6.3v14.7h-6.3zM2093.1 275.4h6.3v14.7h-6.3zM2105.7 275.4h6.3v14.7h-6.3zM2124.4 275.4h6.3v14.7h-6.3zM2173.4 275.4h6.1v14.7h-6.1zM2251.6 275.4h5.8v14.7h-5.8zM2257.4 275.4h5.8v14.7h-5.8zM2274.8 275.4h5.8v14.7h-5.8zM2332.5 275.4h5.5v14.7h-5.5zM2338.1 275.4h5.5v14.7h-5.5zM2343.6 275.4h5.5v14.7h-5.5zM2360.5 275.4h5.5v14.7h-5.5zM2471.5 275.4h5.3v14.7h-5.3zM2476.8 275.4h5.5v14.7h-5.5zM2546.5 275.4h5.3v14.7h-5.3zM2557.1 275.4h5.3v14.7h-5.3zM2630.3 275.4h5.2v14.7h-5.2zM2650.8 275.4h4.8v14.7h-4.8zM2660.7 275.4h5.4v14.7h-5.4zM2675.6 275.4h5.7v14.7h-5.7zM2690.9 275.4h5.7v14.7h-5.7zM2696.6 275.4h4.8v14.7h-4.8zM2701.4 275.4h4.8v14.7h-4.8zM2716.7 275.4h4.8v14.7h-4.8zM2721.5 275.4h5.2v14.7h-5.2zM2780.7 275.4h4.8v14.7h-4.8zM2785.5 275.4h5.2v14.7h-5.2zM2809.8 275.4h4.8v14.7h-4.8zM2838.6 275.4h5.2v14.7h-5.2zM274.8 290.0h12.1v14.7h-12.1zM287.0 290.0h12.4v14.7h-12.4zM349.9 290.0h12.8v14.7h-12.8zM466.0 290.0h12.8v14.7h-12.8zM594.5 290.0h12.8v14.7h-12.8zM990.4 290.0h10.3v14.7h-10.3zM1021.6 290.0h10.3v14.7h-10.3zM1122.6 290.0h9.8v14.7h-9.8zM1142.2 290.0h9.6v14.7h-9.6zM1190.2 290.0h9.6v14.7h-9.6zM1227.7 290.0h9.3v14.7h-9.3zM1318.8 290.0h8.2v14.7h-8.2zM1362.1 290.0h8.3v14.7h-8.3zM1405.3 290.0h8.3v14.7h-8.3zM1413.6 290.0h8.3v14.7h-8.3zM1447.4 290.0h8.3v14.7h-8.3zM1488.5 290.0h8.1v14.7h-8.1zM1537.0 290.0h7.8v14.7h-7.8zM1568.7 290.0h7.8v14.7h-7.8zM1592.2 290.0h7.8v14.7h-7.8zM1630.8 290.0h7.6v14.7h-7.6zM1638.4 290.0h7.6v14.7h-7.6zM1698.4 290.0h7.3v14.7h-7.3zM1764.2 290.0h7.3v14.7h-7.3zM1778.6 290.0h7.3v14.7h-7.3zM1807.4 290.0h7.1v14.7h-7.1zM1828.6 290.0h7.1v14.7h-7.1zM1911.6 290.0h6.8v14.7h-6.8zM1932.0 290.0h6.6v14.7h-6.6zM1971.0 290.0h6.6v14.7h-6.6zM1997.0 290.0h6.6v14.7h-6.6zM2029.8 290.0h6.3v14.7h-6.3zM2086.8 290.0h6.3v14.7h-6.3zM2185.5 290.0h6.1v14.7h-6.1zM2221.8 290.0h5.8v14.7h-5.8zM2399.6 290.0h5.5v14.7h-5.5zM2405.2 290.0h5.5v14.7h-5.5zM2410.7 290.0h5.5v14.7h-5.5zM2514.7 290.0h5.3v14.7h-5.3zM2520.0 290.0h5.3v14.7h-5.3zM2630.3 290.0h5.2v14.7h-5.2zM2640.6 290.0h4.4v14.7h-4.4zM2645.0 290.0h5.7v14.7h-5.7zM2690.9 290.0h5.7v14.7h-5.7zM2731.4 290.0h4.8v14.7h-4.8zM2751.7 290.0h4.2v14.7h-4.2zM324.6 304.7h12.8v14.7h-12.8zM374.8 304.7h13.5v14.7h-13.5zM466.0 304.7h12.8v14.7h-12.8zM594.5 304.7h12.8v14.7h-12.8zM837.0 304.7h11.1v14.7h-11.1zM936.6 304.7h11.1v14.7h-11.1zM958.6 304.7h10.6v14.7h-10.6zM1052.4 304.7h10.1v14.7h-10.1zM1102.9 304.7h9.8v14.7h-9.8zM1112.7 304.7h9.8v14.7h-9.8zM1142.2 304.7h9.6v14.7h-9.6zM1151.8 304.7h9.8v14.7h-9.8zM1218.4 304.7h9.3v14.7h-9.3zM1291.8 304.7h9.1v14.7h-9.1zM1318.8 304.7h8.2v14.7h-8.2zM1370.5 304.7h8.8v14.7h-8.8zM1447.4 304.7h8.3v14.7h-8.3zM1463.8 304.7h8.3v14.7h-8.3zM1504.7 304.7h8.1v14.7h-8.1zM1528.9 304.7h8.1v14.7h-8.1zM1544.8 304.7h8.1v14.7h-8.1zM1592.2 304.7h7.8v14.7h-7.8zM1727.7 304.7h7.3v14.7h-7.3zM1778.6 304.7h7.3v14.7h-7.3zM1828.6 304.7h7.1v14.7h-7.1zM1884.3 304.7h6.8v14.7h-6.8zM1938.6 304.7h6.8v14.7h-6.8zM2010.1 304.7h6.6v14.7h-6.6zM2029.8 304.7h6.3v14.7h-6.3zM2067.9 304.7h6.3v14.7h-6.3zM2093.1 304.7h6.3v14.7h-6.3zM2105.7 304.7h6.3v14.7h-6.3zM2118.4 304.7h6.1v14.7h-6.1zM2173.4 304.7h6.1v14.7h-6.1zM2209.7 304.7h6.1v14.7h-6.1zM2221.8 304.7h5.8v14.7h-5.8zM2245.5 304.7h6.1v14.7h-6.1zM2326.7 304.7h5.8v14.7h-5.8zM2360.5 304.7h5.5v14.7h-5.5zM2377.4 304.7h5.5v14.7h-5.5zM2514.7 304.7h5.3v14.7h-5.3zM2551.8 304.7h5.3v14.7h-5.3zM2588.7 304.7h5.7v14.7h-5.7zM2635.5 304.7h5.2v14.7h-5.2zM2660.7 304.7h5.4v14.7h-5.4zM2666.1 304.7h5.7v14.7h-5.7zM2671.8 304.7h3.8v14.7h-3.8zM2681.3 304.7h5.2v14.7h-5.2zM2696.6 304.7h4.8v14.7h-4.8zM2711.5 304.7h5.2v14.7h-5.2zM2843.8 304.7h3.2v14.7h-3.2zM274.8 319.4h12.1v14.7h-12.1zM349.9 319.4h12.8v14.7h-12.8zM530.6 319.4h12.8v14.7h-12.8zM790.8 319.4h11.6v14.7h-11.6zM881.6 319.4h11.4v14.7h-11.4zM914.9 319.4h10.8v14.7h-10.8zM947.7 319.4h10.8v14.7h-10.8zM1032.0 319.4h10.3v14.7h-10.3zM1042.3 319.4h10.1v14.7h-10.1zM1082.7 319.4h10.1v14.7h-10.1zM1246.4 319.4h9.3v14.7h-9.3zM1282.7 319.4h9.1v14.7h-9.1zM1291.8 319.4h9.1v14.7h-9.1zM1300.9 319.4h9.1v14.7h-9.1zM1310.0 319.4h8.8v14.7h-8.8zM1335.6 319.4h8.8v14.7h-8.8zM1447.4 319.4h8.3v14.7h-8.3zM1455.7 319.4h8.1v14.7h-8.1zM1480.4 319.4h8.1v14.7h-8.1zM1560.9 319.4h7.8v14.7h-7.8zM1584.4 319.4h7.8v14.7h-7.8zM1592.2 319.4h7.8v14.7h-7.8zM1607.8 319.4h7.6v14.7h-7.6zM1615.4 319.4h7.6v14.7h-7.6zM1623.0 319.4h7.8v14.7h-7.8zM1891.1 319.4h6.8v14.7h-6.8zM2029.8 319.4h6.3v14.7h-6.3zM2067.9 319.4h6.3v14.7h-6.3zM2093.1 319.4h6.3v14.7h-6.3zM2105.7 319.4h6.3v14.7h-6.3zM2149.1 319.4h6.1v14.7h-6.1zM2191.5 319.4h6.1v14.7h-6.1zM2203.6 319.4h6.1v14.7h-6.1zM2221.8 319.4h5.8v14.7h-5.8zM2251.6 319.4h5.8v14.7h-5.8zM2309.6 319.4h5.8v14.7h-5.8zM2427.4 319.4h5.5v14.7h-5.5zM2487.7 319.4h5.3v14.7h-5.3zM2520.0 319.4h5.3v14.7h-5.3zM2525.3 319.4h5.3v14.7h-5.3zM2530.6 319.4h5.3v14.7h-5.3zM2557.1 319.4h5.3v14.7h-5.3zM2604.5 319.4h5.2v14.7h-5.2zM2609.7 319.4h4.8v14.7h-4.8zM2619.6 319.4h5.4v14.7h-5.4zM2625.0 319.4h5.4v14.7h-5.4zM2681.3 319.4h5.2v14.7h-5.2zM2706.2 319.4h5.4v14.7h-5.4zM2711.5 319.4h5.2v14.7h-5.2zM2741.5 319.4h5.2v14.7h-5.2zM2746.7 319.4h5.0v14.7h-5.0zM2751.7 319.4h4.2v14.7h-4.2zM2805.2 319.4h4.6v14.7h-4.6zM2809.8 319.4h4.8v14.7h-4.8zM274.8 334.1h12.1v14.7h-12.1zM452.8 334.1h13.1v14.7h-13.1zM530.6 334.1h12.8v14.7h-12.8zM543.4 334.1h12.8v14.7h-12.8zM607.3 334.1h12.4v14.7h-12.4zM632.5 334.1h12.8v14.7h-12.8zM848.1 334.1h11.4v14.7h-11.4zM925.8 334.1h10.8v14.7h-10.8zM936.6 334.1h11.1v14.7h-11.1zM1072.6 334.1h10.1v14.7h-10.1zM1161.7 334.1h9.6v14.7h-9.6zM1282.7 334.1h9.1v14.7h-9.1zM1439.1 334.1h8.3v14.7h-8.3zM1463.8 334.1h8.3v14.7h-8.3zM1544.8 334.1h8.1v14.7h-8.1zM1600.0 334.1h7.8v14.7h-7.8zM1653.5 334.1h7.6v14.7h-7.6zM1849.5 334.1h7.1v14.7h-7.1zM1898.0 334.1h6.8v14.7h-6.8zM1938.6 334.1h6.8v14.7h-6.8zM1945.4 334.1h6.6v14.7h-6.6zM2042.4 334.1h6.3v14.7h-6.3zM2048.7 334.1h6.6v14.7h-6.6zM2093.1 334.1h6.3v14.7h-6.3zM2124.4 334.1h6.3v14.7h-6.3zM2149.1 334.1h6.1v14.7h-6.1zM2155.2 334.1h6.1v14.7h-6.1zM2209.7 334.1h6.1v14.7h-6.1zM2233.6 334.1h5.8v14.7h-5.8zM2245.5 334.1h6.1v14.7h-6.1zM2326.7 334.1h5.8v14.7h-5.8zM2332.5 334.1h5.5v14.7h-5.5zM2432.9 334.1h5.5v14.7h-5.5zM2476.8 334.1h5.5v14.7h-5.5zM2509.4 334.1h5.3v14.7h-5.3zM2530.6 334.1h5.3v14.7h-5.3zM2578.5 334.1h4.8v14.7h-4.8zM2594.4 334.1h5.2v14.7h-5.2zM2599.6 334.1h5.0v14.7h-5.0zM2604.5 334.1h5.2v14.7h-5.2zM2619.6 334.1h5.4v14.7h-5.4zM2625.0 334.1h5.4v14.7h-5.4zM2635.5 334.1h5.2v14.7h-5.2zM2645.0 334.1h5.7v14.7h-5.7zM2660.7 334.1h5.4v14.7h-5.4zM2671.8 334.1h3.8v14.7h-3.8zM2675.6 334.1h5.7v14.7h-5.7zM2686.5 334.1h4.4v14.7h-4.4zM2721.5 334.1h5.2v14.7h-5.2zM2751.7 334.1h4.2v14.7h-4.2zM2770.8 334.1h4.8v14.7h-4.8zM2775.6 334.1h5.2v14.7h-5.2zM2805.2 334.1h4.6v14.7h-4.6zM274.8 348.8h12.1v14.7h-12.1zM287.0 348.8h12.4v14.7h-12.4zM569.3 348.8h12.8v14.7h-12.8zM893.0 348.8h10.8v14.7h-10.8zM1000.7 348.8h10.3v14.7h-10.3zM1072.6 348.8h10.1v14.7h-10.1zM1142.2 348.8h9.6v14.7h-9.6zM1161.7 348.8h9.6v14.7h-9.6zM1218.4 348.8h9.3v14.7h-9.3zM1237.1 348.8h9.3v14.7h-9.3zM1472.1 348.8h8.3v14.7h-8.3zM1560.9 348.8h7.8v14.7h-7.8zM1645.9 348.8h7.6v14.7h-7.6zM1735.0 348.8h7.3v14.7h-7.3zM1785.9 348.8h7.1v14.7h-7.1zM1856.6 348.8h7.1v14.7h-7.1zM1870.5 348.8h7.1v14.7h-7.1zM1898.0 348.8h6.8v14.7h-6.8zM1932.0 348.8h6.6v14.7h-6.6zM1938.6 348.8h6.8v14.7h-6.8zM2099.4 348.8h6.3v14.7h-6.3zM2167.3 348.8h6.1v14.7h-6.1zM2185.5 348.8h6.1v14.7h-6.1zM2251.6 348.8h5.8v14.7h-5.8zM2274.8 348.8h5.8v14.7h-5.8zM2326.7 348.8h5.8v14.7h-5.8zM2388.5 348.8h5.5v14.7h-5.5zM2394.1 348.8h5.5v14.7h-5.5zM2427.4 348.8h5.5v14.7h-5.5zM2432.9 348.8h5.5v14.7h-5.5zM2471.5 348.8h5.3v14.7h-5.3zM2476.8 348.8h5.5v14.7h-5.5zM2509.4 348.8h5.3v14.7h-5.3zM2525.3 348.8h5.3v14.7h-5.3zM2546.5 348.8h5.3v14.7h-5.3zM2562.4 348.8h5.3v14.7h-5.3zM2567.6 348.8h5.4v14.7h-5.4zM2573.0 348.8h5.5v14.7h-5.5zM2578.5 348.8h4.8v14.7h-4.8zM2604.5 348.8h5.2v14.7h-5.2zM2630.3 348.8h5.2v14.7h-5.2zM2726.6 348.8h4.8v14.7h-4.8zM2741.5 348.8h5.2v14.7h-5.2zM2785.5 348.8h5.2v14.7h-5.2zM2795.6 348.8h4.8v14.7h-4.8zM2800.4 348.8h4.8v14.7h-4.8zM263.4 363.4h11.4v14.7h-11.4zM426.6 363.4h13.1v14.7h-13.1zM517.8 363.4h12.8v14.7h-12.8zM569.3 363.4h12.8v14.7h-12.8zM848.1 363.4h11.4v14.7h-11.4zM969.2 363.4h10.6v14.7h-10.6zM1072.6 363.4h10.1v14.7h-10.1zM1082.7 363.4h10.1v14.7h-10.1zM1282.7 363.4h9.1v14.7h-9.1zM1335.6 363.4h8.8v14.7h-8.8zM1353.3 363.4h8.8v14.7h-8.8zM1370.5 363.4h8.8v14.7h-8.8zM1413.6 363.4h8.3v14.7h-8.3zM1421.9 363.4h8.6v14.7h-8.6zM1430.5 363.4h8.6v14.7h-8.6zM1504.7 363.4h8.1v14.7h-8.1zM1520.8 363.4h8.1v14.7h-8.1zM1528.9 363.4h8.1v14.7h-8.1zM1560.9 363.4h7.8v14.7h-7.8zM1690.8 363.4h7.6v14.7h-7.6zM1698.4 363.4h7.3v14.7h-7.3zM1727.7 363.4h7.3v14.7h-7.3zM1749.6 363.4h7.3v14.7h-7.3zM1756.9 363.4h7.3v14.7h-7.3zM1793.0 363.4h7.3v14.7h-7.3zM1849.5 363.4h7.1v14.7h-7.1zM1898.0 363.4h6.8v14.7h-6.8zM1904.8 363.4h6.8v14.7h-6.8zM1911.6 363.4h6.8v14.7h-6.8zM1918.4 363.4h6.8v14.7h-6.8zM1951.9 363.4h5.7v14.7h-5.7zM1957.7 363.4h6.8v14.7h-6.8zM2029.8 363.4h6.3v14.7h-6.3zM2080.5 363.4h6.3v14.7h-6.3zM2215.7 363.4h6.1v14.7h-6.1zM2221.8 363.4h5.8v14.7h-5.8zM2227.6 363.4h6.1v14.7h-6.1zM2239.4 363.4h6.1v14.7h-6.1zM2257.4 363.4h5.8v14.7h-5.8zM2298.0 363.4h5.8v14.7h-5.8zM2309.6 363.4h5.8v14.7h-5.8zM2338.1 363.4h5.5v14.7h-5.5zM2355.0 363.4h5.5v14.7h-5.5zM2360.5 363.4h5.5v14.7h-5.5zM2371.9 363.4h5.5v14.7h-5.5zM2427.4 363.4h5.5v14.7h-5.5zM2476.8 363.4h5.5v14.7h-5.5zM2509.4 363.4h5.3v14.7h-5.3zM2520.0 363.4h5.3v14.7h-5.3zM2530.6 363.4h5.3v14.7h-5.3zM2599.6 363.4h5.0v14.7h-5.0zM2696.6 363.4h4.8v14.7h-4.8zM2721.5 363.4h5.2v14.7h-5.2zM2731.4 363.4h4.8v14.7h-4.8zM2829.1 363.4h4.8v14.7h-4.8zM287.0 378.1h12.4v14.7h-12.4zM299.4 378.1h12.4v14.7h-12.4zM324.6 378.1h12.8v14.7h-12.8zM452.8 378.1h13.1v14.7h-13.1zM491.9 378.1h13.1v14.7h-13.1zM530.6 378.1h12.8v14.7h-12.8zM543.4 378.1h12.8v14.7h-12.8zM582.0 378.1h12.4v14.7h-12.4zM594.5 378.1h12.8v14.7h-12.8zM742.4 378.1h12.4v14.7h-12.4zM947.7 378.1h10.8v14.7h-10.8zM1082.7 378.1h10.1v14.7h-10.1zM1209.1 378.1h9.3v14.7h-9.3zM1237.1 378.1h9.3v14.7h-9.3zM1472.1 378.1h8.3v14.7h-8.3zM1623.0 378.1h7.8v14.7h-7.8zM1713.0 378.1h7.3v14.7h-7.3zM1800.3 378.1h7.1v14.7h-7.1zM2010.1 378.1h6.6v14.7h-6.6zM2023.2 378.1h6.6v14.7h-6.6zM2029.8 378.1h6.3v14.7h-6.3zM2099.4 378.1h6.3v14.7h-6.3zM2112.0 378.1h6.3v14.7h-6.3zM2118.4 378.1h6.1v14.7h-6.1zM2161.2 378.1h6.1v14.7h-6.1zM2203.6 378.1h6.1v14.7h-6.1zM2239.4 378.1h6.1v14.7h-6.1zM2245.5 378.1h6.1v14.7h-6.1zM2263.2 378.1h5.8v14.7h-5.8zM2292.2 378.1h5.8v14.7h-5.8zM2298.0 378.1h5.8v14.7h-5.8zM2338.1 378.1h5.5v14.7h-5.5zM2349.2 378.1h5.8v14.7h-5.8zM2405.2 378.1h5.5v14.7h-5.5zM2432.9 378.1h5.5v14.7h-5.5zM2466.0 378.1h5.5v14.7h-5.5zM2471.5 378.1h5.3v14.7h-5.3zM2503.8 378.1h5.5v14.7h-5.5zM2520.0 378.1h5.3v14.7h-5.3zM2541.2 378.1h5.3v14.7h-5.3zM2630.3 378.1h5.2v14.7h-5.2zM2635.5 378.1h5.2v14.7h-5.2zM2650.8 378.1h4.8v14.7h-4.8zM2671.8 378.1h3.8v14.7h-3.8zM2675.6 378.1h5.7v14.7h-5.7zM2716.7 378.1h4.8v14.7h-4.8zM2736.2 378.1h5.4v14.7h-5.4zM2751.7 378.1h4.2v14.7h-4.2zM2775.6 378.1h5.2v14.7h-5.2zM2795.6 378.1h4.8v14.7h-4.8zM2838.6 378.1h5.2v14.7h-5.2zM2848.6 378.1h5.7v14.7h-5.7zM263.4 392.8h11.4v14.7h-11.4zM274.8 392.8h12.1v14.7h-12.1zM299.4 392.8h12.4v14.7h-12.4zM349.9 392.8h12.8v14.7h-12.8zM466.0 392.8h12.8v14.7h-12.8zM505.0 392.8h12.8v14.7h-12.8zM517.8 392.8h12.8v14.7h-12.8zM569.3 392.8h12.8v14.7h-12.8zM607.3 392.8h12.4v14.7h-12.4zM742.4 392.8h12.4v14.7h-12.4zM779.2 392.8h11.6v14.7h-11.6zM837.0 392.8h11.1v14.7h-11.1zM871.0 392.8h10.6v14.7h-10.6zM914.9 392.8h10.8v14.7h-10.8zM990.4 392.8h10.3v14.7h-10.3zM1092.8 392.8h10.1v14.7h-10.1zM1180.8 392.8h9.3v14.7h-9.3zM1255.8 392.8h8.8v14.7h-8.8zM1344.5 392.8h8.8v14.7h-8.8zM1362.1 392.8h8.3v14.7h-8.3zM1405.3 392.8h8.3v14.7h-8.3zM1421.9 392.8h8.6v14.7h-8.6zM1463.8 392.8h8.3v14.7h-8.3zM1472.1 392.8h8.3v14.7h-8.3zM1544.8 392.8h8.1v14.7h-8.1zM1568.7 392.8h7.8v14.7h-7.8zM1638.4 392.8h7.6v14.7h-7.6zM1676.0 392.8h7.6v14.7h-7.6zM1778.6 392.8h7.3v14.7h-7.3zM1835.6 392.8h7.1v14.7h-7.1zM1884.3 392.8h6.8v14.7h-6.8zM1904.8 392.8h6.8v14.7h-6.8zM1951.9 392.8h5.7v14.7h-5.7zM1971.0 392.8h6.6v14.7h-6.6zM1977.6 392.8h6.6v14.7h-6.6zM2003.6 392.8h6.6v14.7h-6.6zM2042.4 392.8h6.3v14.7h-6.3zM2074.2 392.8h6.3v14.7h-6.3zM2080.5 392.8h6.3v14.7h-6.3zM2093.1 392.8h6.3v14.7h-6.3zM2105.7 392.8h6.3v14.7h-6.3zM2112.0 392.8h6.3v14.7h-6.3zM2233.6 392.8h5.8v14.7h-5.8zM2274.8 392.8h5.8v14.7h-5.8zM2280.6 392.8h5.8v14.7h-5.8zM2292.2 392.8h5.8v14.7h-5.8zM2349.2 392.8h5.8v14.7h-5.8zM2421.8 392.8h5.5v14.7h-5.5zM2427.4 392.8h5.5v14.7h-5.5zM2455.1 392.8h5.3v14.7h-5.3zM2487.7 392.8h5.3v14.7h-5.3zM2520.0 392.8h5.3v14.7h-5.3zM2525.3 392.8h5.3v14.7h-5.3zM2530.6 392.8h5.3v14.7h-5.3zM2535.9 392.8h5.3v14.7h-5.3zM2588.7 392.8h5.7v14.7h-5.7zM2660.7 392.8h5.4v14.7h-5.4zM2666.1 392.8h5.7v14.7h-5.7zM2681.3 392.8h5.2v14.7h-5.2zM2726.6 392.8h4.8v14.7h-4.8zM2800.4 392.8h4.8v14.7h-4.8zM2819.5 392.8h4.8v14.7h-4.8zM2838.6 392.8h5.2v14.7h-5.2zM767.1 407.5h12.1v14.7h-12.1zM802.4 407.5h11.6v14.7h-11.6zM871.0 407.5h10.6v14.7h-10.6zM903.8 407.5h11.1v14.7h-11.1zM914.9 407.5h10.8v14.7h-10.8zM947.7 407.5h10.8v14.7h-10.8zM958.6 407.5h10.6v14.7h-10.6zM969.2 407.5h10.6v14.7h-10.6zM1000.7 407.5h10.3v14.7h-10.3zM1310.0 407.5h8.8v14.7h-8.8zM1318.8 407.5h8.2v14.7h-8.2zM1421.9 407.5h8.6v14.7h-8.6zM1455.7 407.5h8.1v14.7h-8.1zM1512.7 407.5h8.1v14.7h-8.1zM1544.8 407.5h8.1v14.7h-8.1zM1778.6 407.5h7.3v14.7h-7.3zM1800.3 407.5h7.1v14.7h-7.1zM1821.5 407.5h7.1v14.7h-7.1zM1884.3 407.5h6.8v14.7h-6.8zM1891.1 407.5h6.8v14.7h-6.8zM1904.8 407.5h6.8v14.7h-6.8zM1918.4 407.5h6.8v14.7h-6.8zM1945.4 407.5h6.6v14.7h-6.6zM1951.9 407.5h5.7v14.7h-5.7zM2023.2 407.5h6.6v14.7h-6.6zM2036.1 407.5h6.3v14.7h-6.3zM2048.7 407.5h6.6v14.7h-6.6zM2061.6 407.5h6.3v14.7h-6.3zM2067.9 407.5h6.3v14.7h-6.3zM2099.4 407.5h6.3v14.7h-6.3zM2161.2 407.5h6.1v14.7h-6.1zM2167.3 407.5h6.1v14.7h-6.1zM2185.5 407.5h6.1v14.7h-6.1zM2215.7 407.5h6.1v14.7h-6.1zM2245.5 407.5h6.1v14.7h-6.1zM2349.2 407.5h5.8v14.7h-5.8zM2416.3 407.5h5.5v14.7h-5.5zM2438.5 407.5h5.5v14.7h-5.5zM2471.5 407.5h5.3v14.7h-5.3zM2482.4 407.5h5.3v14.7h-5.3zM2514.7 407.5h5.3v14.7h-5.3zM2525.3 407.5h5.3v14.7h-5.3zM2546.5 407.5h5.3v14.7h-5.3zM2573.0 407.5h5.5v14.7h-5.5zM2594.4 407.5h5.2v14.7h-5.2zM2614.5 407.5h5.2v14.7h-5.2zM2686.5 407.5h4.4v14.7h-4.4zM2696.6 407.5h4.8v14.7h-4.8zM252.4 422.2h10.3v14.7h-10.3zM299.4 422.2h12.4v14.7h-12.4zM362.7 422.2h12.1v14.7h-12.1zM754.7 422.2h12.4v14.7h-12.4zM837.0 422.2h11.1v14.7h-11.1zM925.8 422.2h10.8v14.7h-10.8zM990.4 422.2h10.3v14.7h-10.3zM1318.8 422.2h8.2v14.7h-8.2zM1353.3 422.2h8.8v14.7h-8.8zM1405.3 422.2h8.3v14.7h-8.3zM1430.5 422.2h8.6v14.7h-8.6zM1439.1 422.2h8.3v14.7h-8.3zM1463.8 422.2h8.3v14.7h-8.3zM1496.6 422.2h8.1v14.7h-8.1zM1584.4 422.2h7.8v14.7h-7.8zM1727.7 422.2h7.3v14.7h-7.3zM1814.5 422.2h7.1v14.7h-7.1zM1821.5 422.2h7.1v14.7h-7.1zM1856.6 422.2h7.1v14.7h-7.1zM1891.1 422.2h6.8v14.7h-6.8zM1911.6 422.2h6.8v14.7h-6.8zM1945.4 422.2h6.6v14.7h-6.6zM1984.1 422.2h6.3v14.7h-6.3zM2023.2 422.2h6.6v14.7h-6.6zM2029.8 422.2h6.3v14.7h-6.3zM2061.6 422.2h6.3v14.7h-6.3zM2067.9 422.2h6.3v14.7h-6.3zM2099.4 422.2h6.3v14.7h-6.3zM2143.1 422.2h6.1v14.7h-6.1zM2173.4 422.2h6.1v14.7h-6.1zM2179.4 422.2h6.1v14.7h-6.1zM2203.6 422.2h6.1v14.7h-6.1zM2303.8 422.2h5.8v14.7h-5.8zM2349.2 422.2h5.8v14.7h-5.8zM2360.5 422.2h5.5v14.7h-5.5zM2383.0 422.2h5.5v14.7h-5.5zM2427.4 422.2h5.5v14.7h-5.5zM2476.8 422.2h5.5v14.7h-5.5zM2482.4 422.2h5.3v14.7h-5.3zM2520.0 422.2h5.3v14.7h-5.3zM2551.8 422.2h5.3v14.7h-5.3zM2557.1 422.2h5.3v14.7h-5.3zM2640.6 422.2h4.4v14.7h-4.4zM2681.3 422.2h5.2v14.7h-5.2zM2686.5 422.2h4.4v14.7h-4.4zM2721.5 422.2h5.2v14.7h-5.2zM2755.9 422.2h5.2v14.7h-5.2zM2838.6 422.2h5.2v14.7h-5.2zM374.8 436.8h13.5v14.7h-13.5zM478.7 436.8h13.1v14.7h-13.1zM491.9 436.8h13.1v14.7h-13.1zM619.7 436.8h12.8v14.7h-12.8zM632.5 436.8h12.8v14.7h-12.8zM1021.6 436.8h10.3v14.7h-10.3zM1161.7 436.8h9.6v14.7h-9.6zM1180.8 436.8h9.3v14.7h-9.3zM1255.8 436.8h8.8v14.7h-8.8zM1291.8 436.8h9.1v14.7h-9.1zM1327.1 436.8h8.6v14.7h-8.6zM1430.5 436.8h8.6v14.7h-8.6zM1480.4 436.8h8.1v14.7h-8.1zM1568.7 436.8h7.8v14.7h-7.8zM1713.0 436.8h7.3v14.7h-7.3zM1735.0 436.8h7.3v14.7h-7.3zM1785.9 436.8h7.1v14.7h-7.1zM1814.5 436.8h7.1v14.7h-7.1zM1842.7 436.8h6.8v14.7h-6.8zM1911.6 436.8h6.8v14.7h-6.8zM1951.9 436.8h5.7v14.7h-5.7zM1977.6 436.8h6.6v14.7h-6.6zM2003.6 436.8h6.6v14.7h-6.6zM2010.1 436.8h6.6v14.7h-6.6zM2016.7 436.8h6.6v14.7h-6.6zM2086.8 436.8h6.3v14.7h-6.3zM2136.8 436.8h6.3v14.7h-6.3zM2161.2 436.8h6.1v14.7h-6.1zM2280.6 436.8h5.8v14.7h-5.8zM2394.1 436.8h5.5v14.7h-5.5zM2405.2 436.8h5.5v14.7h-5.5zM2438.5 436.8h5.5v14.7h-5.5zM2449.6 436.8h5.5v14.7h-5.5zM2455.1 436.8h5.3v14.7h-5.3zM2503.8 436.8h5.5v14.7h-5.5zM2514.7 436.8h5.3v14.7h-5.3zM2562.4 436.8h5.3v14.7h-5.3zM2567.6 436.8h5.4v14.7h-5.4zM2594.4 436.8h5.2v14.7h-5.2zM2599.6 436.8h5.0v14.7h-5.0zM2625.0 436.8h5.4v14.7h-5.4zM2630.3 436.8h5.2v14.7h-5.2zM2635.5 436.8h5.2v14.7h-5.2zM2645.0 436.8h5.7v14.7h-5.7zM2660.7 436.8h5.4v14.7h-5.4zM2666.1 436.8h5.7v14.7h-5.7zM2721.5 436.8h5.2v14.7h-5.2zM2731.4 436.8h4.8v14.7h-4.8zM2770.8 436.8h4.8v14.7h-4.8zM2800.4 436.8h4.8v14.7h-4.8zM2809.8 436.8h4.8v14.7h-4.8zM2814.5 436.8h5.0v14.7h-5.0zM2819.5 436.8h4.8v14.7h-4.8zM2843.8 436.8h4.8v14.7h-4.8zM2854.3 436.8h4.4v14.7h-4.4zM274.8 451.5h12.1v14.7h-12.1zM388.2 451.5h12.8v14.7h-12.8zM401.0 451.5h13.1v14.7h-13.1zM730.8 451.5h11.6v14.7h-11.6zM754.7 451.5h12.4v14.7h-12.4zM790.8 451.5h11.6v14.7h-11.6zM979.8 451.5h10.6v14.7h-10.6zM1011.0 451.5h10.6v14.7h-10.6zM1171.2 451.5h9.6v14.7h-9.6zM1246.4 451.5h9.3v14.7h-9.3zM1282.7 451.5h9.1v14.7h-9.1zM1335.6 451.5h8.8v14.7h-8.8zM1430.5 451.5h8.6v14.7h-8.6zM1439.1 451.5h8.3v14.7h-8.3zM1528.9 451.5h8.1v14.7h-8.1zM1537.0 451.5h7.8v14.7h-7.8zM1552.8 451.5h8.1v14.7h-8.1zM1623.0 451.5h7.8v14.7h-7.8zM1645.9 451.5h7.6v14.7h-7.6zM1749.6 451.5h7.3v14.7h-7.3zM1778.6 451.5h7.3v14.7h-7.3zM1814.5 451.5h7.1v14.7h-7.1zM1842.7 451.5h6.8v14.7h-6.8zM1877.5 451.5h6.8v14.7h-6.8zM1884.3 451.5h6.8v14.7h-6.8zM2010.1 451.5h6.6v14.7h-6.6zM2086.8 451.5h6.3v14.7h-6.3zM2093.1 451.5h6.3v14.7h-6.3zM2099.4 451.5h6.3v14.7h-6.3zM2143.1 451.5h6.1v14.7h-6.1zM2149.1 451.5h6.1v14.7h-6.1zM2155.2 451.5h6.1v14.7h-6.1zM2179.4 451.5h6.1v14.7h-6.1zM2191.5 451.5h6.1v14.7h-6.1zM2197.6 451.5h6.1v14.7h-6.1zM2203.6 451.5h6.1v14.7h-6.1zM2209.7 451.5h6.1v14.7h-6.1zM2257.4 451.5h5.8v14.7h-5.8zM2263.2 451.5h5.8v14.7h-5.8zM2280.6 451.5h5.8v14.7h-5.8zM2286.4 451.5h5.8v14.7h-5.8zM2303.8 451.5h5.8v14.7h-5.8zM2315.4 451.5h5.8v14.7h-5.8zM2332.5 451.5h5.5v14.7h-5.5zM2366.1 451.5h5.8v14.7h-5.8zM2394.1 451.5h5.5v14.7h-5.5zM2471.5 451.5h5.3v14.7h-5.3zM2530.6 451.5h5.3v14.7h-5.3zM2567.6 451.5h5.4v14.7h-5.4zM2711.5 451.5h5.2v14.7h-5.2zM2755.9 451.5h5.2v14.7h-5.2zM2848.6 451.5h5.7v14.7h-5.7zM349.9 466.2h12.8v14.7h-12.8zM414.1 466.2h12.4v14.7h-12.4zM452.8 466.2h13.1v14.7h-13.1zM491.9 466.2h13.1v14.7h-13.1zM619.7 466.2h12.8v14.7h-12.8zM705.5 466.2h13.1v14.7h-13.1zM754.7 466.2h12.4v14.7h-12.4zM893.0 466.2h10.8v14.7h-10.8zM1327.1 466.2h8.6v14.7h-8.6zM1413.6 466.2h8.3v14.7h-8.3zM1472.1 466.2h8.3v14.7h-8.3zM1496.6 466.2h8.1v14.7h-8.1zM1504.7 466.2h8.1v14.7h-8.1zM1528.9 466.2h8.1v14.7h-8.1zM1544.8 466.2h8.1v14.7h-8.1zM1568.7 466.2h7.8v14.7h-7.8zM1600.0 466.2h7.8v14.7h-7.8zM1676.0 466.2h7.6v14.7h-7.6zM1713.0 466.2h7.3v14.7h-7.3zM1720.4 466.2h7.3v14.7h-7.3zM1742.3 466.2h7.3v14.7h-7.3zM1749.6 466.2h7.3v14.7h-7.3zM1884.3 466.2h6.8v14.7h-6.8zM1904.8 466.2h6.8v14.7h-6.8zM1964.5 466.2h6.6v14.7h-6.6zM2029.8 466.2h6.3v14.7h-6.3zM2048.7 466.2h6.6v14.7h-6.6zM2093.1 466.2h6.3v14.7h-6.3zM2179.4 466.2h6.1v14.7h-6.1zM2185.5 466.2h6.1v14.7h-6.1zM2203.6 466.2h6.1v14.7h-6.1zM2233.6 466.2h5.8v14.7h-5.8zM2274.8 466.2h5.8v14.7h-5.8zM2280.6 466.2h5.8v14.7h-5.8zM2286.4 466.2h5.8v14.7h-5.8zM2292.2 466.2h5.8v14.7h-5.8zM2377.4 466.2h5.5v14.7h-5.5zM2383.0 466.2h5.5v14.7h-5.5zM2388.5 466.2h5.5v14.7h-5.5zM2427.4 466.2h5.5v14.7h-5.5zM2476.8 466.2h5.5v14.7h-5.5zM2487.7 466.2h5.3v14.7h-5.3zM2588.7 466.2h5.7v14.7h-5.7zM2609.7 466.2h4.8v14.7h-4.8zM2635.5 466.2h5.2v14.7h-5.2zM2655.5 466.2h5.2v14.7h-5.2zM2660.7 466.2h5.4v14.7h-5.4zM2701.4 466.2h4.8v14.7h-4.8zM2746.7 466.2h5.0v14.7h-5.0zM2751.7 466.2h4.2v14.7h-4.2zM2770.8 466.2h4.8v14.7h-4.8zM2814.5 466.2h5.0v14.7h-5.0zM466.0 480.9h12.8v14.7h-12.8zM491.9 480.9h13.1v14.7h-13.1zM543.4 480.9h12.8v14.7h-12.8zM682.0 480.9h12.4v14.7h-12.4zM742.4 480.9h12.4v14.7h-12.4zM779.2 480.9h11.6v14.7h-11.6zM903.8 480.9h11.1v14.7h-11.1zM1011.0 480.9h10.6v14.7h-10.6zM1032.0 480.9h10.3v14.7h-10.3zM1052.4 480.9h10.1v14.7h-10.1zM1122.6 480.9h9.8v14.7h-9.8zM1300.9 480.9h9.1v14.7h-9.1zM1353.3 480.9h8.8v14.7h-8.8zM1520.8 480.9h8.1v14.7h-8.1zM1552.8 480.9h8.1v14.7h-8.1zM1568.7 480.9h7.8v14.7h-7.8zM1592.2 480.9h7.8v14.7h-7.8zM1600.0 480.9h7.8v14.7h-7.8zM1623.0 480.9h7.8v14.7h-7.8zM1630.8 480.9h7.6v14.7h-7.6zM1638.4 480.9h7.6v14.7h-7.6zM1713.0 480.9h7.3v14.7h-7.3zM1764.2 480.9h7.3v14.7h-7.3zM1807.4 480.9h7.1v14.7h-7.1zM1877.5 480.9h6.8v14.7h-6.8zM1911.6 480.9h6.8v14.7h-6.8zM1918.4 480.9h6.8v14.7h-6.8zM1964.5 480.9h6.6v14.7h-6.6zM1990.5 480.9h6.6v14.7h-6.6zM1997.0 480.9h6.6v14.7h-6.6zM2061.6 480.9h6.3v14.7h-6.3zM2067.9 480.9h6.3v14.7h-6.3zM2118.4 480.9h6.1v14.7h-6.1zM2167.3 480.9h6.1v14.7h-6.1zM2173.4 480.9h6.1v14.7h-6.1zM2197.6 480.9h6.1v14.7h-6.1zM2269.0 480.9h5.8v14.7h-5.8zM2309.6 480.9h5.8v14.7h-5.8zM2349.2 480.9h5.8v14.7h-5.8zM2366.1 480.9h5.8v14.7h-5.8zM2371.9 480.9h5.5v14.7h-5.5zM2421.8 480.9h5.5v14.7h-5.5zM2438.5 480.9h5.5v14.7h-5.5zM2449.6 480.9h5.5v14.7h-5.5zM2541.2 480.9h5.3v14.7h-5.3zM2630.3 480.9h5.2v14.7h-5.2zM2660.7 480.9h5.4v14.7h-5.4zM2671.8 480.9h3.8v14.7h-3.8zM2736.2 480.9h5.4v14.7h-5.4zM2746.7 480.9h5.0v14.7h-5.0zM2795.6 480.9h4.8v14.7h-4.8zM2809.8 480.9h4.8v14.7h-4.8zM287.0 495.6h12.4v14.7h-12.4zM401.0 495.6h13.1v14.7h-13.1zM466.0 495.6h12.8v14.7h-12.8zM543.4 495.6h12.8v14.7h-12.8zM632.5 495.6h12.8v14.7h-12.8zM742.4 495.6h12.4v14.7h-12.4zM779.2 495.6h11.6v14.7h-11.6zM848.1 495.6h11.4v14.7h-11.4zM859.4 495.6h11.6v14.7h-11.6zM881.6 495.6h11.4v14.7h-11.4zM903.8 495.6h11.1v14.7h-11.1zM990.4 495.6h10.3v14.7h-10.3zM1122.6 495.6h9.8v14.7h-9.8zM1161.7 495.6h9.6v14.7h-9.6zM1199.7 495.6h9.3v14.7h-9.3zM1237.1 495.6h9.3v14.7h-9.3zM1246.4 495.6h9.3v14.7h-9.3zM1353.3 495.6h8.8v14.7h-8.8zM1396.7 495.6h8.6v14.7h-8.6zM1568.7 495.6h7.8v14.7h-7.8zM1653.5 495.6h7.6v14.7h-7.6zM1661.1 495.6h7.6v14.7h-7.6zM1690.8 495.6h7.6v14.7h-7.6zM1720.4 495.6h7.3v14.7h-7.3zM1778.6 495.6h7.3v14.7h-7.3zM1807.4 495.6h7.1v14.7h-7.1zM1842.7 495.6h6.8v14.7h-6.8zM1849.5 495.6h7.1v14.7h-7.1zM1977.6 495.6h6.6v14.7h-6.6zM1984.1 495.6h6.3v14.7h-6.3zM2003.6 495.6h6.6v14.7h-6.6zM2055.3 495.6h6.3v14.7h-6.3zM2067.9 495.6h6.3v14.7h-6.3zM2143.1 495.6h6.1v14.7h-6.1zM2179.4 495.6h6.1v14.7h-6.1zM2245.5 495.6h6.1v14.7h-6.1zM2298.0 495.6h5.8v14.7h-5.8zM2332.5 495.6h5.5v14.7h-5.5zM2349.2 495.6h5.8v14.7h-5.8zM2355.0 495.6h5.5v14.7h-5.5zM2455.1 495.6h5.3v14.7h-5.3zM2482.4 495.6h5.3v14.7h-5.3zM2487.7 495.6h5.3v14.7h-5.3zM2493.0 495.6h5.5v14.7h-5.5zM2573.0 495.6h5.5v14.7h-5.5zM2619.6 495.6h5.4v14.7h-5.4zM2640.6 495.6h4.4v14.7h-4.4zM2645.0 495.6h5.7v14.7h-5.7zM2675.6 495.6h5.7v14.7h-5.7zM2716.7 495.6h4.8v14.7h-4.8zM2746.7 495.6h5.0v14.7h-5.0zM2780.7 495.6h4.8v14.7h-4.8zM2785.5 495.6h5.2v14.7h-5.2zM2790.7 495.6h5.0v14.7h-5.0zM2824.3 495.6h4.8v14.7h-4.8zM252.4 510.2h10.3v14.7h-10.3zM362.7 510.2h12.1v14.7h-12.1zM374.8 510.2h13.5v14.7h-13.5zM478.7 510.2h13.1v14.7h-13.1zM619.7 510.2h12.8v14.7h-12.8zM682.0 510.2h12.4v14.7h-12.4zM848.1 510.2h11.4v14.7h-11.4zM871.0 510.2h10.6v14.7h-10.6zM969.2 510.2h10.6v14.7h-10.6zM1092.8 510.2h10.1v14.7h-10.1zM1362.1 510.2h8.3v14.7h-8.3zM1439.1 510.2h8.3v14.7h-8.3zM1447.4 510.2h8.3v14.7h-8.3zM1472.1 510.2h8.3v14.7h-8.3zM1504.7 510.2h8.1v14.7h-8.1zM1653.5 510.2h7.6v14.7h-7.6zM1713.0 510.2h7.3v14.7h-7.3zM1785.9 510.2h7.1v14.7h-7.1zM1828.6 510.2h7.1v14.7h-7.1zM1938.6 510.2h6.8v14.7h-6.8zM2042.4 510.2h6.3v14.7h-6.3zM2105.7 510.2h6.3v14.7h-6.3zM2149.1 510.2h6.1v14.7h-6.1zM2269.0 510.2h5.8v14.7h-5.8zM2280.6 510.2h5.8v14.7h-5.8zM2321.2 510.2h5.5v14.7h-5.5zM2326.7 510.2h5.8v14.7h-5.8zM2355.0 510.2h5.5v14.7h-5.5zM2399.6 510.2h5.5v14.7h-5.5zM2427.4 510.2h5.5v14.7h-5.5zM2541.2 510.2h5.3v14.7h-5.3zM2551.8 510.2h5.3v14.7h-5.3zM2583.3 510.2h5.4v14.7h-5.4zM2588.7 510.2h5.7v14.7h-5.7zM2594.4 510.2h5.2v14.7h-5.2zM2604.5 510.2h5.2v14.7h-5.2zM2625.0 510.2h5.4v14.7h-5.4zM2785.5 510.2h5.2v14.7h-5.2zM2805.2 510.2h4.6v14.7h-4.6zM2819.5 510.2h4.8v14.7h-4.8zM2854.3 510.2h4.4v14.7h-4.4zM274.8 524.9h12.1v14.7h-12.1zM349.9 524.9h12.8v14.7h-12.8zM582.0 524.9h12.4v14.7h-12.4zM914.9 524.9h10.8v14.7h-10.8zM1062.5 524.9h10.1v14.7h-10.1zM1353.3 524.9h8.8v14.7h-8.8zM1388.1 524.9h8.6v14.7h-8.6zM1455.7 524.9h8.1v14.7h-8.1zM1488.5 524.9h8.1v14.7h-8.1zM1630.8 524.9h7.6v14.7h-7.6zM1676.0 524.9h7.6v14.7h-7.6zM1727.7 524.9h7.3v14.7h-7.3zM1749.6 524.9h7.3v14.7h-7.3zM1835.6 524.9h7.1v14.7h-7.1zM1891.1 524.9h6.8v14.7h-6.8zM2105.7 524.9h6.3v14.7h-6.3zM2179.4 524.9h6.1v14.7h-6.1zM2394.1 524.9h5.5v14.7h-5.5zM2405.2 524.9h5.5v14.7h-5.5zM2421.8 524.9h5.5v14.7h-5.5zM2427.4 524.9h5.5v14.7h-5.5zM2471.5 524.9h5.3v14.7h-5.3zM2557.1 524.9h5.3v14.7h-5.3zM2609.7 524.9h4.8v14.7h-4.8zM2619.6 524.9h5.4v14.7h-5.4zM2635.5 524.9h5.2v14.7h-5.2zM2721.5 524.9h5.2v14.7h-5.2zM2741.5 524.9h5.2v14.7h-5.2zM2775.6 524.9h5.2v14.7h-5.2zM2790.7 524.9h5.0v14.7h-5.0zM2795.6 524.9h4.8v14.7h-4.8zM2824.3 524.9h4.8v14.7h-4.8zM2829.1 524.9h4.8v14.7h-4.8zM2843.8 524.9h4.8v14.7h-4.8z"/>
<path fill="#2d728e" d="M324.6 246.0h12.8v14.7h-12.8zM478.7 246.0h13.1v14.7h-13.1zM569.3 246.0h12.8v14.7h-12.8zM594.5 246.0h12.8v14.7h-12.8zM682.0 246.0h12.4v14.7h-12.4zM730.8 246.0h11.6v14.7h-11.6zM1042.3 246.0h10.1v14.7h-10.1zM1092.8 246.0h10.1v14.7h-10.1zM1151.8 246.0h9.8v14.7h-9.8zM1528.9 246.0h8.1v14.7h-8.1zM1653.5 246.0h7.6v14.7h-7.6zM1661.1 246.0h7.6v14.7h-7.6zM1676.0 246.0h7.6v14.7h-7.6zM1683.5 246.0h7.3v14.7h-7.3zM1690.8 246.0h7.6v14.7h-7.6zM1771.6 246.0h7.1v14.7h-7.1zM2010.1 246.0h6.6v14.7h-6.6zM2074.2 246.0h6.3v14.7h-6.3zM2130.7 246.0h6.1v14.7h-6.1zM2155.2 246.0h6.1v14.7h-6.1zM2239.4 246.0h6.1v14.7h-6.1zM2349.2 246.0h5.8v14.7h-5.8zM2449.6 246.0h5.5v14.7h-5.5zM2476.8 246.0h5.5v14.7h-5.5zM2551.8 246.0h5.3v14.7h-5.3zM2619.6 246.0h5.4v14.7h-5.4zM2696.6 246.0h4.8v14.7h-4.8zM2716.7 246.0h4.8v14.7h-4.8zM2721.5 246.0h5.2v14.7h-5.2zM2726.6 246.0h4.8v14.7h-4.8zM2731.4 246.0h4.8v14.7h-4.8zM2746.7 246.0h5.0v14.7h-5.0zM2790.7 246.0h5.0v14.7h-5.0zM2824.3 246.0h4.8v14.7h-4.8zM274.8 260.7h12.1v14.7h-12.1zM362.7 260.7h12.1v14.7h-12.1zM401.0 260.7h13.1v14.7h-13.1zM466.0 260.7h12.8v14.7h-12.8zM979.8 260.7h10.6v14.7h-10.6zM1021.6 260.7h10.3v14.7h-10.3zM1227.7 260.7h9.3v14.7h-9.3zM1318.8 260.7h8.2v14.7h-8.2zM1370.5 260.7h8.8v14.7h-8.8zM1455.7 260.7h8.1v14.7h-8.1zM1472.1 260.7h8.3v14.7h-8.3zM1661.1 260.7h7.6v14.7h-7.6zM1713.0 260.7h7.3v14.7h-7.3zM1814.5 260.7h7.1v14.7h-7.1zM2048.7 260.7h6.6v14.7h-6.6zM2080.5 260.7h6.3v14.7h-6.3zM2086.8 260.7h6.3v14.7h-6.3zM2173.4 260.7h6.1v14.7h-6.1zM2191.5 260.7h6.1v14.7h-6.1zM2215.7 260.7h6.1v14.7h-6.1zM2274.8 260.7h5.8v14.7h-5.8zM2427.4 260.7h5.5v14.7h-5.5zM2546.5 260.7h5.3v14.7h-5.3zM2604.5 260.7h5.2v14.7h-5.2zM2609.7 260.7h4.8v14.7h-4.8zM2614.5 260.7h5.2v14.7h-5.2zM2635.5 260.7h5.2v14.7h-5.2zM2681.3 260.7h5.2v14.7h-5.2zM2696.6 260.7h4.8v14.7h-4.8zM2736.2 260.7h5.4v14.7h-5.4zM299.4 275.4h12.4v14.7h-12.4zM388.2 275.4h12.8v14.7h-12.8zM871.0 275.4h10.6v14.7h-10.6zM990.4 275.4h10.3v14.7h-10.3zM1000.7 275.4h10.3v14.7h-10.3zM1092.8 275.4h10.1v14.7h-10.1zM1180.8 275.4h9.3v14.7h-9.3zM1199.7 275.4h9.3v14.7h-9.3zM1209.1 275.4h9.3v14.7h-9.3zM1227.7 275.4h9.3v14.7h-9.3zM1246.4 275.4h9.3v14.7h-9.3zM1282.7 275.4h9.1v14.7h-9.1zM1300.9 275.4h9.1v14.7h-9.1zM1310.0 275.4h8.8v14.7h-8.8zM1335.6 275.4h8.8v14.7h-8.8zM1370.5 275.4h8.8v14.7h-8.8zM1455.7 275.4h8.1v14.7h-8.1zM1537.0 275.4h7.8v14.7h-7.8zM1592.2 275.4h7.8v14.7h-7.8zM1600.0 275.4h7.8v14.7h-7.8zM1698.4 275.4h7.3v14.7h-7.3zM1749.6 275.4h7.3v14.7h-7.3zM1764.2 275.4h7.3v14.7h-7.3zM1793.0 275.4h7.3v14.7h-7.3zM1814.5 275.4h7.1v14.7h-7.1zM1884.3 275.4h6.8v14.7h-6.8zM2023.2 275.4h6.6v14.7h-6.6zM2099.4 275.4h6.3v14.7h-6.3zM2130.7 275.4h6.1v14.7h-6.1zM2161.2 275.4h6.1v14.7h-6.1zM2263.2 275.4h5.8v14.7h-5.8zM2269.0 275.4h5.8v14.7h-5.8zM2298.0 275.4h5.8v14.7h-5.8zM2321.2 275.4h5.5v14.7h-5.5zM2349.2 275.4h5.8v14.7h-5.8zM2355.0 275.4h5.5v14.7h-5.5zM2562.4 275.4h5.3v14.7h-5.3zM2614.5 275.4h5.2v14.7h-5.2zM2619.6 275.4h5.4v14.7h-5.4zM2666.1 275.4h5.7v14.7h-5.7zM2671.8 275.4h3.8v14.7h-3.8zM2706.2 275.4h5.4v14.7h-5.4zM2736.2 275.4h5.4v14.7h-5.4zM2790.7 275.4h5.0v14.7h-5.0zM2833.8 275.4h4.8v14.7h-4.8zM388.2 290.0h12.8v14.7h-12.8zM491.9 290.0h13.1v14.7h-13.1zM657.4 290.0h12.8v14.7h-12.8zM814.0 290.0h11.4v14.7h-11.4zM825.4 290.0h11.6v14.7h-11.6zM914.9 290.0h10.8v14.7h-10.8zM958.6 290.0h10.6v14.7h-10.6zM1052.4 290.0h10.1v14.7h-10.1zM1092.8 290.0h10.1v14.7h-10.1zM1151.8 290.0h9.8v14.7h-9.8zM1199.7 290.0h9.3v14.7h-9.3zM1237.1 290.0h9.3v14.7h-9.3zM1528.9 290.0h8.1v14.7h-8.1zM1560.9 290.0h7.8v14.7h-7.8zM1668.6 290.0h7.3v14.7h-7.3zM1800.3 290.0h7.1v14.7h-7.1zM1964.5 290.0h6.6v14.7h-6.6zM2055.3 290.0h6.3v14.7h-6.3zM2093.1 290.0h6.3v14.7h-6.3zM2112.0 290.0h6.3v14.7h-6.3zM2118.4 290.0h6.1v14.7h-6.1zM2149.1 290.0h6.1v14.7h-6.1zM2245.5 290.0h6.1v14.7h-6.1zM2257.4 290.0h5.8v14.7h-5.8zM2286.4 290.0h5.8v14.7h-5.8zM2326.7 290.0h5.8v14.7h-5.8zM2460.4 290.0h5.5v14.7h-5.5zM2525.3 290.0h5.3v14.7h-5.3zM2635.5 290.0h5.2v14.7h-5.2zM2671.8 290.0h3.8v14.7h-3.8zM2726.6 290.0h4.8v14.7h-4.8zM2838.6 290.0h5.2v14.7h-5.2zM263.4 304.7h11.4v14.7h-11.4zM530.6 304.7h12.8v14.7h-12.8zM569.3 304.7h12.8v14.7h-12.8zM582.0 304.7h12.4v14.7h-12.4zM632.5 304.7h12.8v14.7h-12.8zM705.5 304.7h13.1v14.7h-13.1zM825.4 304.7h11.6v14.7h-11.6zM925.8 304.7h10.8v14.7h-10.8zM969.2 304.7h10.6v14.7h-10.6zM1011.0 304.7h10.6v14.7h-10.6zM1021.6 304.7h10.3v14.7h-10.3zM1032.0 304.7h10.3v14.7h-10.3zM1042.3 304.7h10.1v14.7h-10.1zM1246.4 304.7h9.3v14.7h-9.3zM1353.3 304.7h8.8v14.7h-8.8zM1413.6 304.7h8.3v14.7h-8.3zM1560.9 304.7h7.8v14.7h-7.8zM1668.6 304.7h7.3v14.7h-7.3zM1800.3 304.7h7.1v14.7h-7.1zM1814.5 304.7h7.1v14.7h-7.1zM1835.6 304.7h7.1v14.7h-7.1zM1856.6 304.7h7.1v14.7h-7.1zM1904.8 304.7h6.8v14.7h-6.8zM1911.6 304.7h6.8v14.7h-6.8zM1918.4 304.7h6.8v14.7h-6.8zM2048.7 304.7h6.6v14.7h-6.6zM2149.1 304.7h6.1v14.7h-6.1zM2227.6 304.7h6.1v14.7h-6.1zM2251.6 304.7h5.8v14.7h-5.8zM2383.0 304.7h5.5v14.7h-5.5zM2394.1 304.7h5.5v14.7h-5.5zM2405.2 304.7h5.5v14.7h-5.5zM2438.5 304.7h5.5v14.7h-5.5zM2455.1 304.7h5.3v14.7h-5.3zM2640.6 304.7h4.4v14.7h-4.4zM2655.5 304.7h5.2v14.7h-5.2zM2701.4 304.7h4.8v14.7h-4.8zM2731.4 304.7h4.8v14.7h-4.8zM2746.7 304.7h5.0v14.7h-5.0zM2755.9 304.7h5.2v14.7h-5.2zM2785.5 304.7h5.2v14.7h-5.2zM311.9 319.4h12.8v14.7h-12.8zM569.3 319.4h12.8v14.7h-12.8zM594.5 319.4h12.8v14.7h-12.8zM925.8 319.4h10.8v14.7h-10.8zM958.6 319.4h10.6v14.7h-10.6zM1062.5 319.4h10.1v14.7h-10.1zM1102.9 319.4h9.8v14.7h-9.8zM1112.7 319.4h9.8v14.7h-9.8zM1199.7 319.4h9.3v14.7h-9.3zM1218.4 319.4h9.3v14.7h-9.3zM1237.1 319.4h9.3v14.7h-9.3zM1362.1 319.4h8.3v14.7h-8.3zM1370.5 319.4h8.8v14.7h-8.8zM1421.9 319.4h8.6v14.7h-8.6zM1528.9 319.4h8.1v14.7h-8.1zM1544.8 319.4h8.1v14.7h-8.1zM1552.8 319.4h8.1v14.7h-8.1zM1653.5 319.4h7.6v14.7h-7.6zM1705.7 319.4h7.3v14.7h-7.3zM1821.5 319.4h7.1v14.7h-7.1zM1849.5 319.4h7.1v14.7h-7.1zM1911.6 319.4h6.8v14.7h-6.8zM2003.6 319.4h6.6v14.7h-6.6zM2010.1 319.4h6.6v14.7h-6.6zM2023.2 319.4h6.6v14.7h-6.6zM2136.8 319.4h6.3v14.7h-6.3zM2245.5 319.4h6.1v14.7h-6.1zM2332.5 319.4h5.5v14.7h-5.5zM2438.5 319.4h5.5v14.7h-5.5zM2546.5 319.4h5.3v14.7h-5.3zM2578.5 319.4h4.8v14.7h-4.8zM2630.3 319.4h5.2v14.7h-5.2zM2726.6 319.4h4.8v14.7h-4.8zM2736.2 319.4h5.4v14.7h-5.4zM2755.9 319.4h5.2v14.7h-5.2zM2761.0 319.4h5.4v14.7h-5.4zM2790.7 319.4h5.0v14.7h-5.0zM2824.3 319.4h4.8v14.7h-4.8zM2829.1 319.4h4.8v14.7h-4.8zM362.7 334.1h12.1v14.7h-12.1zM374.8 334.1h13.5v14.7h-13.5zM645.3 334.1h12.1v14.7h-12.1zM730.8 334.1h11.6v14.7h-11.6zM790.8 334.1h11.6v14.7h-11.6zM802.4 334.1h11.6v14.7h-11.6zM814.0 334.1h11.4v14.7h-11.4zM903.8 334.1h11.1v14.7h-11.1zM1142.2 334.1h9.6v14.7h-9.6zM1151.8 334.1h9.8v14.7h-9.8zM1218.4 334.1h9.3v14.7h-9.3zM1227.7 334.1h9.3v14.7h-9.3zM1264.6 334.1h9.1v14.7h-9.1zM1335.6 334.1h8.8v14.7h-8.8zM1430.5 334.1h8.6v14.7h-8.6zM1607.8 334.1h7.6v14.7h-7.6zM1749.6 334.1h7.3v14.7h-7.3zM1778.6 334.1h7.3v14.7h-7.3zM1785.9 334.1h7.1v14.7h-7.1zM1800.3 334.1h7.1v14.7h-7.1zM1814.5 334.1h7.1v14.7h-7.1zM2036.1 334.1h6.3v14.7h-6.3zM2179.4 334.1h6.1v14.7h-6.1zM2185.5 334.1h6.1v14.7h-6.1zM2221.8 334.1h5.8v14.7h-5.8zM2239.4 334.1h6.1v14.7h-6.1zM2251.6 334.1h5.8v14.7h-5.8zM2292.2 334.1h5.8v14.7h-5.8zM2309.6 334.1h5.8v14.7h-5.8zM2416.3 334.1h5.5v14.7h-5.5zM2444.0 334.1h5.5v14.7h-5.5zM2498.5 334.1h5.3v14.7h-5.3zM2562.4 334.1h5.3v14.7h-5.3zM2573.0 334.1h5.5v14.7h-5.5zM2614.5 334.1h5.2v14.7h-5.2zM2640.6 334.1h4.4v14.7h-4.4zM2655.5 334.1h5.2v14.7h-5.2zM2666.1 334.1h5.7v14.7h-5.7zM2731.4 334.1h4.8v14.7h-4.8zM2746.7 334.1h5.0v14.7h-5.0zM2766.4 334.1h4.4v14.7h-4.4zM2819.5 334.1h4.8v14.7h-4.8zM349.9 348.8h12.8v14.7h-12.8zM491.9 348.8h13.1v14.7h-13.1zM530.6 348.8h12.8v14.7h-12.8zM619.7 348.8h12.8v14.7h-12.8zM682.0 348.8h12.4v14.7h-12.4zM871.0 348.8h10.6v14.7h-10.6zM881.6 348.8h11.4v14.7h-11.4zM1112.7 348.8h9.8v14.7h-9.8zM1132.4 348.8h9.8v14.7h-9.8zM1255.8 348.8h8.8v14.7h-8.8zM1439.1 348.8h8.3v14.7h-8.3zM1447.4 348.8h8.3v14.7h-8.3zM1544.8 348.8h8.1v14.7h-8.1zM1600.0 348.8h7.8v14.7h-7.8zM1705.7 348.8h7.3v14.7h-7.3zM1713.0 348.8h7.3v14.7h-7.3zM1756.9 348.8h7.3v14.7h-7.3zM1793.0 348.8h7.3v14.7h-7.3zM1835.6 348.8h7.1v14.7h-7.1zM1842.7 348.8h6.8v14.7h-6.8zM1863.6 348.8h6.8v14.7h-6.8zM1945.4 348.8h6.6v14.7h-6.6zM1957.7 348.8h6.8v14.7h-6.8zM2003.6 348.8h6.6v14.7h-6.6zM2203.6 348.8h6.1v14.7h-6.1zM2209.7 348.8h6.1v14.7h-6.1zM2215.7 348.8h6.1v14.7h-6.1zM2221.8 348.8h5.8v14.7h-5.8zM2239.4 348.8h6.1v14.7h-6.1zM2245.5 348.8h6.1v14.7h-6.1zM2257.4 348.8h5.8v14.7h-5.8zM2315.4 348.8h5.8v14.7h-5.8zM2332.5 348.8h5.5v14.7h-5.5zM2349.2 348.8h5.8v14.7h-5.8zM2355.0 348.8h5.5v14.7h-5.5zM2377.4 348.8h5.5v14.7h-5.5zM2405.2 348.8h5.5v14.7h-5.5zM2416.3 348.8h5.5v14.7h-5.5zM2482.4 348.8h5.3v14.7h-5.3zM2498.5 348.8h5.3v14.7h-5.3zM2530.6 348.8h5.3v14.7h-5.3zM2535.9 348.8h5.3v14.7h-5.3zM2541.2 348.8h5.3v14.7h-5.3zM2609.7 348.8h4.8v14.7h-4.8zM2645.0 348.8h5.7v14.7h-5.7zM2809.8 348.8h4.8v14.7h-4.8zM2824.3 348.8h4.8v14.7h-4.8zM324.6 363.4h12.8v14.7h-12.8zM632.5 363.4h12.8v14.7h-12.8zM718.7 363.4h12.1v14.7h-12.1zM742.4 363.4h12.4v14.7h-12.4zM825.4 363.4h11.6v14.7h-11.6zM925.8 363.4h10.8v14.7h-10.8zM1011.0 363.4h10.6v14.7h-10.6zM1092.8 363.4h10.1v14.7h-10.1zM1161.7 363.4h9.6v14.7h-9.6zM1180.8 363.4h9.3v14.7h-9.3zM1190.2 363.4h9.6v14.7h-9.6zM1227.7 363.4h9.3v14.7h-9.3zM1327.1 363.4h8.6v14.7h-8.6zM1439.1 363.4h8.3v14.7h-8.3zM1496.6 363.4h8.1v14.7h-8.1zM1537.0 363.4h7.8v14.7h-7.8zM1544.8 363.4h8.1v14.7h-8.1zM1630.8 363.4h7.6v14.7h-7.6zM1638.4 363.4h7.6v14.7h-7.6zM1653.5 363.4h7.6v14.7h-7.6zM1764.2 363.4h7.3v14.7h-7.3zM1778.6 363.4h7.3v14.7h-7.3zM1842.7 363.4h6.8v14.7h-6.8zM1870.5 363.4h7.1v14.7h-7.1zM1984.1 363.4h6.3v14.7h-6.3zM2105.7 363.4h6.3v14.7h-6.3zM2233.6 363.4h5.8v14.7h-5.8zM2274.8 363.4h5.8v14.7h-5.8zM2292.2 363.4h5.8v14.7h-5.8zM2383.0 363.4h5.5v14.7h-5.5zM2399.6 363.4h5.5v14.7h-5.5zM2455.1 363.4h5.3v14.7h-5.3zM2487.7 363.4h5.3v14.7h-5.3zM2535.9 363.4h5.3v14.7h-5.3zM2604.5 363.4h5.2v14.7h-5.2zM2645.0 363.4h5.7v14.7h-5.7zM2706.2 363.4h5.4v14.7h-5.4zM2726.6 363.4h4.8v14.7h-4.8zM2790.7 363.4h5.0v14.7h-5.0zM2819.5 363.4h4.8v14.7h-4.8zM814.0 378.1h11.4v14.7h-11.4zM837.0 378.1h11.1v14.7h-11.1zM848.1 378.1h11.4v14.7h-11.4zM859.4 378.1h11.6v14.7h-11.6zM925.8 378.1h10.8v14.7h-10.8zM958.6 378.1h10.6v14.7h-10.6zM1011.0 378.1h10.6v14.7h-10.6zM1161.7 378.1h9.6v14.7h-9.6zM1190.2 378.1h9.6v14.7h-9.6zM1199.7 378.1h9.3v14.7h-9.3zM1421.9 378.1h8.6v14.7h-8.6zM1496.6 378.1h8.1v14.7h-8.1zM1504.7 378.1h8.1v14.7h-8.1zM1552.8 378.1h8.1v14.7h-8.1zM1607.8 378.1h7.6v14.7h-7.6zM1735.0 378.1h7.3v14.7h-7.3zM1835.6 378.1h7.1v14.7h-7.1zM1842.7 378.1h6.8v14.7h-6.8zM1957.7 378.1h6.8v14.7h-6.8zM2093.1 378.1h6.3v14.7h-6.3zM2124.4 378.1h6.3v14.7h-6.3zM2155.2 378.1h6.1v14.7h-6.1zM2167.3 378.1h6.1v14.7h-6.1zM2185.5 378.1h6.1v14.7h-6.1zM2197.6 378.1h6.1v14.7h-6.1zM2227.6 378.1h6.1v14.7h-6.1zM2233.6 378.1h5.8v14.7h-5.8zM2269.0 378.1h5.8v14.7h-5.8zM2274.8 378.1h5.8v14.7h-5.8zM2286.4 378.1h5.8v14.7h-5.8zM2303.8 378.1h5.8v14.7h-5.8zM2394.1 378.1h5.5v14.7h-5.5zM2427.4 378.1h5.5v14.7h-5.5zM2438.5 378.1h5.5v14.7h-5.5zM2444.0 378.1h5.5v14.7h-5.5zM2509.4 378.1h5.3v14.7h-5.3zM2525.3 378.1h5.3v14.7h-5.3zM2609.7 378.1h4.8v14.7h-4.8zM2614.5 378.1h5.2v14.7h-5.2zM2619.6 378.1h5.4v14.7h-5.4zM2625.0 378.1h5.4v14.7h-5.4zM2645.0 378.1h5.7v14.7h-5.7zM2726.6 378.1h4.8v14.7h-4.8zM2731.4 378.1h4.8v14.7h-4.8zM2766.4 378.1h4.4v14.7h-4.4zM2785.5 378.1h5.2v14.7h-5.2zM2790.7 378.1h5.0v14.7h-5.0zM2843.8 378.1h4.8v14.7h-4.8zM362.7 392.8h12.1v14.7h-12.1zM530.6 392.8h12.8v14.7h-12.8zM670.2 392.8h11.8v14.7h-11.8zM802.4 392.8h11.6v14.7h-11.6zM903.8 392.8h11.1v14.7h-11.1zM936.6 392.8h11.1v14.7h-11.1zM1171.2 392.8h9.6v14.7h-9.6zM1246.4 392.8h9.3v14.7h-9.3zM1310.0 392.8h8.8v14.7h-8.8zM1318.8 392.8h8.2v14.7h-8.2zM1335.6 392.8h8.8v14.7h-8.8zM1528.9 392.8h8.1v14.7h-8.1zM1623.0 392.8h7.8v14.7h-7.8zM1742.3 392.8h7.3v14.7h-7.3zM1807.4 392.8h7.1v14.7h-7.1zM1814.5 392.8h7.1v14.7h-7.1zM1891.1 392.8h6.8v14.7h-6.8zM1898.0 392.8h6.8v14.7h-6.8zM2010.1 392.8h6.6v14.7h-6.6zM2118.4 392.8h6.1v14.7h-6.1zM2124.4 392.8h6.3v14.7h-6.3zM2130.7 392.8h6.1v14.7h-6.1zM2338.1 392.8h5.5v14.7h-5.5zM2343.6 392.8h5.5v14.7h-5.5zM2476.8 392.8h5.5v14.7h-5.5zM2573.0 392.8h5.5v14.7h-5.5zM2604.5 392.8h5.2v14.7h-5.2zM2640.6 392.8h4.4v14.7h-4.4zM2706.2 392.8h5.4v14.7h-5.4zM2721.5 392.8h5.2v14.7h-5.2zM2795.6 392.8h4.8v14.7h-4.8zM2814.5 392.8h5.0v14.7h-5.0zM262.7 407.5h12.1v14.7h-12.1zM388.2 407.5h12.8v14.7h-12.8zM426.6 407.5h13.1v14.7h-13.1zM1082.7 407.5h10.1v14.7h-10.1zM1092.8 407.5h10.1v14.7h-10.1zM1255.8 407.5h8.8v14.7h-8.8zM1264.6 407.5h9.1v14.7h-9.1zM1300.9 407.5h9.1v14.7h-9.1zM1327.1 407.5h8.6v14.7h-8.6zM1362.1 407.5h8.3v14.7h-8.3zM1405.3 407.5h8.3v14.7h-8.3zM1413.6 407.5h8.3v14.7h-8.3zM1439.1 407.5h8.3v14.7h-8.3zM1447.4 407.5h8.3v14.7h-8.3zM1537.0 407.5h7.8v14.7h-7.8zM1552.8 407.5h8.1v14.7h-8.1zM1638.4 407.5h7.6v14.7h-7.6zM1676.0 407.5h7.6v14.7h-7.6zM1735.0 407.5h7.3v14.7h-7.3zM1877.5 407.5h6.8v14.7h-6.8zM1911.6 407.5h6.8v14.7h-6.8zM2029.8 407.5h6.3v14.7h-6.3zM2124.4 407.5h6.3v14.7h-6.3zM2143.1 407.5h6.1v14.7h-6.1zM2149.1 407.5h6.1v14.7h-6.1zM2209.7 407.5h6.1v14.7h-6.1zM2338.1 407.5h5.5v14.7h-5.5zM2343.6 407.5h5.5v14.7h-5.5zM2394.1 407.5h5.5v14.7h-5.5zM2399.6 407.5h5.5v14.7h-5.5zM2405.2 407.5h5.5v14.7h-5.5zM2530.6 407.5h5.3v14.7h-5.3zM2541.2 407.5h5.3v14.7h-5.3zM2583.3 407.5h5.4v14.7h-5.4zM2604.5 407.5h5.2v14.7h-5.2zM2619.6 407.5h5.4v14.7h-5.4zM2650.8 407.5h4.8v14.7h-4.8zM2655.5 407.5h5.2v14.7h-5.2zM2681.3 407.5h5.2v14.7h-5.2zM2690.9 407.5h5.7v14.7h-5.7zM2766.4 407.5h4.4v14.7h-4.4zM2829.1 407.5h4.8v14.7h-4.8zM2843.8 407.5h4.8v14.7h-4.8zM2848.6 407.5h5.7v14.7h-5.7zM478.7 422.2h13.1v14.7h-13.1zM582.0 422.2h12.4v14.7h-12.4zM594.5 422.2h12.8v14.7h-12.8zM859.4 422.2h11.6v14.7h-11.6zM1021.6 422.2h10.3v14.7h-10.3zM1246.4 422.2h9.3v14.7h-9.3zM1264.6 422.2h9.1v14.7h-9.1zM1537.0 422.2h7.8v14.7h-7.8zM1630.8 422.2h7.6v14.7h-7.6zM1645.9 422.2h7.6v14.7h-7.6zM1742.3 422.2h7.3v14.7h-7.3zM1778.6 422.2h7.3v14.7h-7.3zM1898.0 422.2h6.8v14.7h-6.8zM2055.3 422.2h6.3v14.7h-6.3zM2086.8 422.2h6.3v14.7h-6.3zM2093.1 422.2h6.3v14.7h-6.3zM2280.6 422.2h5.8v14.7h-5.8zM2321.2 422.2h5.5v14.7h-5.5zM2355.0 422.2h5.5v14.7h-5.5zM2366.1 422.2h5.8v14.7h-5.8zM2371.9 422.2h5.5v14.7h-5.5zM2399.6 422.2h5.5v14.7h-5.5zM2432.9 422.2h5.5v14.7h-5.5zM2546.5 422.2h5.3v14.7h-5.3zM2594.4 422.2h5.2v14.7h-5.2zM2770.8 422.2h4.8v14.7h-4.8zM2809.8 422.2h4.8v14.7h-4.8zM2833.8 422.2h4.8v14.7h-4.8zM414.1 436.8h12.4v14.7h-12.4zM814.0 436.8h11.4v14.7h-11.4zM881.6 436.8h11.4v14.7h-11.4zM893.0 436.8h10.8v14.7h-10.8zM903.8 436.8h11.1v14.7h-11.1zM1032.0 436.8h10.3v14.7h-10.3zM1072.6 436.8h10.1v14.7h-10.1zM1082.7 436.8h10.1v14.7h-10.1zM1209.1 436.8h9.3v14.7h-9.3zM1273.7 436.8h9.1v14.7h-9.1zM1488.5 436.8h8.1v14.7h-8.1zM1496.6 436.8h8.1v14.7h-8.1zM1537.0 436.8h7.8v14.7h-7.8zM1544.8 436.8h8.1v14.7h-8.1zM1698.4 436.8h7.3v14.7h-7.3zM2023.2 436.8h6.6v14.7h-6.6zM2061.6 436.8h6.3v14.7h-6.3zM2093.1 436.8h6.3v14.7h-6.3zM2321.2 436.8h5.5v14.7h-5.5zM2421.8 436.8h5.5v14.7h-5.5zM2432.9 436.8h5.5v14.7h-5.5zM2471.5 436.8h5.3v14.7h-5.3zM2546.5 436.8h5.3v14.7h-5.3zM2551.8 436.8h5.3v14.7h-5.3zM2557.1 436.8h5.3v14.7h-5.3zM2619.6 436.8h5.4v14.7h-5.4zM2640.6 436.8h4.4v14.7h-4.4zM2696.6 436.8h4.8v14.7h-4.8zM2726.6 436.8h4.8v14.7h-4.8zM2755.9 436.8h5.2v14.7h-5.2zM2761.0 436.8h5.4v14.7h-5.4zM2775.6 436.8h5.2v14.7h-5.2zM2838.6 436.8h5.2v14.7h-5.2zM324.6 451.5h12.8v14.7h-12.8zM374.8 451.5h13.5v14.7h-13.5zM530.6 451.5h12.8v14.7h-12.8zM582.0 451.5h12.4v14.7h-12.4zM925.8 451.5h10.8v14.7h-10.8zM990.4 451.5h10.3v14.7h-10.3zM1032.0 451.5h10.3v14.7h-10.3zM1122.6 451.5h9.8v14.7h-9.8zM1237.1 451.5h9.3v14.7h-9.3zM1310.0 451.5h8.8v14.7h-8.8zM1318.8 451.5h8.2v14.7h-8.2zM1568.7 451.5h7.8v14.7h-7.8zM1668.6 451.5h7.3v14.7h-7.3zM1676.0 451.5h7.6v14.7h-7.6zM1683.5 451.5h7.3v14.7h-7.3zM1705.7 451.5h7.3v14.7h-7.3zM1938.6 451.5h6.8v14.7h-6.8zM1945.4 451.5h6.6v14.7h-6.6zM1971.0 451.5h6.6v14.7h-6.6zM2003.6 451.5h6.6v14.7h-6.6zM2105.7 451.5h6.3v14.7h-6.3zM2112.0 451.5h6.3v14.7h-6.3zM2399.6 451.5h5.5v14.7h-5.5zM2438.5 451.5h5.5v14.7h-5.5zM2444.0 451.5h5.5v14.7h-5.5zM2455.1 451.5h5.3v14.7h-5.3zM2487.7 451.5h5.3v14.7h-5.3zM2520.0 451.5h5.3v14.7h-5.3zM2525.3 451.5h5.3v14.7h-5.3zM2588.7 451.5h5.7v14.7h-5.7zM2594.4 451.5h5.2v14.7h-5.2zM2690.9 451.5h5.7v14.7h-5.7zM2746.7 451.5h5.0v14.7h-5.0zM2770.8 451.5h4.8v14.7h-4.8zM2805.2 451.5h4.6v14.7h-4.6zM2843.8 451.5h4.8v14.7h-4.8zM262.7 466.2h12.1v14.7h-12.1zM543.4 466.2h12.8v14.7h-12.8zM742.4 466.2h12.4v14.7h-12.4zM903.8 466.2h11.1v14.7h-11.1zM990.4 466.2h10.3v14.7h-10.3zM1011.0 466.2h10.6v14.7h-10.6zM1032.0 466.2h10.3v14.7h-10.3zM1218.4 466.2h9.3v14.7h-9.3zM1227.7 466.2h9.3v14.7h-9.3zM1282.7 466.2h9.1v14.7h-9.1zM1396.7 466.2h8.6v14.7h-8.6zM1512.7 466.2h8.1v14.7h-8.1zM1552.8 466.2h8.1v14.7h-8.1zM1560.9 466.2h7.8v14.7h-7.8zM1623.0 466.2h7.8v14.7h-7.8zM1793.0 466.2h7.3v14.7h-7.3zM1891.1 466.2h6.8v14.7h-6.8zM2055.3 466.2h6.3v14.7h-6.3zM2105.7 466.2h6.3v14.7h-6.3zM2118.4 466.2h6.1v14.7h-6.1zM2239.4 466.2h6.1v14.7h-6.1zM2269.0 466.2h5.8v14.7h-5.8zM2303.8 466.2h5.8v14.7h-5.8zM2309.6 466.2h5.8v14.7h-5.8zM2315.4 466.2h5.8v14.7h-5.8zM2438.5 466.2h5.5v14.7h-5.5zM2444.0 466.2h5.5v14.7h-5.5zM2460.4 466.2h5.5v14.7h-5.5zM2466.0 466.2h5.5v14.7h-5.5zM2471.5 466.2h5.3v14.7h-5.3zM2482.4 466.2h5.3v14.7h-5.3zM2671.8 466.2h3.8v14.7h-3.8zM2696.6 466.2h4.8v14.7h-4.8zM2726.6 466.2h4.8v14.7h-4.8zM2731.4 466.2h4.8v14.7h-4.8zM2790.7 466.2h5.0v14.7h-5.0zM262.7 480.9h12.1v14.7h-12.1zM414.1 480.9h12.4v14.7h-12.4zM645.3 480.9h12.1v14.7h-12.1zM730.8 480.9h11.6v14.7h-11.6zM990.4 480.9h10.3v14.7h-10.3zM1000.7 480.9h10.3v14.7h-10.3zM1021.6 480.9h10.3v14.7h-10.3zM1112.7 480.9h9.8v14.7h-9.8zM1190.2 480.9h9.6v14.7h-9.6zM1199.7 480.9h9.3v14.7h-9.3zM1264.6 480.9h9.1v14.7h-9.1zM1528.9 480.9h8.1v14.7h-8.1zM1607.8 480.9h7.6v14.7h-7.6zM1793.0 480.9h7.3v14.7h-7.3zM1925.2 480.9h6.8v14.7h-6.8zM1945.4 480.9h6.6v14.7h-6.6zM2010.1 480.9h6.6v14.7h-6.6zM2042.4 480.9h6.3v14.7h-6.3zM2093.1 480.9h6.3v14.7h-6.3zM2179.4 480.9h6.1v14.7h-6.1zM2263.2 480.9h5.8v14.7h-5.8zM2286.4 480.9h5.8v14.7h-5.8zM2394.1 480.9h5.5v14.7h-5.5zM2444.0 480.9h5.5v14.7h-5.5zM2460.4 480.9h5.5v14.7h-5.5zM2471.5 480.9h5.3v14.7h-5.3zM2604.5 480.9h5.2v14.7h-5.2zM2716.7 480.9h4.8v14.7h-4.8zM2741.5 480.9h5.2v14.7h-5.2zM2766.4 480.9h4.4v14.7h-4.4zM2790.7 480.9h5.0v14.7h-5.0zM426.6 495.6h13.1v14.7h-13.1zM582.0 495.6h12.4v14.7h-12.4zM657.4 495.6h12.8v14.7h-12.8zM825.4 495.6h11.6v14.7h-11.6zM969.2 495.6h10.6v14.7h-10.6zM1112.7 495.6h9.8v14.7h-9.8zM1447.4 495.6h8.3v14.7h-8.3zM1512.7 495.6h8.1v14.7h-8.1zM1607.8 495.6h7.6v14.7h-7.6zM1713.0 495.6h7.3v14.7h-7.3zM1764.2 495.6h7.3v14.7h-7.3zM1884.3 495.6h6.8v14.7h-6.8zM1945.4 495.6h6.6v14.7h-6.6zM1951.9 495.6h5.7v14.7h-5.7zM2036.1 495.6h6.3v14.7h-6.3zM2074.2 495.6h6.3v14.7h-6.3zM2155.2 495.6h6.1v14.7h-6.1zM2161.2 495.6h6.1v14.7h-6.1zM2173.4 495.6h6.1v14.7h-6.1zM2215.7 495.6h6.1v14.7h-6.1zM2227.6 495.6h6.1v14.7h-6.1zM2233.6 495.6h5.8v14.7h-5.8zM2239.4 495.6h6.1v14.7h-6.1zM2338.1 495.6h5.5v14.7h-5.5zM2343.6 495.6h5.5v14.7h-5.5zM2525.3 495.6h5.3v14.7h-5.3zM2541.2 495.6h5.3v14.7h-5.3zM2594.4 495.6h5.2v14.7h-5.2zM2604.5 495.6h5.2v14.7h-5.2zM2671.8 495.6h3.8v14.7h-3.8zM2681.3 495.6h5.2v14.7h-5.2zM2701.4 495.6h4.8v14.7h-4.8zM2726.6 495.6h4.8v14.7h-4.8zM2751.7 495.6h4.2v14.7h-4.2zM2829.1 495.6h4.8v14.7h-4.8zM2854.3 495.6h4.4v14.7h-4.4zM426.6 510.2h13.1v14.7h-13.1zM582.0 510.2h12.4v14.7h-12.4zM657.4 510.2h12.8v14.7h-12.8zM767.1 510.2h12.1v14.7h-12.1zM1161.7 510.2h9.6v14.7h-9.6zM1180.8 510.2h9.3v14.7h-9.3zM1209.1 510.2h9.3v14.7h-9.3zM1282.7 510.2h9.1v14.7h-9.1zM1480.4 510.2h8.1v14.7h-8.1zM1528.9 510.2h8.1v14.7h-8.1zM1544.8 510.2h8.1v14.7h-8.1zM1720.4 510.2h7.3v14.7h-7.3zM1807.4 510.2h7.1v14.7h-7.1zM1877.5 510.2h6.8v14.7h-6.8zM1884.3 510.2h6.8v14.7h-6.8zM2080.5 510.2h6.3v14.7h-6.3zM2179.4 510.2h6.1v14.7h-6.1zM2209.7 510.2h6.1v14.7h-6.1zM2215.7 510.2h6.1v14.7h-6.1zM2257.4 510.2h5.8v14.7h-5.8zM2332.5 510.2h5.5v14.7h-5.5zM2338.1 510.2h5.5v14.7h-5.5zM2366.1 510.2h5.8v14.7h-5.8zM2535.9 510.2h5.3v14.7h-5.3zM2546.5 510.2h5.3v14.7h-5.3zM2630.3 510.2h5.2v14.7h-5.2zM2635.5 510.2h5.2v14.7h-5.2zM2671.8 510.2h3.8v14.7h-3.8zM2716.7 510.2h4.8v14.7h-4.8zM2780.7 510.2h4.8v14.7h-4.8zM262.7 524.9h12.1v14.7h-12.1zM362.7 524.9h12.1v14.7h-12.1zM814.0 524.9h11.4v14.7h-11.4zM848.1 524.9h11.4v14.7h-11.4zM947.7 524.9h10.8v14.7h-10.8zM1032.0 524.9h10.3v14.7h-10.3zM1082.7 524.9h10.1v14.7h-10.1zM1218.4 524.9h9.3v14.7h-9.3zM1421.9 524.9h8.6v14.7h-8.6zM1472.1 524.9h8.3v14.7h-8.3zM1584.4 524.9h7.8v14.7h-7.8zM1607.8 524.9h7.6v14.7h-7.6zM1668.6 524.9h7.3v14.7h-7.3zM1713.0 524.9h7.3v14.7h-7.3zM1720.4 524.9h7.3v14.7h-7.3zM1793.0 524.9h7.3v14.7h-7.3zM1800.3 524.9h7.1v14.7h-7.1zM2112.0 524.9h6.3v14.7h-6.3zM2155.2 524.9h6.1v14.7h-6.1zM2161.2 524.9h6.1v14.7h-6.1zM2399.6 524.9h5.5v14.7h-5.5zM2535.9 524.9h5.3v14.7h-5.3zM2562.4 524.9h5.3v14.7h-5.3zM2604.5 524.9h5.2v14.7h-5.2zM2666.1 524.9h5.7v14.7h-5.7zM2761.0 524.9h5.4v14.7h-5.4zM2800.4 524.9h4.8v14.7h-4.8z"/>
<path fill="#2b778e" d="M426.6 246.0h13.1v14.7h-13.1zM530.6 246.0h12.8v14.7h-12.8zM619.7 246.0h12.8v14.7h-12.8zM670.2 246.0h11.8v14.7h-11.8zM814.0 246.0h11.4v14.7h-11.4zM903.8 246.0h11.1v14.7h-11.1zM947.7 246.0h10.8v14.7h-10.8zM1062.5 246.0h10.1v14.7h-10.1zM1122.6 246.0h9.8v14.7h-9.8zM1300.9 246.0h9.1v14.7h-9.1zM1455.7 246.0h8.1v14.7h-8.1zM1698.4 246.0h7.3v14.7h-7.3zM1735.0 246.0h7.3v14.7h-7.3zM2042.4 246.0h6.3v14.7h-6.3zM2099.4 246.0h6.3v14.7h-6.3zM2112.0 246.0h6.3v14.7h-6.3zM2371.9 246.0h5.5v14.7h-5.5zM2383.0 246.0h5.5v14.7h-5.5zM2394.1 246.0h5.5v14.7h-5.5zM2471.5 246.0h5.3v14.7h-5.3zM2493.0 246.0h5.5v14.7h-5.5zM2604.5 246.0h5.2v14.7h-5.2zM2755.9 246.0h5.2v14.7h-5.2zM2770.8 246.0h4.8v14.7h-4.8zM287.0 260.7h12.4v14.7h-12.4zM426.6 260.7h13.1v14.7h-13.1zM657.4 260.7h12.8v14.7h-12.8zM814.0 260.7h11.4v14.7h-11.4zM848.1 260.7h11.4v14.7h-11.4zM1180.8 260.7h9.3v14.7h-9.3zM1246.4 260.7h9.3v14.7h-9.3zM1255.8 260.7h8.8v14.7h-8.8zM1264.6 260.7h9.1v14.7h-9.1zM1362.1 260.7h8.3v14.7h-8.3zM1447.4 260.7h8.3v14.7h-8.3zM1623.0 260.7h7.8v14.7h-7.8zM1653.5 260.7h7.6v14.7h-7.6zM1676.0 260.7h7.6v14.7h-7.6zM1683.5 260.7h7.3v14.7h-7.3zM1690.8 260.7h7.6v14.7h-7.6zM1698.4 260.7h7.3v14.7h-7.3zM2016.7 260.7h6.6v14.7h-6.6zM2023.2 260.7h6.6v14.7h-6.6zM2105.7 260.7h6.3v14.7h-6.3zM2112.0 260.7h6.3v14.7h-6.3zM2124.4 260.7h6.3v14.7h-6.3zM2179.4 260.7h6.1v14.7h-6.1zM2251.6 260.7h5.8v14.7h-5.8zM2432.9 260.7h5.5v14.7h-5.5zM2444.0 260.7h5.5v14.7h-5.5zM2520.0 260.7h5.3v14.7h-5.3zM2525.3 260.7h5.3v14.7h-5.3zM2619.6 260.7h5.4v14.7h-5.4zM2675.6 260.7h5.7v14.7h-5.7zM2731.4 260.7h4.8v14.7h-4.8zM2741.5 260.7h5.2v14.7h-5.2zM2780.7 260.7h4.8v14.7h-4.8zM2833.8 260.7h4.8v14.7h-4.8zM426.6 275.4h13.1v14.7h-13.1zM439.7 275.4h13.1v14.7h-13.1zM452.8 275.4h13.1v14.7h-13.1zM466.0 275.4h12.8v14.7h-12.8zM814.0 275.4h11.4v14.7h-11.4zM837.0 275.4h11.1v14.7h-11.1zM848.1 275.4h11.4v14.7h-11.4zM1379.3 275.4h8.8v14.7h-8.8zM1413.6 275.4h8.3v14.7h-8.3zM1544.8 275.4h8.1v14.7h-8.1zM1683.5 275.4h7.3v14.7h-7.3zM1756.9 275.4h7.3v14.7h-7.3zM1785.9 275.4h7.1v14.7h-7.1zM1877.5 275.4h6.8v14.7h-6.8zM1925.2 275.4h6.8v14.7h-6.8zM2016.7 275.4h6.6v14.7h-6.6zM2067.9 275.4h6.3v14.7h-6.3zM2155.2 275.4h6.1v14.7h-6.1zM2167.3 275.4h6.1v14.7h-6.1zM2280.6 275.4h5.8v14.7h-5.8zM2292.2 275.4h5.8v14.7h-5.8zM2326.7 275.4h5.8v14.7h-5.8zM2466.0 275.4h5.5v14.7h-5.5zM2635.5 275.4h5.2v14.7h-5.2zM2711.5 275.4h5.2v14.7h-5.2zM2726.6 275.4h4.8v14.7h-4.8zM2824.3 275.4h4.8v14.7h-4.8zM2829.1 275.4h4.8v14.7h-4.8zM299.4 290.0h12.4v14.7h-12.4zM682.0 290.0h12.4v14.7h-12.4zM718.7 290.0h12.1v14.7h-12.1zM903.8 290.0h11.1v14.7h-11.1zM1000.7 290.0h10.3v14.7h-10.3zM1032.0 290.0h10.3v14.7h-10.3zM1042.3 290.0h10.1v14.7h-10.1zM1218.4 290.0h9.3v14.7h-9.3zM1255.8 290.0h8.8v14.7h-8.8zM1291.8 290.0h9.1v14.7h-9.1zM1463.8 290.0h8.3v14.7h-8.3zM1544.8 290.0h8.1v14.7h-8.1zM1683.5 290.0h7.3v14.7h-7.3zM1756.9 290.0h7.3v14.7h-7.3zM1835.6 290.0h7.1v14.7h-7.1zM2061.6 290.0h6.3v14.7h-6.3zM2067.9 290.0h6.3v14.7h-6.3zM2155.2 290.0h6.1v14.7h-6.1zM2251.6 290.0h5.8v14.7h-5.8zM2366.1 290.0h5.8v14.7h-5.8zM2394.1 290.0h5.5v14.7h-5.5zM2466.0 290.0h5.5v14.7h-5.5zM2650.8 290.0h4.8v14.7h-4.8zM2655.5 290.0h5.2v14.7h-5.2zM2660.7 290.0h5.4v14.7h-5.4zM2666.1 290.0h5.7v14.7h-5.7zM2696.6 290.0h4.8v14.7h-4.8zM2711.5 290.0h5.2v14.7h-5.2zM682.0 304.7h12.4v14.7h-12.4zM718.7 304.7h12.1v14.7h-12.1zM754.7 304.7h12.4v14.7h-12.4zM871.0 304.7h10.6v14.7h-10.6zM1092.8 304.7h10.1v14.7h-10.1zM1237.1 304.7h9.3v14.7h-9.3zM1300.9 304.7h9.1v14.7h-9.1zM1310.0 304.7h8.8v14.7h-8.8zM1455.7 304.7h8.1v14.7h-8.1zM2016.7 304.7h6.6v14.7h-6.6zM2099.4 304.7h6.3v14.7h-6.3zM2167.3 304.7h6.1v14.7h-6.1zM2191.5 304.7h6.1v14.7h-6.1zM2309.6 304.7h5.8v14.7h-5.8zM2366.1 304.7h5.8v14.7h-5.8zM2388.5 304.7h5.5v14.7h-5.5zM2410.7 304.7h5.5v14.7h-5.5zM2525.3 304.7h5.3v14.7h-5.3zM2567.6 304.7h5.4v14.7h-5.4zM2578.5 304.7h4.8v14.7h-4.8zM2726.6 304.7h4.8v14.7h-4.8zM299.4 319.4h12.4v14.7h-12.4zM439.7 319.4h13.1v14.7h-13.1zM742.4 319.4h12.4v14.7h-12.4zM754.7 319.4h12.4v14.7h-12.4zM837.0 319.4h11.1v14.7h-11.1zM871.0 319.4h10.6v14.7h-10.6zM1327.1 319.4h8.6v14.7h-8.6zM1353.3 319.4h8.8v14.7h-8.8zM1645.9 319.4h7.6v14.7h-7.6zM1814.5 319.4h7.1v14.7h-7.1zM1870.5 319.4h7.1v14.7h-7.1zM2209.7 319.4h6.1v14.7h-6.1zM2227.6 319.4h6.1v14.7h-6.1zM2233.6 319.4h5.8v14.7h-5.8zM2421.8 319.4h5.5v14.7h-5.5zM2455.1 319.4h5.3v14.7h-5.3zM2535.9 319.4h5.3v14.7h-5.3zM2541.2 319.4h5.3v14.7h-5.3zM2551.8 319.4h5.3v14.7h-5.3zM2562.4 319.4h5.3v14.7h-5.3zM2567.6 319.4h5.4v14.7h-5.4zM2583.3 319.4h5.4v14.7h-5.4zM2671.8 319.4h3.8v14.7h-3.8zM287.0 334.1h12.4v14.7h-12.4zM491.9 334.1h13.1v14.7h-13.1zM619.7 334.1h12.8v14.7h-12.8zM859.4 334.1h11.6v14.7h-11.6zM1291.8 334.1h9.1v14.7h-9.1zM1344.5 334.1h8.8v14.7h-8.8zM1421.9 334.1h8.6v14.7h-8.6zM1537.0 334.1h7.8v14.7h-7.8zM1645.9 334.1h7.6v14.7h-7.6zM1661.1 334.1h7.6v14.7h-7.6zM1742.3 334.1h7.3v14.7h-7.3zM1793.0 334.1h7.3v14.7h-7.3zM1884.3 334.1h6.8v14.7h-6.8zM1911.6 334.1h6.8v14.7h-6.8zM1957.7 334.1h6.8v14.7h-6.8zM2023.2 334.1h6.6v14.7h-6.6zM2118.4 334.1h6.1v14.7h-6.1zM2321.2 334.1h5.5v14.7h-5.5zM2349.2 334.1h5.8v14.7h-5.8zM2355.0 334.1h5.5v14.7h-5.5zM2421.8 334.1h5.5v14.7h-5.5zM2438.5 334.1h5.5v14.7h-5.5zM2493.0 334.1h5.5v14.7h-5.5zM2609.7 334.1h4.8v14.7h-4.8zM2630.3 334.1h5.2v14.7h-5.2zM2690.9 334.1h5.7v14.7h-5.7zM2726.6 334.1h4.8v14.7h-4.8zM374.8 348.8h13.5v14.7h-13.5zM414.1 348.8h12.4v14.7h-12.4zM582.0 348.8h12.4v14.7h-12.4zM705.5 348.8h13.1v14.7h-13.1zM859.4 348.8h11.6v14.7h-11.6zM1011.0 348.8h10.6v14.7h-10.6zM1122.6 348.8h9.8v14.7h-9.8zM1264.6 348.8h9.1v14.7h-9.1zM1405.3 348.8h8.3v14.7h-8.3zM1430.5 348.8h8.6v14.7h-8.6zM1455.7 348.8h8.1v14.7h-8.1zM1463.8 348.8h8.3v14.7h-8.3zM1877.5 348.8h6.8v14.7h-6.8zM2010.1 348.8h6.6v14.7h-6.6zM2105.7 348.8h6.3v14.7h-6.3zM2118.4 348.8h6.1v14.7h-6.1zM2179.4 348.8h6.1v14.7h-6.1zM2227.6 348.8h6.1v14.7h-6.1zM2321.2 348.8h5.5v14.7h-5.5zM2338.1 348.8h5.5v14.7h-5.5zM2399.6 348.8h5.5v14.7h-5.5zM2487.7 348.8h5.3v14.7h-5.3zM2650.8 348.8h4.8v14.7h-4.8zM2655.5 348.8h5.2v14.7h-5.2zM2746.7 348.8h5.0v14.7h-5.0zM2790.7 348.8h5.0v14.7h-5.0zM2805.2 348.8h4.6v14.7h-4.6zM2814.5 348.8h5.0v14.7h-5.0zM2819.5 348.8h4.8v14.7h-4.8zM2829.1 348.8h4.8v14.7h-4.8zM274.8 363.4h12.1v14.7h-12.1zM287.0 363.4h12.4v14.7h-12.4zM349.9 363.4h12.8v14.7h-12.8zM491.9 363.4h13.1v14.7h-13.1zM543.4 363.4h12.8v14.7h-12.8zM556.1 363.4h13.1v14.7h-13.1zM730.8 363.4h11.6v14.7h-11.6zM1000.7 363.4h10.3v14.7h-10.3zM1142.2 363.4h9.6v14.7h-9.6zM1291.8 363.4h9.1v14.7h-9.1zM1405.3 363.4h8.3v14.7h-8.3zM1447.4 363.4h8.3v14.7h-8.3zM1455.7 363.4h8.1v14.7h-8.1zM1488.5 363.4h8.1v14.7h-8.1zM1645.9 363.4h7.6v14.7h-7.6zM1735.0 363.4h7.3v14.7h-7.3zM1771.6 363.4h7.1v14.7h-7.1zM1821.5 363.4h7.1v14.7h-7.1zM1856.6 363.4h7.1v14.7h-7.1zM1863.6 363.4h6.8v14.7h-6.8zM1877.5 363.4h6.8v14.7h-6.8zM1945.4 363.4h6.6v14.7h-6.6zM2185.5 363.4h6.1v14.7h-6.1zM2315.4 363.4h5.8v14.7h-5.8zM2332.5 363.4h5.5v14.7h-5.5zM2366.1 363.4h5.8v14.7h-5.8zM2410.7 363.4h5.5v14.7h-5.5zM2421.8 363.4h5.5v14.7h-5.5zM2482.4 363.4h5.3v14.7h-5.3zM2503.8 363.4h5.5v14.7h-5.5zM2701.4 363.4h4.8v14.7h-4.8zM2785.5 363.4h5.2v14.7h-5.2zM2824.3 363.4h4.8v14.7h-4.8zM349.9 378.1h12.8v14.7h-12.8zM388.2 378.1h12.8v14.7h-12.8zM517.8 378.1h12.8v14.7h-12.8zM607.3 378.1h12.4v14.7h-12.4zM657.4 378.1h12.8v14.7h-12.8zM670.2 378.1h11.8v14.7h-11.8zM871.0 378.1h10.6v14.7h-10.6zM903.8 378.1h11.1v14.7h-11.1zM914.9 378.1h10.8v14.7h-10.8zM1273.7 378.1h9.1v14.7h-9.1zM1291.8 378.1h9.1v14.7h-9.1zM1335.6 378.1h8.8v14.7h-8.8zM1353.3 378.1h8.8v14.7h-8.8zM1405.3 378.1h8.3v14.7h-8.3zM1463.8 378.1h8.3v14.7h-8.3zM1520.8 378.1h8.1v14.7h-8.1zM1727.7 378.1h7.3v14.7h-7.3zM1778.6 378.1h7.3v14.7h-7.3zM1821.5 378.1h7.1v14.7h-7.1zM1863.6 378.1h6.8v14.7h-6.8zM1898.0 378.1h6.8v14.7h-6.8zM1911.6 378.1h6.8v14.7h-6.8zM1945.4 378.1h6.6v14.7h-6.6zM1971.0 378.1h6.6v14.7h-6.6zM1990.5 378.1h6.6v14.7h-6.6zM2080.5 378.1h6.3v14.7h-6.3zM2086.8 378.1h6.3v14.7h-6.3zM2130.7 378.1h6.1v14.7h-6.1zM2280.6 378.1h5.8v14.7h-5.8zM2332.5 378.1h5.5v14.7h-5.5zM2366.1 378.1h5.8v14.7h-5.8zM2410.7 378.1h5.5v14.7h-5.5zM2476.8 378.1h5.5v14.7h-5.5zM2535.9 378.1h5.3v14.7h-5.3zM2573.0 378.1h5.5v14.7h-5.5zM2604.5 378.1h5.2v14.7h-5.2zM2640.6 378.1h4.4v14.7h-4.4zM2655.5 378.1h5.2v14.7h-5.2zM2721.5 378.1h5.2v14.7h-5.2zM2780.7 378.1h4.8v14.7h-4.8zM2854.3 378.1h4.4v14.7h-4.4zM388.2 392.8h12.8v14.7h-12.8zM439.7 392.8h13.1v14.7h-13.1zM452.8 392.8h13.1v14.7h-13.1zM478.7 392.8h13.1v14.7h-13.1zM594.5 392.8h12.8v14.7h-12.8zM814.0 392.8h11.4v14.7h-11.4zM825.4 392.8h11.6v14.7h-11.6zM1011.0 392.8h10.6v14.7h-10.6zM1122.6 392.8h9.8v14.7h-9.8zM1132.4 392.8h9.8v14.7h-9.8zM1142.2 392.8h9.6v14.7h-9.6zM1264.6 392.8h9.1v14.7h-9.1zM1282.7 392.8h9.1v14.7h-9.1zM1300.9 392.8h9.1v14.7h-9.1zM1480.4 392.8h8.1v14.7h-8.1zM1537.0 392.8h7.8v14.7h-7.8zM1698.4 392.8h7.3v14.7h-7.3zM1735.0 392.8h7.3v14.7h-7.3zM1828.6 392.8h7.1v14.7h-7.1zM1842.7 392.8h6.8v14.7h-6.8zM1856.6 392.8h7.1v14.7h-7.1zM1870.5 392.8h7.1v14.7h-7.1zM1938.6 392.8h6.8v14.7h-6.8zM1945.4 392.8h6.6v14.7h-6.6zM1957.7 392.8h6.8v14.7h-6.8zM1984.1 392.8h6.3v14.7h-6.3zM2023.2 392.8h6.6v14.7h-6.6zM2029.8 392.8h6.3v14.7h-6.3zM2036.1 392.8h6.3v14.7h-6.3zM2048.7 392.8h6.6v14.7h-6.6zM2155.2 392.8h6.1v14.7h-6.1zM2179.4 392.8h6.1v14.7h-6.1zM2185.5 392.8h6.1v14.7h-6.1zM2203.6 392.8h6.1v14.7h-6.1zM2245.5 392.8h6.1v14.7h-6.1zM2257.4 392.8h5.8v14.7h-5.8zM2269.0 392.8h5.8v14.7h-5.8zM2298.0 392.8h5.8v14.7h-5.8zM2303.8 392.8h5.8v14.7h-5.8zM2309.6 392.8h5.8v14.7h-5.8zM2377.4 392.8h5.5v14.7h-5.5zM2388.5 392.8h5.5v14.7h-5.5zM2394.1 392.8h5.5v14.7h-5.5zM2399.6 392.8h5.5v14.7h-5.5zM2503.8 392.8h5.5v14.7h-5.5zM2509.4 392.8h5.3v14.7h-5.3zM2514.7 392.8h5.3v14.7h-5.3zM2541.2 392.8h5.3v14.7h-5.3zM2609.7 392.8h4.8v14.7h-4.8zM2630.3 392.8h5.2v14.7h-5.2zM2655.5 392.8h5.2v14.7h-5.2zM2751.7 392.8h4.2v14.7h-4.2zM2780.7 392.8h4.8v14.7h-4.8zM2809.8 392.8h4.8v14.7h-4.8zM337.4 407.5h12.4v14.7h-12.4zM742.4 407.5h12.4v14.7h-12.4zM814.0 407.5h11.4v14.7h-11.4zM859.4 407.5h11.6v14.7h-11.6zM925.8 407.5h10.8v14.7h-10.8zM1052.4 407.5h10.1v14.7h-10.1zM1282.7 407.5h9.1v14.7h-9.1zM1335.6 407.5h8.8v14.7h-8.8zM1370.5 407.5h8.8v14.7h-8.8zM1504.7 407.5h8.1v14.7h-8.1zM1520.8 407.5h8.1v14.7h-8.1zM1568.7 407.5h7.8v14.7h-7.8zM1600.0 407.5h7.8v14.7h-7.8zM1807.4 407.5h7.1v14.7h-7.1zM1870.5 407.5h7.1v14.7h-7.1zM1977.6 407.5h6.6v14.7h-6.6zM1990.5 407.5h6.6v14.7h-6.6zM2010.1 407.5h6.6v14.7h-6.6zM2055.3 407.5h6.3v14.7h-6.3zM2173.4 407.5h6.1v14.7h-6.1zM2179.4 407.5h6.1v14.7h-6.1zM2191.5 407.5h6.1v14.7h-6.1zM2197.6 407.5h6.1v14.7h-6.1zM2355.0 407.5h5.5v14.7h-5.5zM2366.1 407.5h5.8v14.7h-5.8zM2388.5 407.5h5.5v14.7h-5.5zM2432.9 407.5h5.5v14.7h-5.5zM2520.0 407.5h5.3v14.7h-5.3zM2578.5 407.5h4.8v14.7h-4.8zM2599.6 407.5h5.0v14.7h-5.0zM2731.4 407.5h4.8v14.7h-4.8zM2780.7 407.5h4.8v14.7h-4.8zM2809.8 407.5h4.8v14.7h-4.8zM2824.3 407.5h4.8v14.7h-4.8zM2854.3 407.5h4.4v14.7h-4.4zM670.2 422.2h11.8v14.7h-11.8zM1052.4 422.2h10.1v14.7h-10.1zM1379.3 422.2h8.8v14.7h-8.8zM1504.7 422.2h8.1v14.7h-8.1zM1698.4 422.2h7.3v14.7h-7.3zM1785.9 422.2h7.1v14.7h-7.1zM1849.5 422.2h7.1v14.7h-7.1zM1904.8 422.2h6.8v14.7h-6.8zM1925.2 422.2h6.8v14.7h-6.8zM2124.4 422.2h6.3v14.7h-6.3zM2130.7 422.2h6.1v14.7h-6.1zM2136.8 422.2h6.3v14.7h-6.3zM2394.1 422.2h5.5v14.7h-5.5zM2614.5 422.2h5.2v14.7h-5.2zM2666.1 422.2h5.7v14.7h-5.7zM2780.7 422.2h4.8v14.7h-4.8zM2814.5 422.2h5.0v14.7h-5.0zM2829.1 422.2h4.8v14.7h-4.8zM324.6 436.8h12.8v14.7h-12.8zM582.0 436.8h12.4v14.7h-12.4zM742.4 436.8h12.4v14.7h-12.4zM754.7 436.8h12.4v14.7h-12.4zM990.4 436.8h10.3v14.7h-10.3zM1042.3 436.8h10.1v14.7h-10.1zM1052.4 436.8h10.1v14.7h-10.1zM1227.7 436.8h9.3v14.7h-9.3zM1237.1 436.8h9.3v14.7h-9.3zM1528.9 436.8h8.1v14.7h-8.1zM1638.4 436.8h7.6v14.7h-7.6zM1690.8 436.8h7.6v14.7h-7.6zM1720.4 436.8h7.3v14.7h-7.3zM1849.5 436.8h7.1v14.7h-7.1zM1932.0 436.8h6.6v14.7h-6.6zM1971.0 436.8h6.6v14.7h-6.6zM2067.9 436.8h6.3v14.7h-6.3zM2124.4 436.8h6.3v14.7h-6.3zM2173.4 436.8h6.1v14.7h-6.1zM2399.6 436.8h5.5v14.7h-5.5zM2427.4 436.8h5.5v14.7h-5.5zM2476.8 436.8h5.5v14.7h-5.5zM2790.7 436.8h5.0v14.7h-5.0zM2795.6 436.8h4.8v14.7h-4.8zM682.0 451.5h12.4v14.7h-12.4zM694.4 451.5h11.1v14.7h-11.1zM802.4 451.5h11.6v14.7h-11.6zM1021.6 451.5h10.3v14.7h-10.3zM1112.7 451.5h9.8v14.7h-9.8zM1300.9 451.5h9.1v14.7h-9.1zM1379.3 451.5h8.8v14.7h-8.8zM1480.4 451.5h8.1v14.7h-8.1zM1488.5 451.5h8.1v14.7h-8.1zM1560.9 451.5h7.8v14.7h-7.8zM1592.2 451.5h7.8v14.7h-7.8zM1600.0 451.5h7.8v14.7h-7.8zM1607.8 451.5h7.6v14.7h-7.6zM1720.4 451.5h7.3v14.7h-7.3zM1756.9 451.5h7.3v14.7h-7.3zM1849.5 451.5h7.1v14.7h-7.1zM1977.6 451.5h6.6v14.7h-6.6zM2161.2 451.5h6.1v14.7h-6.1zM2167.3 451.5h6.1v14.7h-6.1zM2251.6 451.5h5.8v14.7h-5.8zM2371.9 451.5h5.5v14.7h-5.5zM2427.4 451.5h5.5v14.7h-5.5zM2476.8 451.5h5.5v14.7h-5.5zM2482.4 451.5h5.3v14.7h-5.3zM2514.7 451.5h5.3v14.7h-5.3zM2790.7 451.5h5.0v14.7h-5.0zM2809.8 451.5h4.8v14.7h-4.8zM374.8 466.2h13.5v14.7h-13.5zM682.0 466.2h12.4v14.7h-12.4zM694.4 466.2h11.1v14.7h-11.1zM1021.6 466.2h10.3v14.7h-10.3zM1052.4 466.2h10.1v14.7h-10.1zM1421.9 466.2h8.6v14.7h-8.6zM1520.8 466.2h8.1v14.7h-8.1zM1592.2 466.2h7.8v14.7h-7.8zM1630.8 466.2h7.6v14.7h-7.6zM1638.4 466.2h7.6v14.7h-7.6zM2036.1 466.2h6.3v14.7h-6.3zM2099.4 466.2h6.3v14.7h-6.3zM2112.0 466.2h6.3v14.7h-6.3zM2245.5 466.2h6.1v14.7h-6.1zM2394.1 466.2h5.5v14.7h-5.5zM2399.6 466.2h5.5v14.7h-5.5zM2455.1 466.2h5.3v14.7h-5.3zM2666.1 466.2h5.7v14.7h-5.7zM2805.2 466.2h4.6v14.7h-4.6zM426.6 480.9h13.1v14.7h-13.1zM530.6 480.9h12.8v14.7h-12.8zM619.7 480.9h12.8v14.7h-12.8zM802.4 480.9h11.6v14.7h-11.6zM814.0 480.9h11.4v14.7h-11.4zM1246.4 480.9h9.3v14.7h-9.3zM1282.7 480.9h9.1v14.7h-9.1zM1362.1 480.9h8.3v14.7h-8.3zM1615.4 480.9h7.6v14.7h-7.6zM1884.3 480.9h6.8v14.7h-6.8zM1891.1 480.9h6.8v14.7h-6.8zM1951.9 480.9h5.7v14.7h-5.7zM2016.7 480.9h6.6v14.7h-6.6zM2036.1 480.9h6.3v14.7h-6.3zM2233.6 480.9h5.8v14.7h-5.8zM2239.4 480.9h6.1v14.7h-6.1zM2315.4 480.9h5.8v14.7h-5.8zM2399.6 480.9h5.5v14.7h-5.5zM2455.1 480.9h5.3v14.7h-5.3zM2466.0 480.9h5.5v14.7h-5.5zM2619.6 480.9h5.4v14.7h-5.4zM2625.0 480.9h5.4v14.7h-5.4zM2666.1 480.9h5.7v14.7h-5.7zM2696.6 480.9h4.8v14.7h-4.8zM337.4 495.6h12.4v14.7h-12.4zM670.2 495.6h11.8v14.7h-11.8zM705.5 495.6h13.1v14.7h-13.1zM1011.0 495.6h10.6v14.7h-10.6zM1209.1 495.6h9.3v14.7h-9.3zM1300.9 495.6h9.1v14.7h-9.1zM1520.8 495.6h8.1v14.7h-8.1zM1552.8 495.6h8.1v14.7h-8.1zM1835.6 495.6h7.1v14.7h-7.1zM1938.6 495.6h6.8v14.7h-6.8zM2010.1 495.6h6.6v14.7h-6.6zM2149.1 495.6h6.1v14.7h-6.1zM2191.5 495.6h6.1v14.7h-6.1zM2221.8 495.6h5.8v14.7h-5.8zM2546.5 495.6h5.3v14.7h-5.3zM2625.0 495.6h5.4v14.7h-5.4zM2761.0 495.6h5.4v14.7h-5.4zM2766.4 495.6h4.4v14.7h-4.4zM2775.6 495.6h5.2v14.7h-5.2zM287.0 510.2h12.4v14.7h-12.4zM311.9 510.2h12.8v14.7h-12.8zM401.0 510.2h13.1v14.7h-13.1zM645.3 510.2h12.1v14.7h-12.1zM779.2 510.2h11.6v14.7h-11.6zM802.4 510.2h11.6v14.7h-11.6zM814.0 510.2h11.4v14.7h-11.4zM1227.7 510.2h9.3v14.7h-9.3zM1430.5 510.2h8.6v14.7h-8.6zM1496.6 510.2h8.1v14.7h-8.1zM1520.8 510.2h8.1v14.7h-8.1zM1615.4 510.2h7.6v14.7h-7.6zM1676.0 510.2h7.6v14.7h-7.6zM1764.2 510.2h7.3v14.7h-7.3zM1793.0 510.2h7.3v14.7h-7.3zM2197.6 510.2h6.1v14.7h-6.1zM2203.6 510.2h6.1v14.7h-6.1zM2227.6 510.2h6.1v14.7h-6.1zM2251.6 510.2h5.8v14.7h-5.8zM2360.5 510.2h5.5v14.7h-5.5zM2438.5 510.2h5.5v14.7h-5.5zM2509.4 510.2h5.3v14.7h-5.3zM2599.6 510.2h5.0v14.7h-5.0zM2711.5 510.2h5.2v14.7h-5.2zM2746.7 510.2h5.0v14.7h-5.0zM2833.8 510.2h4.8v14.7h-4.8zM2838.6 510.2h5.2v14.7h-5.2zM517.8 524.9h12.8v14.7h-12.8zM645.3 524.9h12.1v14.7h-12.1zM670.2 524.9h11.8v14.7h-11.8zM1000.7 524.9h10.3v14.7h-10.3zM1072.6 524.9h10.1v14.7h-10.1zM1180.8 524.9h9.3v14.7h-9.3zM1190.2 524.9h9.6v14.7h-9.6zM1273.7 524.9h9.1v14.7h-9.1zM1370.5 524.9h8.8v14.7h-8.8zM1463.8 524.9h8.3v14.7h-8.3zM1520.8 524.9h8.1v14.7h-8.1zM1705.7 524.9h7.3v14.7h-7.3zM1814.5 524.9h7.1v14.7h-7.1zM1984.1 524.9h6.3v14.7h-6.3zM2036.1 524.9h6.3v14.7h-6.3zM2055.3 524.9h6.3v14.7h-6.3zM2360.5 524.9h5.5v14.7h-5.5zM2746.7 524.9h5.0v14.7h-5.0zM2770.8 524.9h4.8v14.7h-4.8zM2848.6 524.9h5.7v14.7h-5.7zM2854.3 524.9h4.4v14.7h-4.4z"/>
<path fill="#297c8e" d="M767.1 246.0h12.1v14.7h-12.1zM1246.4 246.0h9.3v14.7h-9.3zM1282.7 246.0h9.1v14.7h-9.1zM1291.8 246.0h9.1v14.7h-9.1zM1668.6 246.0h7.3v14.7h-7.3zM1720.4 246.0h7.3v14.7h-7.3zM2118.4 246.0h6.1v14.7h-6.1zM2185.5 246.0h6.1v14.7h-6.1zM2233.6 246.0h5.8v14.7h-5.8zM2388.5 246.0h5.5v14.7h-5.5zM2399.6 246.0h5.5v14.7h-5.5zM2751.7 246.0h4.2v14.7h-4.2zM505.0 260.7h12.8v14.7h-12.8zM530.6 260.7h12.8v14.7h-12.8zM914.9 260.7h10.8v14.7h-10.8zM1300.9 260.7h9.1v14.7h-9.1zM1421.9 260.7h8.6v14.7h-8.6zM1430.5 260.7h8.6v14.7h-8.6zM1705.7 260.7h7.3v14.7h-7.3zM1764.2 260.7h7.3v14.7h-7.3zM1793.0 260.7h7.3v14.7h-7.3zM1800.3 260.7h7.1v14.7h-7.1zM1877.5 260.7h6.8v14.7h-6.8zM1957.7 260.7h6.8v14.7h-6.8zM1964.5 260.7h6.6v14.7h-6.6zM2055.3 260.7h6.3v14.7h-6.3zM2245.5 260.7h6.1v14.7h-6.1zM2509.4 260.7h5.3v14.7h-5.3zM2514.7 260.7h5.3v14.7h-5.3zM2686.5 260.7h4.4v14.7h-4.4zM2785.5 260.7h5.2v14.7h-5.2zM2795.6 260.7h4.8v14.7h-4.8zM401.0 275.4h13.1v14.7h-13.1zM478.7 275.4h13.1v14.7h-13.1zM491.9 275.4h13.1v14.7h-13.1zM543.4 275.4h12.8v14.7h-12.8zM705.5 275.4h13.1v14.7h-13.1zM1042.3 275.4h10.1v14.7h-10.1zM1171.2 275.4h9.6v14.7h-9.6zM1638.4 275.4h7.6v14.7h-7.6zM1690.8 275.4h7.6v14.7h-7.6zM2746.7 275.4h5.0v14.7h-5.0zM2751.7 275.4h4.2v14.7h-4.2zM337.4 290.0h12.4v14.7h-12.4zM705.5 290.0h13.1v14.7h-13.1zM859.4 290.0h11.6v14.7h-11.6zM1011.0 290.0h10.6v14.7h-10.6zM1310.0 290.0h8.8v14.7h-8.8zM1496.6 290.0h8.1v14.7h-8.1zM1690.8 290.0h7.6v14.7h-7.6zM1814.5 290.0h7.1v14.7h-7.1zM2048.7 290.0h6.6v14.7h-6.6zM2161.2 290.0h6.1v14.7h-6.1zM2191.5 290.0h6.1v14.7h-6.1zM2332.5 290.0h5.5v14.7h-5.5zM2360.5 290.0h5.5v14.7h-5.5zM2701.4 290.0h4.8v14.7h-4.8zM2706.2 290.0h5.4v14.7h-5.4zM2805.2 290.0h4.6v14.7h-4.6zM287.0 304.7h12.4v14.7h-12.4zM1132.4 304.7h9.8v14.7h-9.8zM1496.6 304.7h8.1v14.7h-8.1zM1821.5 304.7h7.1v14.7h-7.1zM2303.8 304.7h5.8v14.7h-5.8zM2338.1 304.7h5.5v14.7h-5.5zM2583.3 304.7h5.4v14.7h-5.4zM2706.2 304.7h5.4v14.7h-5.4zM2751.7 304.7h4.2v14.7h-4.2zM2790.7 304.7h5.0v14.7h-5.0zM2795.6 304.7h4.8v14.7h-4.8zM2805.2 304.7h4.6v14.7h-4.6zM2809.8 304.7h4.8v14.7h-4.8zM287.0 319.4h12.4v14.7h-12.4zM362.7 319.4h12.1v14.7h-12.1zM682.0 319.4h12.4v14.7h-12.4zM1344.5 319.4h8.8v14.7h-8.8zM1661.1 319.4h7.6v14.7h-7.6zM2016.7 319.4h6.6v14.7h-6.6zM2239.4 319.4h6.1v14.7h-6.1zM2410.7 319.4h5.5v14.7h-5.5zM2416.3 319.4h5.5v14.7h-5.5zM2444.0 319.4h5.5v14.7h-5.5zM2675.6 319.4h5.7v14.7h-5.7zM2731.4 319.4h4.8v14.7h-4.8zM2766.4 319.4h4.4v14.7h-4.4zM311.9 334.1h12.8v14.7h-12.8zM682.0 334.1h12.4v14.7h-12.4zM754.7 334.1h12.4v14.7h-12.4zM969.2 334.1h10.6v14.7h-10.6zM1062.5 334.1h10.1v14.7h-10.1zM1327.1 334.1h8.6v14.7h-8.6zM1413.6 334.1h8.3v14.7h-8.3zM1756.9 334.1h7.3v14.7h-7.3zM2003.6 334.1h6.6v14.7h-6.6zM2029.8 334.1h6.3v14.7h-6.3zM2099.4 334.1h6.3v14.7h-6.3zM2105.7 334.1h6.3v14.7h-6.3zM2112.0 334.1h6.3v14.7h-6.3zM2227.6 334.1h6.1v14.7h-6.1zM2315.4 334.1h5.8v14.7h-5.8zM2482.4 334.1h5.3v14.7h-5.3zM2503.8 334.1h5.5v14.7h-5.5zM2535.9 334.1h5.3v14.7h-5.3zM2824.3 334.1h4.8v14.7h-4.8zM2829.1 334.1h4.8v14.7h-4.8zM362.7 348.8h12.1v14.7h-12.1zM730.8 348.8h11.6v14.7h-11.6zM802.4 348.8h11.6v14.7h-11.6zM848.1 348.8h11.4v14.7h-11.4zM1151.8 348.8h9.8v14.7h-9.8zM1396.7 348.8h8.6v14.7h-8.6zM1528.9 348.8h8.1v14.7h-8.1zM1537.0 348.8h7.8v14.7h-7.8zM1891.1 348.8h6.8v14.7h-6.8zM2280.6 348.8h5.8v14.7h-5.8zM2421.8 348.8h5.5v14.7h-5.5zM2503.8 348.8h5.5v14.7h-5.5zM582.0 363.4h12.4v14.7h-12.4zM607.3 363.4h12.4v14.7h-12.4zM859.4 363.4h11.6v14.7h-11.6zM881.6 363.4h11.4v14.7h-11.4zM903.8 363.4h11.1v14.7h-11.1zM1264.6 363.4h9.1v14.7h-9.1zM1396.7 363.4h8.6v14.7h-8.6zM1463.8 363.4h8.3v14.7h-8.3zM1705.7 363.4h7.3v14.7h-7.3zM1713.0 363.4h7.3v14.7h-7.3zM1720.4 363.4h7.3v14.7h-7.3zM1884.3 363.4h6.8v14.7h-6.8zM1891.1 363.4h6.8v14.7h-6.8zM1971.0 363.4h6.6v14.7h-6.6zM2112.0 363.4h6.3v14.7h-6.3zM2280.6 363.4h5.8v14.7h-5.8zM2394.1 363.4h5.5v14.7h-5.5zM881.6 378.1h11.4v14.7h-11.4zM893.0 378.1h10.8v14.7h-10.8zM1072.6 378.1h10.1v14.7h-10.1zM1112.7 378.1h9.8v14.7h-9.8zM1327.1 378.1h8.6v14.7h-8.6zM1344.5 378.1h8.8v14.7h-8.8zM1638.4 378.1h7.6v14.7h-7.6zM1645.9 378.1h7.6v14.7h-7.6zM1690.8 378.1h7.6v14.7h-7.6zM1705.7 378.1h7.3v14.7h-7.3zM1764.2 378.1h7.3v14.7h-7.3zM1849.5 378.1h7.1v14.7h-7.1zM1884.3 378.1h6.8v14.7h-6.8zM1891.1 378.1h6.8v14.7h-6.8zM1918.4 378.1h6.8v14.7h-6.8zM2016.7 378.1h6.6v14.7h-6.6zM2055.3 378.1h6.3v14.7h-6.3zM2105.7 378.1h6.3v14.7h-6.3zM2149.1 378.1h6.1v14.7h-6.1zM2191.5 378.1h6.1v14.7h-6.1zM2309.6 378.1h5.8v14.7h-5.8zM2371.9 378.1h5.5v14.7h-5.5zM2377.4 378.1h5.5v14.7h-5.5zM2388.5 378.1h5.5v14.7h-5.5zM2416.3 378.1h5.5v14.7h-5.5zM2421.8 378.1h5.5v14.7h-5.5zM2487.7 378.1h5.3v14.7h-5.3zM2578.5 378.1h4.8v14.7h-4.8zM2583.3 378.1h5.4v14.7h-5.4zM848.1 392.8h11.4v14.7h-11.4zM893.0 392.8h10.8v14.7h-10.8zM1052.4 392.8h10.1v14.7h-10.1zM1209.1 392.8h9.3v14.7h-9.3zM1273.7 392.8h9.1v14.7h-9.1zM1520.8 392.8h8.1v14.7h-8.1zM1690.8 392.8h7.6v14.7h-7.6zM1771.6 392.8h7.1v14.7h-7.1zM1877.5 392.8h6.8v14.7h-6.8zM1918.4 392.8h6.8v14.7h-6.8zM2016.7 392.8h6.6v14.7h-6.6zM2197.6 392.8h6.1v14.7h-6.1zM2263.2 392.8h5.8v14.7h-5.8zM2482.4 392.8h5.3v14.7h-5.3zM2578.5 392.8h4.8v14.7h-4.8zM2625.0 392.8h5.4v14.7h-5.4zM2650.8 392.8h4.8v14.7h-4.8zM2766.4 392.8h4.4v14.7h-4.4zM2770.8 392.8h4.8v14.7h-4.8zM2848.6 392.8h5.7v14.7h-5.7zM478.7 407.5h13.1v14.7h-13.1zM1142.2 407.5h9.6v14.7h-9.6zM1528.9 407.5h8.1v14.7h-8.1zM1713.0 407.5h7.3v14.7h-7.3zM1749.6 407.5h7.3v14.7h-7.3zM1849.5 407.5h7.1v14.7h-7.1zM1938.6 407.5h6.8v14.7h-6.8zM1957.7 407.5h6.8v14.7h-6.8zM1964.5 407.5h6.6v14.7h-6.6zM1984.1 407.5h6.3v14.7h-6.3zM2105.7 407.5h6.3v14.7h-6.3zM2112.0 407.5h6.3v14.7h-6.3zM2136.8 407.5h6.3v14.7h-6.3zM2360.5 407.5h5.5v14.7h-5.5zM2377.4 407.5h5.5v14.7h-5.5zM2666.1 407.5h5.7v14.7h-5.7zM2721.5 407.5h5.2v14.7h-5.2zM607.3 422.2h12.4v14.7h-12.4zM682.0 422.2h12.4v14.7h-12.4zM1132.4 422.2h9.8v14.7h-9.8zM1713.0 422.2h7.3v14.7h-7.3zM1720.4 422.2h7.3v14.7h-7.3zM1735.0 422.2h7.3v14.7h-7.3zM1977.6 422.2h6.6v14.7h-6.6zM2191.5 422.2h6.1v14.7h-6.1zM2377.4 422.2h5.5v14.7h-5.5zM2599.6 422.2h5.0v14.7h-5.0zM2619.6 422.2h5.4v14.7h-5.4zM2726.6 422.2h4.8v14.7h-4.8zM2731.4 422.2h4.8v14.7h-4.8zM2819.5 422.2h4.8v14.7h-4.8zM2824.3 422.2h4.8v14.7h-4.8zM530.6 436.8h12.8v14.7h-12.8zM543.4 436.8h12.8v14.7h-12.8zM670.2 436.8h11.8v14.7h-11.8zM825.4 436.8h11.6v14.7h-11.6zM1062.5 436.8h10.1v14.7h-10.1zM1264.6 436.8h9.1v14.7h-9.1zM1310.0 436.8h8.8v14.7h-8.8zM1318.8 436.8h8.2v14.7h-8.2zM1705.7 436.8h7.3v14.7h-7.3zM1938.6 436.8h6.8v14.7h-6.8zM1945.4 436.8h6.6v14.7h-6.6zM2074.2 436.8h6.3v14.7h-6.3zM2130.7 436.8h6.1v14.7h-6.1zM2191.5 436.8h6.1v14.7h-6.1zM2609.7 436.8h4.8v14.7h-4.8zM2824.3 436.8h4.8v14.7h-4.8zM2833.8 436.8h4.8v14.7h-4.8zM349.9 451.5h12.8v14.7h-12.8zM814.0 451.5h11.4v14.7h-11.4zM1264.6 451.5h9.1v14.7h-9.1zM1273.7 451.5h9.1v14.7h-9.1zM1421.9 451.5h8.6v14.7h-8.6zM1512.7 451.5h8.1v14.7h-8.1zM1520.8 451.5h8.1v14.7h-8.1zM1638.4 451.5h7.6v14.7h-7.6zM1713.0 451.5h7.3v14.7h-7.3zM1904.8 451.5h6.8v14.7h-6.8zM2173.4 451.5h6.1v14.7h-6.1zM2377.4 451.5h5.5v14.7h-5.5zM2432.9 451.5h5.5v14.7h-5.5zM2696.6 451.5h4.8v14.7h-4.8zM2800.4 451.5h4.8v14.7h-4.8zM1246.4 466.2h9.3v14.7h-9.3zM1291.8 466.2h9.1v14.7h-9.1zM2010.1 466.2h6.6v14.7h-6.6zM2800.4 466.2h4.8v14.7h-4.8zM2809.8 466.2h4.8v14.7h-4.8zM299.4 480.9h12.4v14.7h-12.4zM871.0 480.9h10.6v14.7h-10.6zM1218.4 480.9h9.3v14.7h-9.3zM1227.7 480.9h9.3v14.7h-9.3zM1327.1 480.9h8.6v14.7h-8.6zM1938.6 480.9h6.8v14.7h-6.8zM2048.7 480.9h6.6v14.7h-6.6zM2055.3 480.9h6.3v14.7h-6.3zM2099.4 480.9h6.3v14.7h-6.3zM2185.5 480.9h6.1v14.7h-6.1zM2599.6 480.9h5.0v14.7h-5.0zM2726.6 480.9h4.8v14.7h-4.8zM349.9 495.6h12.8v14.7h-12.8zM718.7 495.6h12.1v14.7h-12.1zM754.7 495.6h12.4v14.7h-12.4zM790.8 495.6h11.6v14.7h-11.6zM1273.7 495.6h9.1v14.7h-9.1zM1327.1 495.6h8.6v14.7h-8.6zM1528.9 495.6h8.1v14.7h-8.1zM1560.9 495.6h7.8v14.7h-7.8zM1615.4 495.6h7.6v14.7h-7.6zM2080.5 495.6h6.3v14.7h-6.3zM2099.4 495.6h6.3v14.7h-6.3zM2721.5 495.6h5.2v14.7h-5.2zM2755.9 495.6h5.2v14.7h-5.2zM694.4 510.2h11.1v14.7h-11.1zM825.4 510.2h11.6v14.7h-11.6zM1327.1 510.2h8.6v14.7h-8.6zM1353.3 510.2h8.8v14.7h-8.8zM1405.3 510.2h8.3v14.7h-8.3zM1413.6 510.2h8.3v14.7h-8.3zM1421.9 510.2h8.6v14.7h-8.6zM1537.0 510.2h7.8v14.7h-7.8zM1552.8 510.2h8.1v14.7h-8.1zM1800.3 510.2h7.1v14.7h-7.1zM2173.4 510.2h6.1v14.7h-6.1zM2371.9 510.2h5.5v14.7h-5.5zM2432.9 510.2h5.5v14.7h-5.5zM2675.6 510.2h5.7v14.7h-5.7zM2775.6 510.2h5.2v14.7h-5.2zM439.7 524.9h13.1v14.7h-13.1zM452.8 524.9h13.1v14.7h-13.1zM569.3 524.9h12.8v14.7h-12.8zM632.5 524.9h12.8v14.7h-12.8zM657.4 524.9h12.8v14.7h-12.8zM990.4 524.9h10.3v14.7h-10.3zM1171.2 524.9h9.6v14.7h-9.6zM1264.6 524.9h9.1v14.7h-9.1zM1291.8 524.9h9.1v14.7h-9.1zM1439.1 524.9h8.3v14.7h-8.3zM1528.9 524.9h8.1v14.7h-8.1zM1661.1 524.9h7.6v14.7h-7.6zM1911.6 524.9h6.8v14.7h-6.8zM2048.7 524.9h6.6v14.7h-6.6zM2061.6 524.9h6.3v14.7h-6.3zM2118.4 524.9h6.1v14.7h-6.1zM2326.7 524.9h5.8v14.7h-5.8zM2371.9 524.9h5.5v14.7h-5.5zM2410.7 524.9h5.5v14.7h-5.5zM2660.7 524.9h5.4v14.7h-5.4zM2819.5 524.9h4.8v14.7h-4.8z"/>
<path fill="#27808e" d="M287.0 246.0h12.4v14.7h-12.4zM543.4 246.0h12.8v14.7h-12.8zM1082.7 246.0h10.1v14.7h-10.1zM1161.7 246.0h9.6v14.7h-9.6zM1592.2 246.0h7.8v14.7h-7.8zM1835.6 246.0h7.1v14.7h-7.1zM2080.5 246.0h6.3v14.7h-6.3zM2215.7 246.0h6.1v14.7h-6.1zM2482.4 246.0h5.3v14.7h-5.3zM2690.9 246.0h5.7v14.7h-5.7zM274.0 260.7h0.8v14.7h-0.8zM414.1 260.7h12.4v14.7h-12.4zM779.2 260.7h11.6v14.7h-11.6zM859.4 260.7h11.6v14.7h-11.6zM1171.2 260.7h9.6v14.7h-9.6zM1413.6 260.7h8.3v14.7h-8.3zM2118.4 260.7h6.1v14.7h-6.1zM2770.8 260.7h4.8v14.7h-4.8zM324.6 275.4h12.8v14.7h-12.8zM958.6 275.4h10.6v14.7h-10.6zM1630.8 275.4h7.6v14.7h-7.6zM2741.5 275.4h5.2v14.7h-5.2zM362.7 290.0h12.1v14.7h-12.1zM401.0 290.0h13.1v14.7h-13.1zM754.7 290.0h12.4v14.7h-12.4zM1161.7 290.0h9.6v14.7h-9.6zM1171.2 290.0h9.6v14.7h-9.6zM1455.7 290.0h8.1v14.7h-8.1zM1821.5 290.0h7.1v14.7h-7.1zM1918.4 290.0h6.8v14.7h-6.8zM2338.1 290.0h5.5v14.7h-5.5zM2809.8 290.0h4.8v14.7h-4.8zM1190.2 304.7h9.6v14.7h-9.6zM1362.1 304.7h8.3v14.7h-8.3zM1661.1 304.7h7.6v14.7h-7.6zM2155.2 304.7h6.1v14.7h-6.1zM2161.2 304.7h6.1v14.7h-6.1zM2520.0 304.7h5.3v14.7h-5.3zM2800.4 304.7h4.8v14.7h-4.8zM337.4 319.4h12.4v14.7h-12.4zM1877.5 319.4h6.8v14.7h-6.8zM1884.3 319.4h6.8v14.7h-6.8zM2303.8 319.4h5.8v14.7h-5.8zM2449.6 319.4h5.5v14.7h-5.5zM2016.7 334.1h6.6v14.7h-6.6zM2487.7 334.1h5.3v14.7h-5.3zM2567.6 334.1h5.4v14.7h-5.4zM1742.3 348.8h7.3v14.7h-7.3zM2286.4 348.8h5.8v14.7h-5.8zM2298.0 348.8h5.8v14.7h-5.8zM1132.4 363.4h9.8v14.7h-9.8zM1151.8 363.4h9.8v14.7h-9.8zM1246.4 363.4h9.3v14.7h-9.3zM1472.1 363.4h8.3v14.7h-8.3zM1835.6 363.4h7.1v14.7h-7.1zM2286.4 363.4h5.8v14.7h-5.8zM2388.5 363.4h5.5v14.7h-5.5zM2416.3 363.4h5.5v14.7h-5.5zM274.8 378.1h12.1v14.7h-12.1zM337.4 378.1h12.4v14.7h-12.4zM414.1 378.1h12.4v14.7h-12.4zM426.6 378.1h13.1v14.7h-13.1zM632.5 378.1h12.8v14.7h-12.8zM754.7 378.1h12.4v14.7h-12.4zM979.8 378.1h10.6v14.7h-10.6zM1052.4 378.1h10.1v14.7h-10.1zM1122.6 378.1h9.8v14.7h-9.8zM1255.8 378.1h8.8v14.7h-8.8zM1430.5 378.1h8.6v14.7h-8.6zM1488.5 378.1h8.1v14.7h-8.1zM1615.4 378.1h7.6v14.7h-7.6zM1698.4 378.1h7.3v14.7h-7.3zM1771.6 378.1h7.1v14.7h-7.1zM2315.4 378.1h5.8v14.7h-5.8zM2482.4 378.1h5.3v14.7h-5.3zM337.4 392.8h12.4v14.7h-12.4zM657.4 392.8h12.8v14.7h-12.8zM859.4 392.8h11.6v14.7h-11.6zM925.8 392.8h10.8v14.7h-10.8zM1072.6 392.8h10.1v14.7h-10.1zM1291.8 392.8h9.1v14.7h-9.1zM1353.3 392.8h8.8v14.7h-8.8zM1615.4 392.8h7.6v14.7h-7.6zM1821.5 392.8h7.1v14.7h-7.1zM1990.5 392.8h6.6v14.7h-6.6zM2149.1 392.8h6.1v14.7h-6.1zM2161.2 392.8h6.1v14.7h-6.1zM2173.4 392.8h6.1v14.7h-6.1zM2315.4 392.8h5.8v14.7h-5.8zM2321.2 392.8h5.5v14.7h-5.5zM2383.0 392.8h5.5v14.7h-5.5zM2405.2 392.8h5.5v14.7h-5.5zM2583.3 392.8h5.4v14.7h-5.4zM2614.5 392.8h5.2v14.7h-5.2zM2635.5 392.8h5.2v14.7h-5.2zM2775.6 392.8h5.2v14.7h-5.2zM2843.8 392.8h4.8v14.7h-4.8zM2854.3 392.8h4.4v14.7h-4.4zM582.0 407.5h12.4v14.7h-12.4zM754.7 407.5h12.4v14.7h-12.4zM1209.1 407.5h9.3v14.7h-9.3zM1353.3 407.5h8.8v14.7h-8.8zM1756.9 407.5h7.3v14.7h-7.3zM1764.2 407.5h7.3v14.7h-7.3zM1814.5 407.5h7.1v14.7h-7.1zM1842.7 407.5h6.8v14.7h-6.8zM1863.6 407.5h6.8v14.7h-6.8zM2203.6 407.5h6.1v14.7h-6.1zM2383.0 407.5h5.5v14.7h-5.5zM2660.7 407.5h5.4v14.7h-5.4zM543.4 422.2h12.8v14.7h-12.8zM903.8 422.2h11.1v14.7h-11.1zM1062.5 422.2h10.1v14.7h-10.1zM1255.8 422.2h8.8v14.7h-8.8zM1370.5 422.2h8.8v14.7h-8.8zM1421.9 422.2h8.6v14.7h-8.6zM1705.7 422.2h7.3v14.7h-7.3zM1863.6 422.2h6.8v14.7h-6.8zM2660.7 422.2h5.4v14.7h-5.4zM2775.6 422.2h5.2v14.7h-5.2zM252.4 436.8h10.3v14.7h-10.3zM452.8 436.8h13.1v14.7h-13.1zM1520.8 436.8h8.1v14.7h-8.1zM1904.8 436.8h6.8v14.7h-6.8zM2167.3 436.8h6.1v14.7h-6.1zM2371.9 436.8h5.5v14.7h-5.5zM2377.4 436.8h5.5v14.7h-5.5zM414.1 451.5h12.4v14.7h-12.4zM569.3 451.5h12.8v14.7h-12.8zM742.4 451.5h12.4v14.7h-12.4zM1344.5 451.5h8.8v14.7h-8.8zM2609.7 451.5h4.8v14.7h-4.8zM2614.5 451.5h5.2v14.7h-5.2zM2795.6 451.5h4.8v14.7h-4.8zM530.6 466.2h12.8v14.7h-12.8zM958.6 466.2h10.6v14.7h-10.6zM1607.8 466.2h7.6v14.7h-7.6zM1615.4 466.2h7.6v14.7h-7.6zM2251.6 466.2h5.8v14.7h-5.8zM754.7 480.9h12.4v14.7h-12.4zM1237.1 480.9h9.3v14.7h-9.3zM1291.8 480.9h9.1v14.7h-9.1zM1379.3 480.9h8.8v14.7h-8.8zM1480.4 480.9h8.1v14.7h-8.1zM1496.6 480.9h8.1v14.7h-8.1zM1560.9 480.9h7.8v14.7h-7.8zM2191.5 480.9h6.1v14.7h-6.1zM2245.5 480.9h6.1v14.7h-6.1zM2251.6 480.9h5.8v14.7h-5.8zM2257.4 480.9h5.8v14.7h-5.8zM802.4 495.6h11.6v14.7h-11.6zM1218.4 495.6h9.3v14.7h-9.3zM1537.0 495.6h7.8v14.7h-7.8zM1990.5 495.6h6.6v14.7h-6.6zM1997.0 495.6h6.6v14.7h-6.6zM2016.7 495.6h6.6v14.7h-6.6zM2105.7 495.6h6.3v14.7h-6.3zM2599.6 495.6h5.0v14.7h-5.0zM2770.8 495.6h4.8v14.7h-4.8zM530.6 510.2h12.8v14.7h-12.8zM705.5 510.2h13.1v14.7h-13.1zM790.8 510.2h11.6v14.7h-11.6zM1011.0 510.2h10.6v14.7h-10.6zM1032.0 510.2h10.3v14.7h-10.3zM1151.8 510.2h9.8v14.7h-9.8zM1990.5 510.2h6.6v14.7h-6.6zM2221.8 510.2h5.8v14.7h-5.8zM2274.8 510.2h5.8v14.7h-5.8zM2751.7 510.2h4.2v14.7h-4.2zM925.8 524.9h10.8v14.7h-10.8zM1151.8 524.9h9.8v14.7h-9.8zM1246.4 524.9h9.3v14.7h-9.3zM1327.1 524.9h8.6v14.7h-8.6zM1362.1 524.9h8.3v14.7h-8.3zM1683.5 524.9h7.3v14.7h-7.3zM1690.8 524.9h7.6v14.7h-7.6zM1778.6 524.9h7.3v14.7h-7.3zM1904.8 524.9h6.8v14.7h-6.8zM2080.5 524.9h6.3v14.7h-6.3zM2315.4 524.9h5.8v14.7h-5.8zM2588.7 524.9h5.7v14.7h-5.7zM2599.6 524.9h5.0v14.7h-5.0zM2751.7 524.9h4.2v14.7h-4.2z"/>
<path fill="#25868d" d="M936.6 246.0h11.1v14.7h-11.1zM1828.6 246.0h7.1v14.7h-7.1zM1925.2 246.0h6.8v14.7h-6.8zM2086.8 246.0h6.3v14.7h-6.3zM2105.7 246.0h6.3v14.7h-6.3zM2161.2 246.0h6.1v14.7h-6.1zM2343.6 246.0h5.5v14.7h-5.5zM2377.4 246.0h5.5v14.7h-5.5zM2520.0 246.0h5.3v14.7h-5.3zM2609.7 246.0h4.8v14.7h-4.8zM349.9 260.7h12.8v14.7h-12.8zM645.3 260.7h12.1v14.7h-12.1zM1112.7 260.7h9.8v14.7h-9.8zM1122.6 260.7h9.8v14.7h-9.8zM1310.0 260.7h8.8v14.7h-8.8zM1925.2 260.7h6.8v14.7h-6.8zM2690.9 260.7h5.7v14.7h-5.7zM2775.6 260.7h5.2v14.7h-5.2zM2824.3 260.7h4.8v14.7h-4.8zM2829.1 260.7h4.8v14.7h-4.8zM1218.4 275.4h9.3v14.7h-9.3zM1255.8 275.4h8.8v14.7h-8.8zM2286.4 275.4h5.8v14.7h-5.8zM374.8 290.0h13.5v14.7h-13.5zM893.0 290.0h10.8v14.7h-10.8zM1300.9 290.0h9.1v14.7h-9.1zM1925.2 290.0h6.8v14.7h-6.8zM299.4 304.7h12.4v14.7h-12.4zM362.7 304.7h12.1v14.7h-12.1zM1000.7 304.7h10.3v14.7h-10.3zM324.6 319.4h12.8v14.7h-12.8zM969.2 319.4h10.6v14.7h-10.6zM1413.6 319.4h8.3v14.7h-8.3zM1370.5 334.1h8.8v14.7h-8.8zM2298.0 334.1h5.8v14.7h-5.8zM2303.8 334.1h5.8v14.7h-5.8zM2541.2 334.1h5.3v14.7h-5.3zM814.0 348.8h11.4v14.7h-11.4zM1749.6 348.8h7.3v14.7h-7.3zM1884.3 348.8h6.8v14.7h-6.8zM2112.0 348.8h6.3v14.7h-6.3zM337.4 363.4h12.4v14.7h-12.4zM414.1 363.4h12.4v14.7h-12.4zM619.7 363.4h12.8v14.7h-12.8zM814.0 363.4h11.4v14.7h-11.4zM871.0 363.4h10.6v14.7h-10.6zM893.0 363.4h10.8v14.7h-10.8zM1828.6 363.4h7.1v14.7h-7.1zM1977.6 363.4h6.6v14.7h-6.6zM401.0 378.1h13.1v14.7h-13.1zM1132.4 378.1h9.8v14.7h-9.8zM1142.2 378.1h9.6v14.7h-9.6zM1151.8 378.1h9.8v14.7h-9.8zM1264.6 378.1h9.1v14.7h-9.1zM1439.1 378.1h8.3v14.7h-8.3zM1447.4 378.1h8.3v14.7h-8.3zM1828.6 378.1h7.1v14.7h-7.1zM1938.6 378.1h6.8v14.7h-6.8zM2326.7 378.1h5.8v14.7h-5.8zM2383.0 378.1h5.5v14.7h-5.5zM2530.6 378.1h5.3v14.7h-5.3zM2755.9 378.1h5.2v14.7h-5.2zM2761.0 378.1h5.4v14.7h-5.4zM754.7 392.8h12.4v14.7h-12.4zM969.2 392.8h10.6v14.7h-10.6zM979.8 392.8h10.6v14.7h-10.6zM1727.7 392.8h7.3v14.7h-7.3zM2055.3 392.8h6.3v14.7h-6.3zM2167.3 392.8h6.1v14.7h-6.1zM2619.6 392.8h5.4v14.7h-5.4zM1291.8 407.5h9.1v14.7h-9.1zM1971.0 407.5h6.6v14.7h-6.6zM2118.4 407.5h6.1v14.7h-6.1zM2726.6 407.5h4.8v14.7h-4.8zM1142.2 422.2h9.6v14.7h-9.6zM1971.0 422.2h6.6v14.7h-6.6zM682.0 436.8h12.4v14.7h-12.4zM925.8 436.8h10.8v14.7h-10.8zM1645.9 436.8h7.6v14.7h-7.6zM2829.1 436.8h4.8v14.7h-4.8zM1630.8 451.5h7.6v14.7h-7.6zM730.8 466.2h11.6v14.7h-11.6zM1447.4 466.2h8.3v14.7h-8.3zM1480.4 466.2h8.1v14.7h-8.1zM2257.4 466.2h5.8v14.7h-5.8zM958.6 480.9h10.6v14.7h-10.6zM1062.5 480.9h10.1v14.7h-10.1zM1388.1 480.9h8.6v14.7h-8.6zM1488.5 480.9h8.1v14.7h-8.1zM2721.5 480.9h5.2v14.7h-5.2zM414.1 495.6h12.4v14.7h-12.4zM1488.5 495.6h8.1v14.7h-8.1zM718.7 510.2h12.1v14.7h-12.1zM1132.4 510.2h9.8v14.7h-9.8zM1237.1 510.2h9.3v14.7h-9.3zM1273.7 510.2h9.1v14.7h-9.1zM1683.5 510.2h7.3v14.7h-7.3zM2770.8 510.2h4.8v14.7h-4.8zM324.6 524.9h12.8v14.7h-12.8zM401.0 524.9h13.1v14.7h-13.1zM414.1 524.9h12.4v14.7h-12.4zM543.4 524.9h12.8v14.7h-12.8zM594.5 524.9h12.8v14.7h-12.8zM767.1 524.9h12.1v14.7h-12.1zM979.8 524.9h10.6v14.7h-10.6zM1430.5 524.9h8.6v14.7h-8.6zM1496.6 524.9h8.1v14.7h-8.1zM1898.0 524.9h6.8v14.7h-6.8zM2332.5 524.9h5.5v14.7h-5.5zM2366.1 524.9h5.8v14.7h-5.8zM2594.4 524.9h5.2v14.7h-5.2zM2755.9 524.9h5.2v14.7h-5.2z"/>
<path fill="#248b8c" d="M914.9 246.0h10.8v14.7h-10.8zM1171.2 246.0h9.6v14.7h-9.6zM1396.7 246.0h8.6v14.7h-8.6zM1472.1 246.0h8.3v14.7h-8.3zM1742.3 246.0h7.3v14.7h-7.3zM2167.3 246.0h6.1v14.7h-6.1zM2173.4 246.0h6.1v14.7h-6.1zM2338.1 246.0h5.5v14.7h-5.5zM1388.1 275.4h8.6v14.7h-8.6zM1447.4 275.4h8.3v14.7h-8.3zM2332.5 304.7h5.5v14.7h-5.5zM2099.4 319.4h6.3v14.7h-6.3zM2770.8 319.4h4.8v14.7h-4.8zM1528.9 334.1h8.1v14.7h-8.1zM337.4 348.8h12.4v14.7h-12.4zM1227.7 348.8h9.3v14.7h-9.3zM2292.2 348.8h5.8v14.7h-5.8zM1122.6 363.4h9.8v14.7h-9.8zM1255.8 363.4h8.8v14.7h-8.8zM1379.3 363.4h8.8v14.7h-8.8zM1480.4 363.4h8.1v14.7h-8.1zM2321.2 363.4h5.5v14.7h-5.5zM2326.7 363.4h5.8v14.7h-5.8zM1480.4 378.1h8.1v14.7h-8.1zM1749.6 378.1h7.3v14.7h-7.3zM1756.9 378.1h7.3v14.7h-7.3zM1856.6 378.1h7.1v14.7h-7.1zM1977.6 378.1h6.6v14.7h-6.6zM2321.2 378.1h5.5v14.7h-5.5zM1430.5 392.8h8.6v14.7h-8.6zM1439.1 392.8h8.3v14.7h-8.3zM1447.4 392.8h8.3v14.7h-8.3zM1756.9 392.8h7.3v14.7h-7.3zM1764.2 392.8h7.3v14.7h-7.3zM2191.5 392.8h6.1v14.7h-6.1zM2761.0 392.8h5.4v14.7h-5.4zM2770.8 407.5h4.8v14.7h-4.8zM2775.6 407.5h5.2v14.7h-5.2zM694.4 436.8h11.1v14.7h-11.1zM452.8 451.5h13.1v14.7h-13.1zM543.4 451.5h12.8v14.7h-12.8zM814.0 466.2h11.4v14.7h-11.4zM969.2 466.2h10.6v14.7h-10.6zM1062.5 466.2h10.1v14.7h-10.1zM1199.7 466.2h9.3v14.7h-9.3zM1237.1 466.2h9.3v14.7h-9.3zM1439.1 466.2h8.3v14.7h-8.3zM1488.5 466.2h8.1v14.7h-8.1zM2795.6 466.2h4.8v14.7h-4.8zM645.3 495.6h12.1v14.7h-12.1zM871.0 495.6h10.6v14.7h-10.6zM1690.8 510.2h7.6v14.7h-7.6zM2755.9 510.2h5.2v14.7h-5.2zM2761.0 510.2h5.4v14.7h-5.4zM607.3 524.9h12.4v14.7h-12.4zM779.2 524.9h11.6v14.7h-11.6zM881.6 524.9h11.4v14.7h-11.4zM1142.2 524.9h9.6v14.7h-9.6zM1932.0 524.9h6.6v14.7h-6.6zM2321.2 524.9h5.5v14.7h-5.5zM2711.5 524.9h5.2v14.7h-5.2zM2833.8 524.9h4.8v14.7h-4.8z"/>
<path fill="#22908c" d="M825.4 246.0h11.6v14.7h-11.6zM1353.3 246.0h8.8v14.7h-8.8zM1645.9 246.0h7.6v14.7h-7.6zM2179.4 246.0h6.1v14.7h-6.1zM2790.7 260.7h5.0v14.7h-5.0zM337.4 275.4h12.4v14.7h-12.4zM337.4 334.1h12.4v14.7h-12.4zM2405.2 334.1h5.5v14.7h-5.5zM2546.5 334.1h5.3v14.7h-5.3zM779.2 348.8h11.6v14.7h-11.6zM1112.7 363.4h9.8v14.7h-9.8zM582.0 392.8h12.4v14.7h-12.4zM1911.6 392.8h6.8v14.7h-6.8zM1379.3 407.5h8.8v14.7h-8.8zM1396.7 407.5h8.6v14.7h-8.6zM2239.4 407.5h6.1v14.7h-6.1zM1062.5 451.5h10.1v14.7h-10.1zM2263.2 466.2h5.8v14.7h-5.8zM1447.4 480.9h8.3v14.7h-8.3zM1480.4 495.6h8.1v14.7h-8.1zM414.1 510.2h12.4v14.7h-12.4zM2766.4 510.2h4.4v14.7h-4.4zM936.6 524.9h11.1v14.7h-11.1zM1335.6 524.9h8.8v14.7h-8.8zM2338.1 524.9h5.5v14.7h-5.5zM2343.6 524.9h5.5v14.7h-5.5zM2716.7 524.9h4.8v14.7h-4.8z"/>
<path fill="#21958b" d="M466.0 246.0h12.8v14.7h-12.8zM1112.7 246.0h9.8v14.7h-9.8zM2487.7 246.0h5.3v14.7h-5.3zM1488.5 304.7h8.1v14.7h-8.1zM2003.6 304.7h6.6v14.7h-6.6zM2405.2 319.4h5.5v14.7h-5.5zM2010.1 334.1h6.6v14.7h-6.6zM2167.3 334.1h6.1v14.7h-6.1zM754.7 348.8h12.4v14.7h-12.4zM1000.7 392.8h10.3v14.7h-10.3zM1749.6 392.8h7.3v14.7h-7.3zM2239.4 392.8h6.1v14.7h-6.1zM2755.9 392.8h5.2v14.7h-5.2zM2614.5 436.8h5.2v14.7h-5.2zM969.2 480.9h10.6v14.7h-10.6zM1396.7 480.9h8.6v14.7h-8.6zM362.7 495.6h12.1v14.7h-12.1zM1264.6 510.2h9.1v14.7h-9.1zM1568.7 510.2h7.8v14.7h-7.8zM2042.4 524.9h6.3v14.7h-6.3zM2221.8 524.9h5.8v14.7h-5.8zM2838.6 524.9h5.2v14.7h-5.2z"/>
<path fill="#209a8a" d="M299.4 246.0h12.4v14.7h-12.4zM1052.4 246.0h10.1v14.7h-10.1zM2594.4 246.0h5.2v14.7h-5.2zM2599.6 246.0h5.0v14.7h-5.0zM2650.8 246.0h4.8v14.7h-4.8zM2655.5 246.0h5.2v14.7h-5.2zM2003.6 290.0h6.6v14.7h-6.6zM1771.6 304.7h7.1v14.7h-7.1zM491.9 319.4h13.1v14.7h-13.1zM324.6 334.1h12.8v14.7h-12.8zM1735.0 334.1h7.3v14.7h-7.3zM1388.1 363.4h8.6v14.7h-8.6zM779.2 378.1h11.6v14.7h-11.6zM1396.7 378.1h8.6v14.7h-8.6zM426.6 392.8h13.1v14.7h-13.1zM1735.0 466.2h7.3v14.7h-7.3zM530.6 495.6h12.8v14.7h-12.8zM694.4 524.9h11.1v14.7h-11.1zM1161.7 524.9h9.6v14.7h-9.6zM1255.8 524.9h8.8v14.7h-8.8z"/>
<path fill="#20a088" d="M374.8 246.0h13.5v14.7h-13.5zM2614.5 246.0h5.2v14.7h-5.2zM439.7 304.7h13.1v14.7h-13.1zM1863.6 392.8h6.8v14.7h-6.8zM1388.1 407.5h8.6v14.7h-8.6zM802.4 436.8h11.6v14.7h-11.6zM556.1 466.2h13.1v14.7h-13.1zM705.5 524.9h13.1v14.7h-13.1zM2675.6 524.9h5.7v14.7h-5.7z"/>
<path fill="#24a485" d="M657.4 363.4h12.8v14.7h-12.8zM1370.5 378.1h8.8v14.7h-8.8zM1379.3 378.1h8.8v14.7h-8.8zM1396.7 392.8h8.6v14.7h-8.6zM530.6 524.9h12.8v14.7h-12.8zM2671.8 524.9h3.8v14.7h-3.8z"/>
<path fill="#29a982" d="M337.4 246.0h12.4v14.7h-12.4zM1370.5 392.8h8.8v14.7h-8.8zM1891.1 451.5h6.8v14.7h-6.8z"/>
<path fill="#2dae7f" d="M1984.1 378.1h6.3v14.7h-6.3zM1379.3 392.8h8.8v14.7h-8.8z"/>
<path fill="#77d052" d="M1863.6 495.6h6.8v14.7h-6.8z"/>
<path fill="#84d34a" d="M1388.1 378.1h8.6v14.7h-8.6z"/>
<path fill="#badf2b" d="M1388.1 392.8h8.6v14.7h-8.6z"/>
</g>
<rect x="207" y="244.8" width="12" height="2.4" fill="#444"/>
<text x="202" y="255.1" font-size="26.7" text-anchor="end">10</text>
<rect x="207" y="318.2" width="12" height="2.4" fill="#444"/>
<text x="202" y="328.5" font-size="26.7" text-anchor="end">5</text>
<rect x="207" y="391.6" width="12" height="2.4" fill="#444"/>
<text x="202" y="401.9" font-size="26.7" text-anchor="end">0</text>
<rect x="207" y="465.0" width="12" height="2.4" fill="#444"/>
<text x="202" y="475.3" font-size="26.7" text-anchor="end">−5</text>
<rect x="207" y="538.4" width="12" height="2.4" fill="#444"/>
<text x="202" y="548.7" font-size="26.7" text-anchor="end">−10</text>
<text transform="translate(135.4 392.8) rotate(-90)" font-size="31.2" text-anchor="middle">y [pix]</text>
<rect x="2964" y="246" width="239" height="293.6" fill="#fff"/>
<g clip-path="url(#cm)"><g transform="translate(2900 230) scale(0.25233)">
<rect x="440.5" y="60" width="9" height="1170" fill="#e2e8f0"/>
<rect x="756.5" y="60" width="9" height="1170" fill="#e2e8f0"/>
<rect x="1070.5" y="60" width="9" height="1170" fill="#e2e8f0"/>
<rect x="250" y="349.5" width="960" height="9" fill="#e2e8f0"/>
<rect x="250" y="930.5" width="960" height="9" fill="#e2e8f0"/>
<path fill="#ef4444" fill-opacity="0.3" d="M449 526H550V585H1070V643H1075V701H525V759H475V817H449Z"/>
<rect x="250" y="642.5" width="960" height="7" fill="#3a3a3a"/>
<g fill="none" stroke="#0f172a" stroke-width="13" stroke-linejoin="miter">
<path d="M200 120H428V178H290V236H200"/>
<path d="M200 468H467V526H550V585H1070V643H1075V701H525V759H475V817H712V875H200"/>
<path d="M200 933H565V991H552V1049H620V1107H397V1165H200"/>
</g>
<rect x="440" y="60" width="9" height="1170" fill="#e2e8f0"/>
</g></g>
<rect x="221" y="646" width="2684" height="933.5" fill="#fff"/>
<rect x="425.4" y="646" width="2.4" height="933.5" fill="#e2e8f0"/>
<rect x="744.9" y="646" width="2.4" height="933.5" fill="#e2e8f0"/>
<rect x="1064.4" y="646" width="2.4" height="933.5" fill="#e2e8f0"/>
<rect x="1383.9" y="646" width="2.4" height="933.5" fill="#e2e8f0"/>
<rect x="1703.4" y="646" width="2.4" height="933.5" fill="#e2e8f0"/>
<rect x="2022.9" y="646" width="2.4" height="933.5" fill="#e2e8f0"/>
<rect x="2342.4" y="646" width="2.4" height="933.5" fill="#e2e8f0"/>
<rect x="2661.9" y="646" width="2.4" height="933.5" fill="#e2e8f0"/>
<rect x="221" y="742.6" width="2684" height="2.4" fill="#e2e8f0"/>
<rect x="221" y="903.2" width="2684" height="2.4" fill="#e2e8f0"/>
<rect x="221" y="1063.8" width="2684" height="2.4" fill="#e2e8f0"/>
<rect x="221" y="1224.4" width="2684" height="2.4" fill="#e2e8f0"/>
<rect x="221" y="1385.0" width="2684" height="2.4" fill="#e2e8f0"/>
<rect x="221" y="1545.6" width="2684" height="2.4" fill="#e2e8f0"/>
<g clip-path="url(#cs)">
<path d="M257.0 -2700.0L262.7 -2700.0L262.7 994.6L274.8 994.6L274.8 827.1L287.0 827.1L287.0 1033.7L299.4 1033.7L299.4 1305.5L311.9 1305.5L311.9 1063.5L324.6 1063.5L324.6 1205.9L337.4 1205.9L337.4 1377.8L349.9 1377.8L349.9 992.9L362.7 992.9L362.7 925.0L374.8 925.0L374.8 1057.1L388.2 1057.1L388.2 1053.4L401.0 1053.4L401.0 1275.7L414.1 1275.7L414.1 947.1L426.6 947.1L426.6 847.3L439.7 847.3L439.7 995.3L452.8 995.3L452.8 1285.7L466.0 1285.7L466.0 1169.3L478.7 1169.3L478.7 1055.5L491.9 1055.5L491.9 1090.4L505.0 1090.4L505.0 934.5L517.8 934.5L517.8 1014.4L530.6 1014.4L530.6 1255.5L543.4 1255.5L543.4 1189.3L556.1 1189.3L556.1 1238.7L569.3 1238.7L569.3 1141.6L582.0 1141.6L582.0 977.6L594.5 977.6L594.5 1247.2L607.3 1247.2L607.3 1099.1L619.7 1099.1L619.7 1057.0L632.5 1057.0L632.5 1209.4L645.3 1209.4L645.3 1009.8L657.4 1009.8L657.4 1096.9L670.2 1096.9L670.2 1316.9L682.0 1316.9L682.0 1309.3L694.4 1309.3L694.4 1211.8L705.5 1211.8L705.5 1253.6L718.7 1253.6L718.7 1182.7L730.8 1182.7L730.8 1269.0L742.4 1269.0L742.4 1319.7L754.7 1319.7L754.7 1319.4L767.1 1319.4L767.1 1167.9L779.2 1167.9L779.2 1086.0L790.8 1086.0L790.8 1254.0L802.4 1254.0L802.4 1131.6L814.0 1131.6L814.0 1171.7L825.4 1171.7L825.4 1334.4L837.0 1334.4L837.0 1264.3L848.1 1264.3L848.1 1222.4L859.4 1222.4L859.4 1112.3L871.0 1112.3L871.0 1329.8L881.6 1329.8L881.6 1322.0L893.0 1322.0L893.0 1186.0L903.8 1186.0L903.8 1269.5L914.9 1269.5L914.9 1244.1L925.8 1244.1L925.8 1168.6L936.6 1168.6L936.6 1207.9L947.7 1207.9L947.7 1270.4L958.6 1270.4L958.6 1104.2L969.2 1104.2L969.2 1201.4L979.8 1201.4L979.8 1296.2L990.4 1296.2L990.4 1173.3L1000.7 1173.3L1000.7 1258.3L1011.0 1258.3L1011.0 1317.6L1021.6 1317.6L1021.6 1266.8L1032.0 1266.8L1032.0 1220.7L1042.3 1220.7L1042.3 1311.0L1052.4 1311.0L1052.4 1277.8L1062.5 1277.8L1062.5 1357.3L1072.6 1357.3L1072.6 1278.9L1082.7 1278.9L1082.7 1356.5L1092.8 1356.5L1092.8 1239.6L1102.9 1239.6L1102.9 1245.3L1112.7 1245.3L1112.7 1333.2L1122.6 1333.2L1122.6 1172.7L1132.4 1172.7L1132.4 1238.2L1142.2 1238.2L1142.2 1253.1L1151.8 1253.1L1151.8 1245.5L1161.7 1245.5L1161.7 1183.6L1171.2 1183.6L1171.2 1324.0L1180.8 1324.0L1180.8 1315.9L1190.2 1315.9L1190.2 1350.8L1199.7 1350.8L1199.7 1268.0L1209.1 1268.0L1209.1 1253.7L1218.4 1253.7L1218.4 1351.3L1227.7 1351.3L1227.7 1350.7L1237.1 1350.7L1237.1 1274.3L1246.4 1274.3L1246.4 1233.6L1255.8 1233.6L1255.8 1212.8L1264.6 1212.8L1264.6 1341.1L1273.7 1341.1L1273.7 1353.2L1282.7 1353.2L1282.7 1326.8L1291.8 1326.8L1291.8 1258.6L1300.9 1258.6L1300.9 1290.6L1310.0 1290.6L1310.0 1251.6L1318.8 1251.6L1318.8 1374.5L1327.1 1374.5L1327.1 1275.9L1335.6 1275.9L1335.6 1200.0L1344.5 1200.0L1344.5 1301.0L1353.3 1301.0L1353.3 1221.4L1362.1 1221.4L1362.1 1242.6L1370.5 1242.6L1370.5 1051.7L1379.3 1051.7L1379.3 1042.4L1388.1 1042.4L1388.1 689.7L1396.7 689.7L1396.7 1054.6L1405.3 1054.6L1405.3 1296.2L1413.6 1296.2L1413.6 1397.9L1421.9 1397.9L1421.9 1379.8L1430.5 1379.8L1430.5 1214.6L1439.1 1214.6L1439.1 1193.3L1447.4 1193.3L1447.4 1231.2L1455.7 1231.2L1455.7 1286.7L1463.8 1286.7L1463.8 1264.4L1472.1 1264.4L1472.1 1268.7L1480.4 1268.7L1480.4 1235.9L1488.5 1235.9L1488.5 1339.7L1496.6 1339.7L1496.6 1269.2L1504.7 1269.2L1504.7 1349.8L1512.7 1349.8L1512.7 1258.4L1520.8 1258.4L1520.8 1327.0L1528.9 1327.0L1528.9 1264.5L1537.0 1264.5L1537.0 1208.4L1544.8 1208.4L1544.8 1254.0L1552.8 1254.0L1552.8 1240.5L1560.9 1240.5L1560.9 1309.6L1568.7 1309.6L1568.7 1293.2L1576.6 1293.2L1576.6 1295.2L1584.4 1295.2L1584.4 1253.1L1592.2 1253.1L1592.2 1267.3L1600.0 1267.3L1600.0 1279.2L1607.8 1279.2L1607.8 1338.7L1615.4 1338.7L1615.4 1335.1L1623.0 1335.1L1623.0 1254.4L1630.8 1254.4L1630.8 1342.8L1638.4 1342.8L1638.4 1317.6L1645.9 1317.6L1645.9 1279.8L1653.5 1279.8L1653.5 1255.2L1661.1 1255.2L1661.1 1315.4L1668.6 1315.4L1668.6 1234.1L1676.0 1234.1L1676.0 1182.2L1683.5 1182.2L1683.5 1265.5L1690.8 1265.5L1690.8 1256.9L1698.4 1256.9L1698.4 1351.7L1705.7 1351.7L1705.7 1348.5L1713.0 1348.5L1713.0 1351.3L1720.4 1351.3L1720.4 1348.5L1727.7 1348.5L1727.7 1341.5L1735.0 1341.5L1735.0 1434.9L1742.3 1434.9L1742.3 1293.6L1749.6 1293.6L1749.6 1201.9L1756.9 1201.9L1756.9 1303.5L1764.2 1303.5L1764.2 1275.2L1771.6 1275.2L1771.6 1315.0L1778.6 1315.0L1778.6 1218.3L1785.9 1218.3L1785.9 1265.9L1793.0 1265.9L1793.0 1351.2L1800.3 1351.2L1800.3 1318.3L1807.4 1318.3L1807.4 1208.6L1814.5 1208.6L1814.5 1388.9L1821.5 1388.9L1821.5 1234.0L1828.6 1234.0L1828.6 1331.5L1835.6 1331.5L1835.6 1364.2L1842.7 1364.2L1842.7 1345.8L1849.5 1345.8L1849.5 1396.6L1856.6 1396.6L1856.6 1329.5L1863.6 1329.5L1863.6 1240.2L1870.5 1240.2L1870.5 1366.3L1877.5 1366.3L1877.5 1242.6L1884.3 1242.6L1884.3 1210.0L1891.1 1210.0L1891.1 1360.8L1898.0 1360.8L1898.0 1393.9L1904.8 1393.9L1904.8 1347.4L1911.6 1347.4L1911.6 1298.5L1918.4 1298.5L1918.4 1261.3L1925.2 1261.3L1925.2 1331.2L1932.0 1331.2L1932.0 1308.8L1938.6 1308.8L1938.6 1191.0L1945.4 1191.0L1945.4 1276.9L1951.9 1276.9L1951.9 1279.9L1957.7 1279.9L1957.7 1262.6L1964.5 1262.6L1964.5 1366.9L1971.0 1366.9L1971.0 1307.1L1977.6 1307.1L1977.6 1225.5L1984.1 1225.5L1984.1 1041.6L1990.5 1041.6L1990.5 1162.4L1997.0 1162.4L1997.0 1313.7L2003.6 1313.7L2003.6 1329.1L2010.1 1329.1L2010.1 1316.1L2016.7 1316.1L2016.7 1240.8L2023.2 1240.8L2023.2 1333.0L2029.8 1333.0L2029.8 1300.3L2036.1 1300.3L2036.1 1319.4L2042.4 1319.4L2042.4 1300.2L2048.7 1300.2L2048.7 1348.9L2055.3 1348.9L2055.3 1335.8L2061.6 1335.8L2061.6 1186.3L2067.9 1186.3L2067.9 1210.0L2074.2 1210.0L2074.2 1301.2L2080.5 1301.2L2080.5 1278.2L2086.8 1278.2L2086.8 1358.6L2093.1 1358.6L2093.1 1259.4L2099.4 1259.4L2099.4 1294.7L2105.7 1294.7L2105.7 1313.5L2112.0 1313.5L2112.0 1353.4L2118.4 1353.4L2118.4 1282.8L2124.4 1282.8L2124.4 1279.0L2130.7 1279.0L2130.7 1371.0L2136.8 1371.0L2136.8 1438.5L2143.1 1438.5L2143.1 1337.6L2149.1 1337.6L2149.1 1349.5L2155.2 1349.5L2155.2 1317.1L2161.2 1317.1L2161.2 1413.5L2167.3 1413.5L2167.3 1412.2L2173.4 1412.2L2173.4 1364.3L2179.4 1364.3L2179.4 1264.2L2185.5 1264.2L2185.5 1317.9L2191.5 1317.9L2191.5 1410.1L2197.6 1410.1L2197.6 1414.7L2203.6 1414.7L2203.6 1292.2L2209.7 1292.2L2209.7 1220.9L2215.7 1220.9L2215.7 1311.8L2221.8 1311.8L2221.8 1269.6L2227.6 1269.6L2227.6 1408.6L2233.6 1408.6L2233.6 1184.4L2239.4 1184.4L2239.4 1182.3L2245.5 1182.3L2245.5 1157.4L2251.6 1157.4L2251.6 1371.9L2257.4 1371.9L2257.4 1304.1L2263.2 1304.1L2263.2 1310.7L2269.0 1310.7L2269.0 1243.5L2274.8 1243.5L2274.8 1208.2L2280.6 1208.2L2280.6 1281.7L2286.4 1281.7L2286.4 1267.4L2292.2 1267.4L2292.2 1272.4L2298.0 1272.4L2298.0 1313.8L2303.8 1313.8L2303.8 1316.2L2309.6 1316.2L2309.6 1320.8L2315.4 1320.8L2315.4 1262.1L2321.2 1262.1L2321.2 1281.0L2326.7 1281.0L2326.7 1350.4L2332.5 1350.4L2332.5 1260.7L2338.1 1260.7L2338.1 1266.0L2343.6 1266.0L2343.6 1352.6L2349.2 1352.6L2349.2 1349.2L2355.0 1349.2L2355.0 1270.1L2360.5 1270.1L2360.5 1264.6L2366.1 1264.6L2366.1 1241.2L2371.9 1241.2L2371.9 1394.5L2377.4 1394.5L2377.4 1357.5L2383.0 1357.5L2383.0 1264.2L2388.5 1264.2L2388.5 1354.6L2394.1 1354.6L2394.1 1389.9L2399.6 1389.9L2399.6 1403.1L2405.2 1403.1L2405.2 1373.3L2410.7 1373.3L2410.7 1331.9L2416.3 1331.9L2416.3 1304.4L2421.8 1304.4L2421.8 1210.6L2427.4 1210.6L2427.4 1253.7L2432.9 1253.7L2432.9 1371.4L2438.5 1371.4L2438.5 1364.0L2444.0 1364.0L2444.0 1304.8L2449.6 1304.8L2449.6 1191.5L2455.1 1191.5L2455.1 1252.2L2460.4 1252.2L2460.4 1348.6L2466.0 1348.6L2466.0 1310.3L2471.5 1310.3L2471.5 1396.6L2476.8 1396.6L2476.8 1306.0L2482.4 1306.0L2482.4 1310.4L2487.7 1310.4L2487.7 1315.9L2493.0 1315.9L2493.0 1364.2L2498.5 1364.2L2498.5 1240.1L2503.8 1240.1L2503.8 1187.9L2509.4 1187.9L2509.4 1251.1L2514.7 1251.1L2514.7 1314.4L2520.0 1314.4L2520.0 1335.2L2525.3 1335.2L2525.3 1290.0L2530.6 1290.0L2530.6 1437.2L2535.9 1437.2L2535.9 1236.3L2541.2 1236.3L2541.2 1340.4L2546.5 1340.4L2546.5 1256.1L2551.8 1256.1L2551.8 1313.7L2557.1 1313.7L2557.1 1393.8L2562.4 1393.8L2562.4 1319.6L2567.6 1319.6L2567.6 1305.4L2573.0 1305.4L2573.0 1283.9L2578.5 1283.9L2578.5 1225.3L2583.3 1225.3L2583.3 1330.6L2588.7 1330.6L2588.7 1157.2L2594.4 1157.2L2594.4 1285.8L2599.6 1285.8L2599.6 1275.7L2604.5 1275.7L2604.5 1158.7L2609.7 1158.7L2609.7 1237.6L2614.5 1237.6L2614.5 1336.6L2619.6 1336.6L2619.6 1432.3L2625.0 1432.3L2625.0 1332.8L2630.3 1332.8L2630.3 1373.3L2635.5 1373.3L2635.5 1392.2L2640.6 1392.2L2640.6 1202.7L2645.0 1202.7L2645.0 1199.3L2650.8 1199.3L2650.8 1178.6L2655.5 1178.6L2655.5 1376.9L2660.7 1376.9L2660.7 1434.1L2666.1 1434.1L2666.1 1169.8L2671.8 1169.8L2671.8 1223.7L2675.6 1223.7L2675.6 1409.3L2681.3 1409.3L2681.3 1264.7L2686.5 1264.7L2686.5 1093.6L2690.9 1093.6L2690.9 1066.4L2696.6 1066.4L2696.6 1090.7L2701.4 1090.7L2701.4 1344.1L2706.2 1344.1L2706.2 1239.6L2711.5 1239.6L2711.5 1021.3L2716.7 1021.3L2716.7 1319.4L2721.5 1319.4L2721.5 1215.9L2726.6 1215.9L2726.6 1398.5L2731.4 1398.5L2731.4 1236.2L2736.2 1236.2L2736.2 1415.7L2741.5 1415.7L2741.5 1352.4L2746.7 1352.4L2746.7 1241.7L2751.7 1241.7L2751.7 1000.9L2755.9 1000.9L2755.9 1364.6L2761.0 1364.6L2761.0 1328.1L2766.4 1328.1L2766.4 1159.3L2770.8 1159.3L2770.8 1168.5L2775.6 1168.5L2775.6 1125.7L2780.7 1125.7L2780.7 1328.4L2785.5 1328.4L2785.5 1288.9L2790.7 1288.9L2790.7 1315.4L2795.6 1315.4L2795.6 1229.2L2800.4 1229.2L2800.4 1277.6L2805.2 1277.6L2805.2 1314.0L2809.8 1314.0L2809.8 1392.3L2814.5 1392.3L2814.5 1229.8L2819.5 1229.8L2819.5 1130.4L2824.3 1130.4L2824.3 1033.3L2829.1 1033.3L2829.1 1389.3L2833.8 1389.3L2833.8 1262.3L2838.6 1262.3L2838.6 1176.5L2843.8 1176.5L2843.8 1187.7L2848.6 1187.7L2848.6 1008.7L2854.3 1008.7L2854.3 1037.3L2855.8 1037.3L2855.8 1403.8L2854.3 1403.8L2854.3 1377.6L2848.6 1377.6L2848.6 1511.7L2843.8 1511.7L2843.8 1485.8L2838.6 1485.8L2838.6 1564.8L2833.8 1564.8L2833.8 1673.9L2829.1 1673.9L2829.1 1325.6L2824.3 1325.6L2824.3 1433.7L2819.5 1433.7L2819.5 1502.1L2814.5 1502.1L2814.5 1665.2L2809.8 1665.2L2809.8 1568.5L2805.2 1568.5L2805.2 1525.7L2800.4 1525.7L2800.4 1476.6L2795.6 1476.6L2795.6 1549.1L2790.7 1549.1L2790.7 1519.0L2785.5 1519.0L2785.5 1559.8L2780.7 1559.8L2780.7 1351.6L2775.6 1351.6L2775.6 1397.5L2770.8 1397.5L2770.8 1381.1L2766.4 1381.1L2766.4 1554.4L2761.0 1554.4L2761.0 1586.7L2755.9 1586.7L2755.9 1224.9L2751.7 1224.9L2751.7 1457.7L2746.7 1457.7L2746.7 1557.9L2741.5 1557.9L2741.5 1620.0L2736.2 1620.0L2736.2 1445.6L2731.4 1445.6L2731.4 1615.0L2726.6 1615.0L2726.6 1426.5L2721.5 1426.5L2721.5 1519.1L2716.7 1519.1L2716.7 1226.8L2711.5 1226.8L2711.5 1433.5L2706.2 1433.5L2706.2 1529.9L2701.4 1529.9L2701.4 1280.4L2696.6 1280.4L2696.6 1259.6L2690.9 1259.6L2690.9 1274.8L2686.5 1274.8L2686.5 1445.0L2681.3 1445.0L2681.3 1594.7L2675.6 1594.7L2675.6 1402.7L2671.8 1402.7L2671.8 1337.7L2666.1 1337.7L2666.1 1611.9L2660.7 1611.9L2660.7 1558.3L2655.5 1558.3L2655.5 1354.9L2650.8 1354.9L2650.8 1386.5L2645.0 1386.5L2645.0 1375.9L2640.6 1375.9L2640.6 1580.5L2635.5 1580.5L2635.5 1549.3L2630.3 1549.3L2630.3 1504.2L2625.0 1504.2L2625.0 1613.7L2619.6 1613.7L2619.6 1514.5L2614.5 1514.5L2614.5 1422.0L2609.7 1422.0L2609.7 1348.9L2604.5 1348.9L2604.5 1453.9L2599.6 1453.9L2599.6 1475.5L2594.4 1475.5L2594.4 1343.1L2588.7 1343.1L2588.7 1503.3L2583.3 1503.3L2583.3 1413.4L2578.5 1413.4L2578.5 1463.2L2573.0 1463.2L2573.0 1483.4L2567.6 1483.4L2567.6 1495.5L2562.4 1495.5L2562.4 1579.2L2557.1 1579.2L2557.1 1491.4L2551.8 1491.4L2551.8 1426.8L2546.5 1426.8L2546.5 1512.5L2541.2 1512.5L2541.2 1412.3L2535.9 1412.3L2535.9 1608.8L2530.6 1608.8L2530.6 1456.0L2525.3 1456.0L2525.3 1503.1L2520.0 1503.1L2520.0 1482.0L2514.7 1482.0L2514.7 1413.2L2509.4 1413.2L2509.4 1351.8L2503.8 1351.8L2503.8 1405.0L2498.5 1405.0L2498.5 1525.6L2493.0 1525.6L2493.0 1477.0L2487.7 1477.0L2487.7 1468.3L2482.4 1468.3L2482.4 1456.6L2476.8 1456.6L2476.8 1545.1L2471.5 1545.1L2471.5 1461.9L2466.0 1461.9L2466.0 1498.3L2460.4 1498.3L2460.4 1409.0L2455.1 1409.0L2455.1 1333.9L2449.6 1333.9L2449.6 1453.8L2444.0 1453.8L2444.0 1509.7L2438.5 1509.7L2438.5 1518.3L2432.9 1518.3L2432.9 1393.9L2427.4 1393.9L2427.4 1361.3L2421.8 1361.3L2421.8 1444.1L2416.3 1444.1L2416.3 1473.6L2410.7 1473.6L2410.7 1512.9L2405.2 1512.9L2405.2 1541.1L2399.6 1541.1L2399.6 1537.7L2394.1 1537.7L2394.1 1492.3L2388.5 1492.3L2388.5 1398.5L2383.0 1398.5L2383.0 1490.4L2377.4 1490.4L2377.4 1532.1L2371.9 1532.1L2371.9 1384.7L2366.1 1384.7L2366.1 1398.1L2360.5 1398.1L2360.5 1405.2L2355.0 1405.2L2355.0 1481.6L2349.2 1481.6L2349.2 1482.6L2343.6 1482.6L2343.6 1403.2L2338.1 1403.2L2338.1 1397.0L2332.5 1397.0L2332.5 1478.9L2326.7 1478.9L2326.7 1414.5L2321.2 1414.5L2321.2 1394.1L2315.4 1394.1L2315.4 1451.9L2309.6 1451.9L2309.6 1440.9L2303.8 1440.9L2303.8 1443.3L2298.0 1443.3L2298.0 1405.4L2292.2 1405.4L2292.2 1393.8L2286.4 1393.8L2286.4 1411.3L2280.6 1411.3L2280.6 1338.4L2274.8 1338.4L2274.8 1365.2L2269.0 1365.2L2269.0 1444.4L2263.2 1444.4L2263.2 1436.8L2257.4 1436.8L2257.4 1495.2L2251.6 1495.2L2251.6 1284.3L2245.5 1284.3L2245.5 1301.3L2239.4 1301.3L2239.4 1310.3L2233.6 1310.3L2233.6 1531.6L2227.6 1531.6L2227.6 1394.7L2221.8 1394.7L2221.8 1436.7L2215.7 1436.7L2215.7 1346.0L2209.7 1346.0L2209.7 1416.0L2203.6 1416.0L2203.6 1536.6L2197.6 1536.6L2197.6 1535.1L2191.5 1535.1L2191.5 1438.2L2185.5 1438.2L2185.5 1386.9L2179.4 1386.9L2179.4 1491.1L2173.4 1491.1L2173.4 1534.5L2167.3 1534.5L2167.3 1537.9L2161.2 1537.9L2161.2 1432.4L2155.2 1432.4L2155.2 1473.6L2149.1 1473.6L2149.1 1452.8L2143.1 1452.8L2143.1 1558.2L2136.8 1558.2L2136.8 1492.0L2130.7 1492.0L2130.7 1399.9L2124.4 1399.9L2124.4 1408.2L2118.4 1408.2L2118.4 1474.8L2112.0 1474.8L2112.0 1433.0L2105.7 1433.0L2105.7 1416.9L2099.4 1416.9L2099.4 1378.1L2093.1 1378.1L2093.1 1472.2L2086.8 1472.2L2086.8 1393.1L2080.5 1393.1L2080.5 1415.0L2074.2 1415.0L2074.2 1324.5L2067.9 1324.5L2067.9 1306.4L2061.6 1306.4L2061.6 1449.5L2055.3 1449.5L2055.3 1470.2L2048.7 1470.2L2048.7 1415.5L2042.4 1415.5L2042.4 1435.7L2036.1 1435.7L2036.1 1412.9L2029.8 1412.9L2029.8 1449.8L2023.2 1449.8L2023.2 1355.3L2016.7 1355.3L2016.7 1428.4L2010.1 1428.4L2010.1 1442.1L2003.6 1442.1L2003.6 1433.8L1997.0 1433.8L1997.0 1278.3L1990.5 1278.3L1990.5 1161.0L1984.1 1161.0L1984.1 1335.3L1977.6 1335.3L1977.6 1421.2L1971.0 1421.2L1971.0 1477.4L1964.5 1477.4L1964.5 1372.3L1957.7 1372.3L1957.7 1395.5L1951.9 1395.5L1951.9 1387.4L1945.4 1387.4L1945.4 1304.2L1938.6 1304.2L1938.6 1422.0L1932.0 1422.0L1932.0 1443.5L1925.2 1443.5L1925.2 1371.1L1918.4 1371.1L1918.4 1406.1L1911.6 1406.1L1911.6 1459.2L1904.8 1459.2L1904.8 1495.9L1898.0 1495.9L1898.0 1475.0L1891.1 1475.0L1891.1 1320.6L1884.3 1320.6L1884.3 1353.6L1877.5 1353.6L1877.5 1474.0L1870.5 1474.0L1870.5 1346.9L1863.6 1346.9L1863.6 1440.1L1856.6 1440.1L1856.6 1503.2L1849.5 1503.2L1849.5 1450.6L1842.7 1450.6L1842.7 1470.0L1835.6 1470.0L1835.6 1436.2L1828.6 1436.2L1828.6 1341.4L1821.5 1341.4L1821.5 1494.3L1814.5 1494.3L1814.5 1310.4L1807.4 1310.4L1807.4 1425.2L1800.3 1425.2L1800.3 1457.9L1793.0 1457.9L1793.0 1373.1L1785.9 1373.1L1785.9 1324.3L1778.6 1324.3L1778.6 1423.5L1771.6 1423.5L1771.6 1382.5L1764.2 1382.5L1764.2 1404.7L1756.9 1404.7L1756.9 1303.4L1749.6 1303.4L1749.6 1396.9L1742.3 1396.9L1742.3 1539.1L1735.0 1539.1L1735.0 1454.0L1727.7 1454.0L1727.7 1454.5L1720.4 1454.5L1720.4 1452.7L1713.0 1452.7L1713.0 1450.5L1705.7 1450.5L1705.7 1457.3L1698.4 1457.3L1698.4 1359.4L1690.8 1359.4L1690.8 1368.5L1683.5 1368.5L1683.5 1288.3L1676.0 1288.3L1676.0 1342.8L1668.6 1342.8L1668.6 1416.9L1661.1 1416.9L1661.1 1358.6L1653.5 1358.6L1653.5 1380.4L1645.9 1380.4L1645.9 1425.9L1638.4 1425.9L1638.4 1449.1L1630.8 1449.1L1630.8 1363.9L1623.0 1363.9L1623.0 1439.6L1615.4 1439.6L1615.4 1445.1L1607.8 1445.1L1607.8 1382.5L1600.0 1382.5L1600.0 1377.7L1592.2 1377.7L1592.2 1359.1L1584.4 1359.1L1584.4 1399.3L1576.6 1399.3L1576.6 1394.7L1568.7 1394.7L1568.7 1410.6L1560.9 1410.6L1560.9 1340.5L1552.8 1340.5L1552.8 1361.3L1544.8 1361.3L1544.8 1316.1L1537.0 1316.1L1537.0 1361.4L1528.9 1361.4L1528.9 1432.6L1520.8 1432.6L1520.8 1360.5L1512.7 1360.5L1512.7 1452.7L1504.7 1452.7L1504.7 1366.8L1496.6 1366.8L1496.6 1449.1L1488.5 1449.1L1488.5 1346.1L1480.4 1346.1L1480.4 1383.0L1472.1 1383.0L1472.1 1372.1L1463.8 1372.1L1463.8 1396.2L1455.7 1396.2L1455.7 1339.2L1447.4 1339.2L1447.4 1302.9L1439.1 1302.9L1439.1 1321.9L1430.5 1321.9L1430.5 1493.3L1421.9 1493.3L1421.9 1508.5L1413.6 1508.5L1413.6 1409.4L1405.3 1409.4L1405.3 1166.6L1396.7 1166.6L1396.7 804.3L1388.1 804.3L1388.1 1158.4L1379.3 1158.4L1379.3 1168.5L1370.5 1168.5L1370.5 1354.5L1362.1 1354.5L1362.1 1326.8L1353.3 1326.8L1353.3 1407.2L1344.5 1407.2L1344.5 1311.4L1335.6 1311.4L1335.6 1385.3L1327.1 1385.3L1327.1 1481.5L1318.8 1481.5L1318.8 1358.2L1310.0 1358.2L1310.0 1394.9L1300.9 1394.9L1300.9 1372.8L1291.8 1372.8L1291.8 1434.3L1282.7 1434.3L1282.7 1461.4L1273.7 1461.4L1273.7 1450.3L1264.6 1450.3L1264.6 1325.9L1255.8 1325.9L1255.8 1349.9L1246.4 1349.9L1246.4 1389.9L1237.1 1389.9L1237.1 1466.9L1227.7 1466.9L1227.7 1471.3L1218.4 1471.3L1218.4 1362.6L1209.1 1362.6L1209.1 1382.1L1199.7 1382.1L1199.7 1466.8L1190.2 1466.8L1190.2 1437.7L1180.8 1437.7L1180.8 1438.1L1171.2 1438.1L1171.2 1303.5L1161.7 1303.5L1161.7 1360.8L1151.8 1360.8L1151.8 1379.3L1142.2 1379.3L1142.2 1357.4L1132.4 1357.4L1132.4 1296.3L1122.6 1296.3L1122.6 1454.6L1112.7 1454.6L1112.7 1361.4L1102.9 1361.4L1102.9 1369.1L1092.8 1369.1L1092.8 1485.3L1082.7 1485.3L1082.7 1402.5L1072.6 1402.5L1072.6 1477.5L1062.5 1477.5L1062.5 1410.6L1052.4 1410.6L1052.4 1439.0L1042.3 1439.0L1042.3 1354.8L1032.0 1354.8L1032.0 1396.0L1021.6 1396.0L1021.6 1457.6L1011.0 1457.6L1011.0 1401.9L1000.7 1401.9L1000.7 1305.8L990.4 1305.8L990.4 1443.2L979.8 1443.2L979.8 1344.3L969.2 1344.3L969.2 1250.0L958.6 1250.0L958.6 1420.1L947.7 1420.1L947.7 1358.0L936.6 1358.0L936.6 1312.5L925.8 1312.5L925.8 1394.4L914.9 1394.4L914.9 1429.6L903.8 1429.6L903.8 1345.6L893.0 1345.6L893.0 1488.1L881.6 1488.1L881.6 1503.0L871.0 1503.0L871.0 1282.0L859.4 1282.0L859.4 1393.9L848.1 1393.9L848.1 1431.3L837.0 1431.3L837.0 1505.9L825.4 1505.9L825.4 1352.3L814.0 1352.3L814.0 1313.1L802.4 1313.1L802.4 1427.4L790.8 1427.4L790.8 1265.0L779.2 1265.0L779.2 1359.6L767.1 1359.6L767.1 1491.2L754.7 1491.2L754.7 1513.1L742.4 1513.1L742.4 1460.8L730.8 1460.8L730.8 1379.1L718.7 1379.1L718.7 1453.5L705.5 1453.5L705.5 1406.7L694.4 1406.7L694.4 1502.3L682.0 1502.3L682.0 1522.9L670.2 1522.9L670.2 1302.2L657.4 1302.2L657.4 1221.6L645.3 1221.6L645.3 1442.7L632.5 1442.7L632.5 1288.3L619.7 1288.3L619.7 1332.3L607.3 1332.3L607.3 1485.0L594.5 1485.0L594.5 1228.8L582.0 1228.8L582.0 1406.2L569.3 1406.2L569.3 1497.5L556.1 1497.5L556.1 1452.1L543.4 1452.1L543.4 1533.3L530.6 1533.3L530.6 1283.8L517.8 1283.8L517.8 1211.1L505.0 1211.1L505.0 1361.2L491.9 1361.2L491.9 1322.1L478.7 1322.1L478.7 1440.5L466.0 1440.5L466.0 1561.6L452.8 1561.6L452.8 1274.1L439.7 1274.1L439.7 1134.7L426.6 1134.7L426.6 1265.1L414.1 1265.1L414.1 1561.5L401.0 1561.5L401.0 1351.8L388.2 1351.8L388.2 1346.1L374.8 1346.1L374.8 1237.2L362.7 1237.2L362.7 1305.3L349.9 1305.3L349.9 1691.6L337.4 1691.6L337.4 1533.0L324.6 1533.0L324.6 1365.9L311.9 1365.9L311.9 1657.6L299.4 1657.6L299.4 1375.5L287.0 1375.5L287.0 1185.9L274.8 1185.9L274.8 1450.3L262.7 1450.3L262.7 3300.0L257.0 3300.0Z" fill="#c026d3" fill-opacity="0.15"/>
<path d="M257.0 300.0H262.7V1222.4H274.8V1006.5H287.0V1204.6H299.4V1481.5H311.9V1214.7H324.6V1369.5H337.4V1534.7H349.9V1149.1H362.7V1081.1H374.8V1201.6H388.2V1202.6H401.0V1418.6H414.1V1106.1H426.6V991.0H439.7V1134.7H452.8V1423.6H466.0V1304.9H478.7V1188.8H491.9V1225.8H505.0V1072.8H517.8V1149.1H530.6V1394.4H543.4V1320.7H556.1V1368.1H569.3V1273.9H582.0V1103.2H594.5V1366.1H607.3V1215.7H619.7V1172.6H632.5V1326.1H645.3V1115.7H657.4V1199.6H670.2V1419.9H682.0V1405.8H694.4V1309.2H705.5V1353.6H718.7V1280.9H730.8V1364.9H742.4V1416.4H754.7V1405.3H767.1V1263.8H779.2V1175.5H790.8V1340.7H802.4V1222.4H814.0V1262.0H825.4V1420.2H837.0V1347.8H848.1V1308.2H859.4V1197.2H871.0V1416.4H881.6V1405.0H893.0V1265.8H903.8V1349.5H914.9V1319.3H925.8V1240.5H936.6V1282.9H947.7V1345.2H958.6V1177.1H969.2V1272.8H979.8V1369.7H990.4V1239.5H1000.7V1330.1H1011.0V1387.6H1021.6V1331.4H1032.0V1287.7H1042.3V1375.0H1052.4V1344.2H1062.5V1417.4H1072.6V1340.7H1082.7V1420.9H1092.8V1304.4H1102.9V1303.4H1112.7V1393.9H1122.6V1234.5H1132.4V1297.8H1142.2V1316.2H1151.8V1303.1H1161.7V1243.6H1171.2V1381.1H1180.8V1376.8H1190.2V1408.8H1199.7V1325.1H1209.1V1308.2H1218.4V1411.3H1227.7V1408.8H1237.1V1332.1H1246.4V1291.8H1255.8V1269.3H1264.6V1395.7H1273.7V1407.3H1282.7V1380.6H1291.8V1315.7H1300.9V1342.7H1310.0V1304.9H1318.8V1428.0H1327.1V1330.6H1335.6V1255.7H1344.5V1354.1H1353.3V1274.1H1362.1V1298.6H1370.5V1110.1H1379.3V1100.4H1388.1V747.0H1396.7V1110.6H1405.3V1352.8H1413.6V1453.2H1421.9V1436.6H1430.5V1268.3H1439.1V1248.1H1447.4V1285.2H1455.7V1341.5H1463.8V1318.2H1472.1V1325.8H1480.4V1291.0H1488.5V1394.4H1496.6V1318.0H1504.7V1401.2H1512.7V1309.4H1520.8V1379.8H1528.9V1312.9H1537.0V1262.2H1544.8V1307.6H1552.8V1290.5H1560.9V1360.1H1568.7V1344.0H1576.6V1347.3H1584.4V1306.1H1592.2V1322.5H1600.0V1330.9H1607.8V1391.9H1615.4V1387.4H1623.0V1309.2H1630.8V1395.9H1638.4V1371.7H1645.9V1330.1H1653.5V1306.9H1661.1V1366.2H1668.6V1288.5H1676.0V1235.2H1683.5V1317.0H1690.8V1308.2H1698.4V1404.5H1705.7V1399.5H1713.0V1402.0H1720.4V1401.5H1727.7V1397.7H1735.0V1487.0H1742.3V1345.2H1749.6V1252.7H1756.9V1354.1H1764.2V1328.8H1771.6V1369.2H1778.6V1271.3H1785.9V1319.5H1793.0V1404.5H1800.3V1371.7H1807.4V1259.5H1814.5V1441.6H1821.5V1287.7H1828.6V1383.8H1835.6V1417.1H1842.7V1398.2H1849.5V1449.9H1856.6V1384.8H1863.6V1293.5H1870.5V1420.2H1877.5V1298.1H1884.3V1265.3H1891.1V1417.9H1898.0V1444.9H1904.8V1403.3H1911.6V1352.3H1918.4V1316.2H1925.2V1387.4H1932.0V1365.4H1938.6V1247.6H1945.4V1332.1H1951.9V1337.7H1957.7V1317.5H1964.5V1422.2H1971.0V1364.2H1977.6V1280.4H1984.1V1101.3H1990.5V1220.4H1997.0V1373.7H2003.6V1385.6H2010.1V1372.2H2016.7V1298.1H2023.2V1391.4H2029.8V1356.6H2036.1V1377.5H2042.4V1357.9H2048.7V1409.6H2055.3V1392.7H2061.6V1246.3H2067.9V1267.3H2074.2V1358.1H2080.5V1335.7H2086.8V1415.4H2093.1V1318.7H2099.4V1355.8H2105.7V1373.2H2112.0V1414.1H2118.4V1345.5H2124.4V1339.4H2130.7V1431.5H2136.8V1498.4H2143.1V1395.2H2149.1V1411.6H2155.2V1374.8H2161.2V1475.7H2167.3V1473.4H2173.4V1427.7H2179.4V1325.6H2185.5V1378.0H2191.5V1472.6H2197.6V1475.7H2203.6V1354.1H2209.7V1283.4H2215.7V1374.2H2221.8V1332.1H2227.6V1470.1H2233.6V1247.4H2239.4V1241.8H2245.5V1220.9H2251.6V1433.5H2257.4V1370.5H2263.2V1377.5H2269.0V1304.4H2274.8V1273.3H2280.6V1346.5H2286.4V1330.6H2292.2V1338.9H2298.0V1378.5H2303.8V1378.5H2309.6V1386.4H2315.4V1328.1H2321.2V1347.8H2326.7V1414.6H2332.5V1328.8H2338.1V1334.6H2343.6V1417.6H2349.2V1415.4H2355.0V1337.7H2360.5V1331.4H2366.1V1312.9H2371.9V1463.3H2377.4V1423.9H2383.0V1331.4H2388.5V1423.4H2394.1V1463.8H2399.6V1472.1H2405.2V1443.1H2410.7V1402.8H2416.3V1374.2H2421.8V1286.0H2427.4V1323.8H2432.9V1444.9H2438.5V1436.8H2444.0V1379.3H2449.6V1262.7H2455.1V1330.6H2460.4V1423.4H2466.0V1386.1H2471.5V1470.9H2476.8V1381.3H2482.4V1389.4H2487.7V1396.4H2493.0V1444.9H2498.5V1322.5H2503.8V1269.8H2509.4V1332.1H2514.7V1398.2H2520.0V1419.2H2525.3V1373.0H2530.6V1523.0H2535.9V1324.3H2541.2V1426.5H2546.5V1341.5H2551.8V1402.5H2557.1V1486.5H2562.4V1407.5H2567.6V1394.4H2573.0V1373.6H2578.5V1319.3H2583.3V1416.9H2588.7V1250.1H2594.4V1380.6H2599.6V1364.8H2604.5V1253.8H2609.7V1329.8H2614.5V1425.5H2619.6V1523.0H2625.0V1418.5H2630.3V1461.3H2635.5V1486.3H2640.6V1289.3H2645.0V1292.9H2650.8V1266.8H2655.5V1467.6H2660.7V1523.0H2666.1V1253.8H2671.8V1313.2H2675.6V1502.0H2681.3V1354.8H2686.5V1184.2H2690.9V1163.0H2696.6V1185.5H2701.4V1437.0H2706.2V1336.5H2711.5V1124.0H2716.7V1419.2H2721.5V1321.2H2726.6V1506.8H2731.4V1340.9H2736.2V1517.8H2741.5V1455.2H2746.7V1349.7H2751.7V1112.9H2755.9V1475.6H2761.0V1441.2H2766.4V1270.2H2770.8V1283.0H2775.6V1238.7H2780.7V1444.1H2785.5V1404.0H2790.7V1432.2H2795.6V1352.9H2800.4V1401.7H2805.2V1441.2H2809.8V1528.7H2814.5V1365.9H2819.5V1282.1H2824.3V1179.4H2829.1V1531.6H2833.8V1413.5H2838.6V1331.2H2843.8V1349.7H2848.6V1193.2H2854.3V1220.5H2855.8" fill="none" stroke="#c026d3" stroke-width="3.4" stroke-linejoin="miter"/>
<path d="M543.1 660V1520" stroke="#2563eb" stroke-width="3.4" stroke-dasharray="20 20" fill="none"/>
<path d="M900.0 660V1520" stroke="#0ea5e9" stroke-width="3.4" stroke-dasharray="20 20" fill="none"/>
<path d="M1043.8 660V1520" stroke="#06b6d4" stroke-width="3.4" stroke-dasharray="20 20" fill="none"/>
<path d="M1135.5 660V1520" stroke="#14b8a6" stroke-width="3.4" stroke-dasharray="20 20" fill="none"/>
<path d="M1335.6 660V1520" stroke="#10b981" stroke-width="3.4" stroke-dasharray="20 20" fill="none"/>
<path d="M1373.0 660V1520" stroke="#22c55e" stroke-width="3.4" stroke-dasharray="20 20" fill="none"/>
<path d="M1391.4 660V1520" stroke="#84cc16" stroke-width="3.4" stroke-dasharray="20 20" fill="none"/>
<path d="M1989.2 660V1520" stroke="#eab308" stroke-width="3.4" stroke-dasharray="20 20" fill="none"/>
<path d="M1997.1 660V1520" stroke="#f59e0b" stroke-width="3.4" stroke-dasharray="20 20" fill="none"/>
<path d="M2048.2 660V1520" stroke="#f97316" stroke-width="3.4" stroke-dasharray="20 20" fill="none"/>
<path d="M2053.7 660V1520" stroke="#ef4444" stroke-width="3.4" stroke-dasharray="20 20" fill="none"/>
</g>
<rect x="425.4" y="1581" width="2.4" height="11.4" fill="#444"/>
<text x="426.6" y="1624.6" font-size="26.7" text-anchor="middle">1.5</text>
<rect x="744.9" y="1581" width="2.4" height="11.4" fill="#444"/>
<text x="746.1" y="1624.6" font-size="26.7" text-anchor="middle">2</text>
<rect x="1064.4" y="1581" width="2.4" height="11.4" fill="#444"/>
<text x="1065.6" y="1624.6" font-size="26.7" text-anchor="middle">2.5</text>
<rect x="1383.9" y="1581" width="2.4" height="11.4" fill="#444"/>
<text x="1385.1" y="1624.6" font-size="26.7" text-anchor="middle">3</text>
<rect x="1703.4" y="1581" width="2.4" height="11.4" fill="#444"/>
<text x="1704.6" y="1624.6" font-size="26.7" text-anchor="middle">3.5</text>
<rect x="2022.9" y="1581" width="2.4" height="11.4" fill="#444"/>
<text x="2024.1" y="1624.6" font-size="26.7" text-anchor="middle">4</text>
<rect x="2342.4" y="1581" width="2.4" height="11.4" fill="#444"/>
<text x="2343.6" y="1624.6" font-size="26.7" text-anchor="middle">4.5</text>
<rect x="2661.9" y="1581" width="2.4" height="11.4" fill="#444"/>
<text x="2663.1" y="1624.6" font-size="26.7" text-anchor="middle">5</text>
<text x="217" y="752.9" font-size="26.7" text-anchor="end" letter-spacing="-0.6">4e−21</text>
<text x="217" y="913.5" font-size="26.7" text-anchor="end" letter-spacing="-0.6">3e−21</text>
<text x="217" y="1074.1" font-size="26.7" text-anchor="end" letter-spacing="-0.6">2e−21</text>
<text x="217" y="1234.7" font-size="26.7" text-anchor="end" letter-spacing="-0.6">1e−21</text>
<text x="217" y="1395.3" font-size="26.7" text-anchor="end" letter-spacing="0">0</text>
<text x="217" y="1555.9" font-size="26.7" text-anchor="end" letter-spacing="-0.6">−1e−21</text>
<text x="1563" y="1683" font-size="31.2" text-anchor="middle">Wavelength (μm)</text>
<text transform="translate(113.9 1113) rotate(-90)" font-size="31.2" text-anchor="middle" letter-spacing="1.05">fλ (erg/s/cm²/Å)</text>
<rect x="2984" y="580" width="200" height="583" fill="#f8fafc" stroke="#e2e8f0" stroke-width="2.2"/>
<rect x="2996" y="609.4" width="66.6" height="13.6" fill="#c026d3" fill-opacity="0.15"/>
<text x="3074.4" y="623.4" font-size="22.25">1σ error</text>
<path d="M2996 660.3H3062.6" stroke="#c026d3" stroke-width="3.4"/>
<text x="3074.4" y="668.4" font-size="22.25">Flux</text>
<path d="M2996 707.1H3062.6" stroke="#2563eb" stroke-width="3.4" stroke-dasharray="20 20"/>
<text x="3074.4" y="715.6" font-size="22.25">Mg<tspan font-family="DejaVu Serif">II</tspan></text>
<path d="M2996 749.3H3062.6" stroke="#0ea5e9" stroke-width="3.4" stroke-dasharray="20 20"/>
<text x="3074.4" y="757.8" font-size="22.25">[O<tspan font-family="DejaVu Serif">II</tspan>]</text>
<path d="M2996 791.5H3062.6" stroke="#06b6d4" stroke-width="3.4" stroke-dasharray="20 20"/>
<text x="3074.4" y="800.0" font-size="22.25">Hδ</text>
<path d="M2996 833.8H3062.6" stroke="#14b8a6" stroke-width="3.4" stroke-dasharray="20 20"/>
<text x="3074.4" y="842.3" font-size="22.25">Hγ</text>
<path d="M2996 876.0H3062.6" stroke="#10b981" stroke-width="3.4" stroke-dasharray="20 20"/>
<text x="3074.4" y="884.5" font-size="22.25">Hβ</text>
<path d="M2996 918.2H3062.6" stroke="#22c55e" stroke-width="3.4" stroke-dasharray="20 20"/>
<text x="3074.4" y="926.7" font-size="22.25">[O<tspan font-family="DejaVu Serif">III</tspan>]<tspan font-size="9" dy="4.3" dx="1">1</tspan></text>
<path d="M2996 960.4H3062.6" stroke="#84cc16" stroke-width="3.4" stroke-dasharray="20 20"/>
<text x="3074.4" y="968.9" font-size="22.25">[O<tspan font-family="DejaVu Serif">III</tspan>]<tspan font-size="9" dy="4.3" dx="1">2</tspan></text>
<path d="M2996 1002.6H3062.6" stroke="#eab308" stroke-width="3.4" stroke-dasharray="20 20"/>
<text x="3074.4" y="1011.1" font-size="22.25">Hα</text>
<path d="M2996 1044.9H3062.6" stroke="#f59e0b" stroke-width="3.4" stroke-dasharray="20 20"/>
<text x="3074.4" y="1053.4" font-size="22.25">[N<tspan font-family="DejaVu Serif">II</tspan>]</text>
<path d="M2996 1087.1H3062.6" stroke="#f97316" stroke-width="3.4" stroke-dasharray="20 20"/>
<text x="3074.4" y="1095.6" font-size="22.25">[S<tspan font-family="DejaVu Serif">II</tspan>]<tspan font-size="9" dy="4.3" dx="1">1</tspan></text>
<path d="M2996 1129.3H3062.6" stroke="#ef4444" stroke-width="3.4" stroke-dasharray="20 20"/>
<text x="3074.4" y="1137.8" font-size="22.25">[S<tspan font-family="DejaVu Serif">II</tspan>]<tspan font-size="9" dy="4.3" dx="1">2</tspan></text>
<g transform="translate(2977.0 145.9) scale(0.0356)"><path transform="matrix(1 0 0 -1 0 850)" fill="#c3c5c7" d="m500 450c-83 0-150-67-150-150 0-83 67-150 150-150 83 0 150 67 150 150 0 83-67 150-150 150z m400 150h-120c-16 0-34 13-39 29l-31 93c-6 15-23 28-40 28h-340c-16 0-34-13-39-28l-31-94c-6-15-23-28-40-28h-120c-55 0-100-45-100-100v-450c0-55 45-100 100-100h800c55 0 100 45 100 100v450c0 55-45 100-100 100z m-400-550c-138 0-250 112-250 250 0 138 112 250 250 250 138 0 250-112 250-250 0-138-112-250-250-250z m365 380c-19 0-35 16-35 35 0 19 16 35 35 35 19 0 35-16 35-35 0-19-16-35-35-35z"/></g>
<g transform="translate(3048.0 145.9) scale(0.0356)"><path transform="matrix(1 0 0 -1 0 850)" fill="#7a7c7e" d="m1000-25l-250 251c40 63 63 138 63 218 0 224-182 406-407 406-224 0-406-182-406-406s183-406 407-406c80 0 155 22 218 62l250-250 125 125z m-812 250l0 438 437 0 0-438-437 0z m62 375l313 0 0-312-313 0 0 312z"/></g>
<g transform="translate(3101.0 145.9) scale(0.0356)"><path transform="matrix(1 0 0 -1 0 850)" fill="#c3c5c7" d="m1000 350l-187 188 0-125-250 0 0 250 125 0-188 187-187-187 125 0 0-250-250 0 0 125-188-188 186-187 0 125 252 0 0-250-125 0 187-188 188 188-125 0 0 250 250 0 0-126 187 188z"/></g>
<g transform="translate(3174.2 145.9) scale(0.0356)"><path transform="matrix(1 0 0 -1 0 850)" fill="#c3c5c7" d="m1 787l0-875 875 0 0 875-875 0z m687-500l-187 0 0-187-125 0 0 187-188 0 0 125 188 0 0 187 125 0 0-187 187 0 0-125z"/></g>
<g transform="translate(3228.2 145.9) scale(0.0356)"><path transform="matrix(1 0 0 -1 0 850)" fill="#c3c5c7" d="m0 788l0-876 875 0 0 876-875 0z m688-500l-500 0 0 125 500 0 0-125z"/></g>
<g transform="translate(3278.9 145.9) scale(0.0356)"><path transform="matrix(1 0 0 -1 0 850)" fill="#c3c5c7" d="m250 850l-187 0-63 0 0-62 0-188 63 0 0 188 187 0 0 62z m688 0l-188 0 0-62 188 0 0-188 62 0 0 188 0 62-62 0z m-875-938l0 188-63 0 0-188 0-62 63 0 187 0 0 62-187 0z m875 188l0-188-188 0 0-62 188 0 62 0 0 62 0 188-62 0z m-125 188l-1 0-93-94-156 156 156 156 92-93 2 0 0 250-250 0 0-2 93-92-156-156-156 156 94 92 0 2-250 0 0-250 0 0 93 93 157-156-157-156-93 94 0 0 0-250 250 0 0 0-94 93 156 157 156-157-93-93 0 0 250 0 0 250z"/></g>
<g transform="translate(3332.8 145.9) scale(0.0356)"><path transform="matrix(1 0 0 -1 0 850)" fill="#c3c5c7" d="m786 296v-267q0-15-11-26t-25-10h-214v214h-143v-214h-214q-15 0-25 10t-11 26v267q0 1 0 2t0 2l321 264 321-264q1-1 1-4z m124 39l-34-41q-5-5-12-6h-2q-7 0-12 3l-386 322-386-322q-7-4-13-4-7 2-12 7l-35 41q-4 5-3 13t6 12l401 334q18 15 42 15t43-15l136-114v109q0 8 5 13t13 5h107q8 0 13-5t5-13v-227l122-102q5-5 6-12t-4-13z"/></g>
</svg>
</body></html>
